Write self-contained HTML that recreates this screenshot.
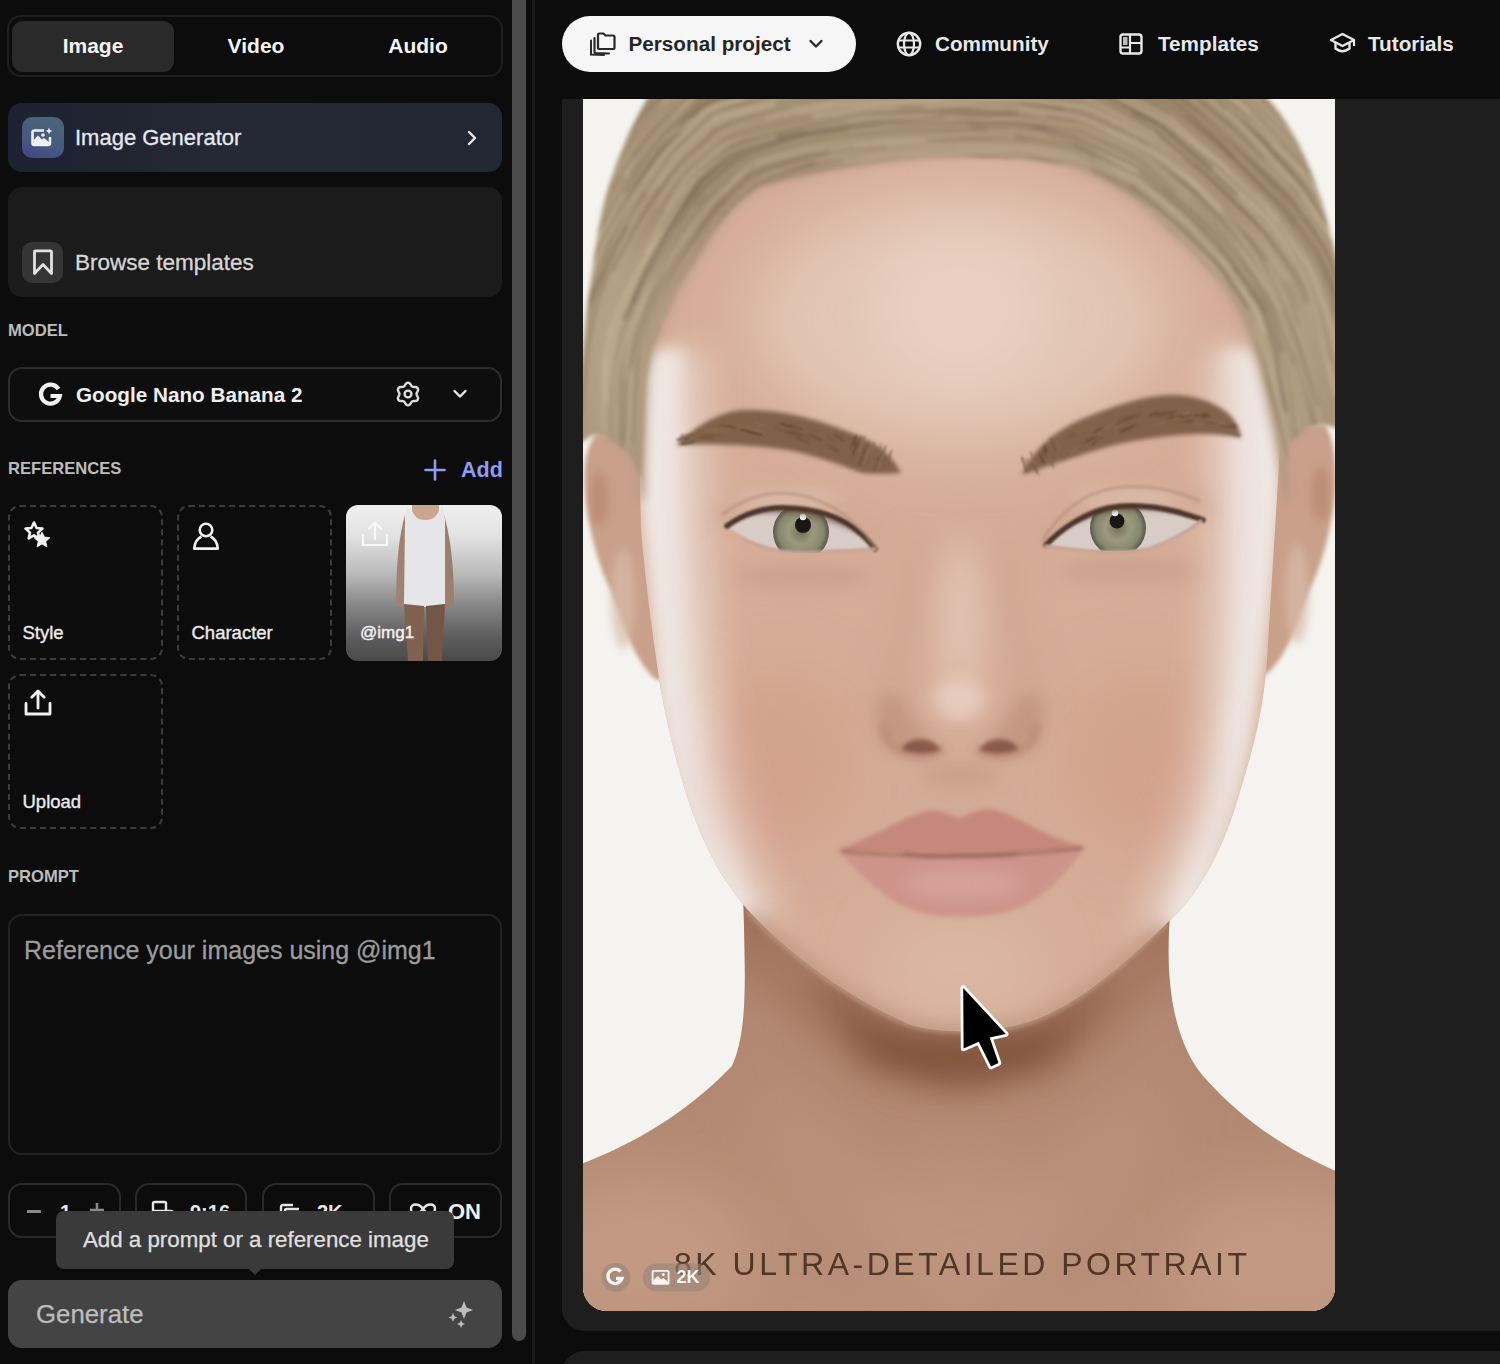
<!DOCTYPE html>
<html><head><meta charset="utf-8">
<style>
*{box-sizing:border-box;margin:0;padding:0}
html,body{width:1500px;height:1364px;overflow:hidden;background:#0c0c0c;font-family:"Liberation Sans",sans-serif;color:#fff}
.abs{position:absolute}
.t{position:absolute;line-height:0;white-space:nowrap}
.tabs{left:7px;top:15px;width:496px;height:62px;border:2px solid #1f1f1f;border-radius:14px}
.tab{position:absolute;top:4px;height:51px;font-size:21px;font-weight:bold;line-height:50px;text-align:center;color:#f4f4f4}
.tab.on{background:#2a2a2a;border-radius:11px}
.card{left:8px;width:494px;border-radius:14px}
.lbl{font-size:16.6px;font-weight:bold;color:#bcbcbc;left:8px}
.ref{width:155px;height:155px;border:2px dashed #3c3c3c;border-radius:12px}
.ref .t{left:12.5px;top:126px;font-size:18.5px;color:#ececec;-webkit-text-stroke:0.35px #ececec}
.btn{top:1183px;height:55px;border:2px solid #2a2a2a;border-radius:14px}
.nav{top:44px;font-size:20.7px;color:#e8e8e8;font-weight:bold}
svg.i{position:absolute;overflow:visible}
</style></head><body>
<!-- sidebar -->
<div class="abs tabs">
  <div class="tab on" style="left:3px;width:162px">Image</div>
  <div class="tab" style="left:165px;width:164px">Video</div>
  <div class="tab" style="left:327px;width:164px">Audio</div>
</div>
<div class="abs card" style="top:103px;height:69px;background:linear-gradient(90deg,#1e2130 0%,#242934 45%,#222832 100%)">
  <div class="abs" style="left:14px;top:14px;width:42px;height:41px;border-radius:10px;background:linear-gradient(200deg,#4d6778 0%,#46597e 60%,#3f4788 100%)"></div>
  <svg class="i" style="left:22px;top:24px" width="24" height="22" viewBox="0 0 24 22">
    <path d="M14,3.5 H4.5 Q2.5,3.5 2.5,5.5 V16 Q2.5,18 4.5,18 H18 Q20,18 20,16 V10" fill="none" stroke="#eef2f8" stroke-width="2.6"/>
    <path d="M3.5,17 L3.5,13 L8,8.5 L12,12.5 L14,11 L19,15 L19,17 Z" fill="#eef2f8"/>
    <circle cx="13" cy="8" r="1.8" fill="#eef2f8"/>
    <path d="M19,0.5 L20,3 L22.5,4 L20,5 L19,7.5 L18,5 L15.5,4 L18,3 Z" fill="#eef2f8"/>
  </svg>
  <div class="t" style="left:67px;top:35px;font-size:22px;color:#e6e9ef;-webkit-text-stroke:0.3px #e6e9ef">Image Generator</div>
  <svg class="i" style="left:457px;top:27px" width="14" height="16" viewBox="0 0 14 16"><path d="M4,2 L10,8 L4,14" fill="none" stroke="#e8e8e8" stroke-width="2.4" stroke-linecap="round" stroke-linejoin="round"/></svg>
</div>
<div class="abs card" style="top:187px;height:110px;background:#1b1b1b">
  <div class="abs" style="left:14px;top:55px;width:41px;height:41px;border-radius:10px;background:#353535"></div>
  <svg class="i" style="left:24px;top:62px" width="22" height="27" viewBox="0 0 22 27"><path d="M2.5,24.5 V3 Q2.5,1.8 3.7,1.8 H18.3 Q19.5,1.8 19.5,3 V24.5 L11,15.5 Z" fill="none" stroke="#e2e2e2" stroke-width="2.8" stroke-linejoin="round"/></svg>
  <div class="t" style="left:67px;top:76px;font-size:22.5px;color:#d6d6d6;-webkit-text-stroke:0.3px #d6d6d6">Browse templates</div>
</div>
<div class="t lbl" style="top:331px">MODEL</div>
<div class="abs card" style="top:367px;height:55px;border:2px solid #2c2c2c;background:#0e0e0e">
  <svg class="i" style="left:28px;top:14px" width="25" height="25" viewBox="0 0 25 25"><path d="M20.5,6 A9.5,9.5 0 1 0 21.8,13 H12.5" fill="none" stroke="#f2f2f2" stroke-width="4.2"/></svg>
  <div class="t" style="left:66px;top:26px;font-size:20.7px;font-weight:bold;color:#eeeeee">Google Nano Banana 2</div>
  <svg class="i" style="left:386px;top:12px" width="24" height="26" viewBox="0 0 24 26">
    <path d="M12.00,1.70 L12.97,1.93 L13.84,2.56 L14.56,3.44 L15.15,4.35 L15.67,5.13 L16.25,5.64 L16.98,5.88 L17.91,5.95 L19.00,6.00 L20.12,6.19 L21.10,6.63 L21.79,7.35 L22.07,8.30 L21.96,9.37 L21.56,10.44 L21.06,11.40 L20.65,12.24 L20.50,13.00 L20.65,13.76 L21.06,14.60 L21.56,15.56 L21.96,16.63 L22.07,17.70 L21.79,18.65 L21.10,19.37 L20.12,19.81 L19.00,20.00 L17.91,20.05 L16.98,20.12 L16.25,20.36 L15.67,20.87 L15.15,21.65 L14.56,22.56 L13.84,23.44 L12.97,24.07 L12.00,24.30 L11.03,24.07 L10.16,23.44 L9.44,22.56 L8.85,21.65 L8.33,20.87 L7.75,20.36 L7.02,20.12 L6.09,20.05 L5.00,20.00 L3.88,19.81 L2.90,19.37 L2.21,18.65 L1.93,17.70 L2.04,16.63 L2.44,15.56 L2.94,14.60 L3.35,13.76 L3.50,13.00 L3.35,12.24 L2.94,11.40 L2.44,10.44 L2.04,9.37 L1.93,8.30 L2.21,7.35 L2.90,6.63 L3.88,6.19 L5.00,6.00 L6.09,5.95 L7.02,5.88 L7.75,5.64 L8.33,5.13 L8.85,4.35 L9.44,3.44 L10.16,2.56 L11.03,1.93 Z" fill="none" stroke="#dcdcdc" stroke-width="2.4" stroke-linejoin="round"/>
    <circle cx="12" cy="13" r="3.4" fill="none" stroke="#dcdcdc" stroke-width="2.4"/>
  </svg>
  <svg class="i" style="left:442px;top:20px" width="16" height="10" viewBox="0 0 16 10"><path d="M2.5,2 L8,7.5 L13.5,2" fill="none" stroke="#e6e6e6" stroke-width="2.4" stroke-linecap="round" stroke-linejoin="round"/></svg>
</div>
<div class="t lbl" style="top:469px">REFERENCES</div>
<svg class="i" style="left:424px;top:459px" width="22" height="22" viewBox="0 0 22 22"><path d="M11,1.5 V20.5 M1.5,11 H20.5" stroke="#8e9df2" stroke-width="2.6" stroke-linecap="round"/></svg>
<div class="t" style="left:461px;top:470px;font-size:21.5px;font-weight:bold;color:#8e9df2">Add</div>
<div class="abs ref" style="left:8px;top:505px">
  <svg class="i" style="left:12px;top:13px" width="30" height="30" viewBox="0 0 30 30">
    <path d="M12,2.5 L14.6,8 L20.5,8.6 L16,12.6 L17.3,18.4 L12,15.4 L6.7,18.4 L8,12.6 L3.5,8.6 L9.4,8 Z" fill="none" stroke="#f0f0f0" stroke-width="2.6" stroke-linejoin="round"/>
    <path d="M20,12.5 L22.3,17.2 L27.5,17.8 L23.6,21.3 L24.7,26.5 L20,23.8 L15.3,26.5 L16.4,21.3 L12.5,17.8 L17.7,17.2 Z" fill="#f0f0f0" stroke="#f0f0f0" stroke-width="1.2" stroke-linejoin="round"/>
  </svg>
  <div class="t">Style</div>
</div>
<div class="abs ref" style="left:177px;top:505px">
  <svg class="i" style="left:13px;top:14px" width="30" height="30" viewBox="0 0 30 30">
    <circle cx="14" cy="9" r="6.3" fill="none" stroke="#f0f0f0" stroke-width="2.6"/>
    <path d="M9.5,15.5 Q3,18.5 2.2,27.6 H25.8 Q25,18.5 18.5,15.5" fill="none" stroke="#f0f0f0" stroke-width="2.6" stroke-linejoin="round"/>
  </svg>
  <div class="t">Character</div>
</div>
<div class="abs" style="left:346px;top:505px;width:156px;height:156px;border-radius:12px;background:linear-gradient(180deg,#efefef 0%,#e2e2e2 20%,#b8b8b8 45%,#8c8c8c 62%,#5c5c5c 85%,#4a4a4a 100%);overflow:hidden">
  <svg class="i" style="left:0;top:0" width="156" height="156" viewBox="0 0 156 156">
    <path d="M59,10 C53,30 50,60 50,100 L59,102 L62,60 Z" fill="#a08270"/>
    <path d="M98,10 C104,30 108,60 108,100 L99,102 L96,60 Z" fill="#9c7e6c"/>
    <path d="M66,0 L93,0 L93,6 C86,20 73,20 66,6 Z" fill="#c9a592"/>
    <path d="M62,0 C63,18 93,22 96,0 L99,14 L99,99 C88,103 70,103 58,99 L59,14 Z" fill="#e6e5e7"/>
    <path d="M58,99 L78,101 L77,156 L62,156 Z" fill="#80604f"/>
    <path d="M80,101 L99,99 L96,156 L82,156 Z" fill="#745646"/>
  </svg>
  <svg class="i" style="left:15px;top:15px" width="28" height="28" viewBox="0 0 28 28"><path d="M14,19 V3 M8,8.5 L14,2.5 L20,8.5 M2,15 V25 H26 V15" fill="none" stroke="#fafafa" stroke-width="2.2" stroke-linecap="round" stroke-linejoin="round" opacity="0.9"/></svg>
  <div class="t" style="left:14px;top:128px;font-size:17px;color:#f4f4f4;-webkit-text-stroke:0.4px #f4f4f4">@img1</div>
</div>
<div class="abs ref" style="left:8px;top:674px">
  <svg class="i" style="left:13px;top:12px" width="30" height="30" viewBox="0 0 30 30"><path d="M15,20 V3.5 M8.8,9.2 L15,3 L21.2,9.2 M3,15.5 V26 H27 V15.5" fill="none" stroke="#f2f2f2" stroke-width="2.8" stroke-linecap="round" stroke-linejoin="round"/></svg>
  <div class="t">Upload</div>
</div>
<div class="t lbl" style="top:877px">PROMPT</div>
<div class="abs card" style="top:914px;height:241px;border:2px solid #222">
  <div class="t" style="left:14px;top:34px;font-size:25px;color:#9c9c9c;-webkit-text-stroke:0.3px #9c9c9c">Reference your images using @img1</div>
</div>
<div class="abs btn" style="left:8px;width:113px">
  <div class="abs" style="left:17px;top:25px;width:14px;height:3px;background:#8a8a8a"></div>
  <div class="t" style="left:50px;top:27px;font-size:20px;font-weight:bold;color:#e6e6e6">1</div>
  <svg class="i" style="left:79px;top:17px" width="16" height="16" viewBox="0 0 16 16"><path d="M8,1 V15 M1,8 H15" stroke="#8a8a8a" stroke-width="2.6"/></svg>
</div>
<div class="abs btn" style="left:135px;width:112px">
  <svg class="i" style="left:14px;top:15px" width="26" height="22" viewBox="0 0 26 22"><path d="M2,20 V3.5 Q2,2 3.5,2 H13.5 Q15,2 15,3.5 V11 H2 M15,11 H20 Q22,11 22,13 V20" fill="none" stroke="#e6e6e6" stroke-width="2.4"/></svg>
  <div class="t" style="left:53px;top:27px;font-size:20px;font-weight:bold;color:#e6e6e6">9:16</div>
</div>
<div class="abs btn" style="left:262px;width:113px">
  <svg class="i" style="left:13px;top:15px" width="26" height="22" viewBox="0 0 26 22"><path d="M4,21 V7 Q4,5 6,5 H16 M8,21 V10.5 Q8,9 9.5,9 H22 M12,13.5 H24 M12,17.5 H24" fill="none" stroke="#e6e6e6" stroke-width="2.4"/></svg>
  <div class="t" style="left:53px;top:27px;font-size:20px;font-weight:bold;color:#e6e6e6">2K</div>
</div>
<div class="abs btn" style="left:389px;width:113px">
  <svg class="i" style="left:17px;top:16px" width="30" height="16" viewBox="0 0 30 16"><path d="M15,8 C11,2 3,2 3,8 C3,14 11,14 15,8 C19,2 27,2 27,8 C27,14 19,14 15,8 Z" fill="none" stroke="#e6e6e6" stroke-width="2.4"/></svg>
  <div class="t" style="left:57px;top:27px;font-size:22px;font-weight:bold;color:#f0f0f0">ON</div>
</div>
<div class="abs" style="left:56px;top:1211px;width:398px;height:58px;background:#3a3a3a;border-radius:8px">
  <div class="t" style="left:27px;top:29px;font-size:22.3px;color:#e0e0e0;-webkit-text-stroke:0.25px #e0e0e0">Add a prompt or a reference image</div>
  <div class="abs" style="left:191px;top:56px;width:0;height:0;border-left:8px solid transparent;border-right:8px solid transparent;border-top:8px solid #3a3a3a"></div>
</div>
<div class="abs" style="left:8px;top:1280px;width:494px;height:68px;border-radius:14px;background:#444">
  <div class="t" style="left:28px;top:34px;font-size:25.8px;color:#bdbdbd;-webkit-text-stroke:0.25px #bdbdbd">Generate</div>
  <svg class="i" style="left:438px;top:19px" width="30" height="30" viewBox="0 0 30 30">
    <path d="M18,2 L20.5,8.5 L27,11 L20.5,13.5 L18,20 L15.5,13.5 L9,11 L15.5,8.5 Z" fill="#bdbdbd"/>
    <path d="M7,14 L8.3,17.2 L11.5,18.5 L8.3,19.8 L7,23 L5.7,19.8 L2.5,18.5 L5.7,17.2 Z" fill="#bdbdbd"/>
    <path d="M15,21 L16.2,23.8 L19,25 L16.2,26.2 L15,29 L13.8,26.2 L11,25 L13.8,23.8 Z" fill="#bdbdbd"/>
  </svg>
</div>
<div class="abs" style="left:512px;top:0;width:14px;height:1341px;border-radius:0 0 7px 7px;background:#4b4b4b"></div>
<div class="abs" style="left:532px;top:0;width:3px;height:1364px;background:#191919"></div>
<!-- nav -->
<div class="abs" style="left:562px;top:16px;width:294px;height:56px;border-radius:28px;background:#f6f6f6"></div>
<svg class="i" style="left:589px;top:32px" width="27" height="24" viewBox="0 0 27 24">
  <path d="M9,4 V2.8 Q9,1.5 10.3,1.5 H14.5 L16.5,3.5 H24 Q25.5,3.5 25.5,5 V15.5 Q25.5,17 24,17 H10.5 Q9,17 9,15.5 Z" fill="none" stroke="#2a2a2a" stroke-width="2.2" stroke-linejoin="round"/>
  <path d="M5.5,6 V20 Q5.5,21 6.5,21.2 L20,21.5" fill="none" stroke="#2a2a2a" stroke-width="2.2" stroke-linecap="round"/>
  <path d="M2,8.5 V22.5 L15,23" fill="none" stroke="#2a2a2a" stroke-width="2" stroke-linecap="round"/>
</svg>
<div class="t nav" style="left:628.5px;color:#262626">Personal project</div>
<svg class="i" style="left:808px;top:38px" width="16" height="12" viewBox="0 0 16 12"><path d="M2.5,3 L8,8.5 L13.5,3" fill="none" stroke="#2a2a2a" stroke-width="2.4" stroke-linecap="round" stroke-linejoin="round"/></svg>
<svg class="i" style="left:896px;top:31px" width="26" height="26" viewBox="0 0 26 26"><circle cx="13" cy="13" r="11.2" fill="none" stroke="#e8e8e8" stroke-width="2.4"/><ellipse cx="13" cy="13" rx="5" ry="11.2" fill="none" stroke="#e8e8e8" stroke-width="2.2"/><path d="M2.5,9.5 H23.5 M2.5,16.5 H23.5" stroke="#e8e8e8" stroke-width="2.2"/></svg>
<div class="t nav" style="left:935px">Community</div>
<svg class="i" style="left:1119px;top:33px" width="24" height="22" viewBox="0 0 24 22"><rect x="1.5" y="1.5" width="21" height="19" rx="2.5" fill="none" stroke="#e8e8e8" stroke-width="2.4"/><path d="M11,1.5 V20.5 M11,10 H22.5 M1.5,14.5 H11" stroke="#e8e8e8" stroke-width="2.2"/><rect x="4" y="4" width="4.5" height="8" fill="#e8e8e8" opacity="0.8"/></svg>
<div class="t nav" style="left:1158px">Templates</div>
<svg class="i" style="left:1329px;top:32px" width="27" height="23" viewBox="0 0 27 23"><path d="M13.5,2 L25,8 L13.5,14 L2,8 Z" fill="none" stroke="#e8e8e8" stroke-width="2.4" stroke-linejoin="round"/><path d="M6.5,10.5 V16.5 Q13.5,22 20.5,16.5 V10.5" fill="none" stroke="#e8e8e8" stroke-width="2.4"/><path d="M25,8 V14" stroke="#e8e8e8" stroke-width="2.2"/></svg>
<div class="t nav" style="left:1368px">Tutorials</div>
<!-- main -->
<div class="abs" style="left:562px;top:99px;width:960px;height:1232px;background:#1e1e1e;border-radius:0 0 0 22px"></div>
<div class="abs" style="left:562px;top:1351px;width:960px;height:60px;background:#1e1e1e;border-radius:22px 0 0 0"></div>
<div class="abs" id="portrait" style="left:583px;top:99px;width:752px;height:1212px;background:#eeece8;border-radius:0 0 24px 24px;overflow:hidden">
<svg width="752" height="1212" viewBox="0 0 752 1212" style="position:absolute;left:0;top:0">
<defs>
<filter id="b1" x="-50%" y="-50%" width="200%" height="200%"><feGaussianBlur stdDeviation="1.2"/></filter>
<filter id="b2" x="-50%" y="-50%" width="200%" height="200%"><feGaussianBlur stdDeviation="2"/></filter>
<filter id="b4" x="-50%" y="-50%" width="200%" height="200%"><feGaussianBlur stdDeviation="4"/></filter>
<filter id="b8" x="-50%" y="-50%" width="200%" height="200%"><feGaussianBlur stdDeviation="8"/></filter>
<filter id="b16" x="-50%" y="-50%" width="200%" height="200%"><feGaussianBlur stdDeviation="16"/></filter>
<filter id="b30" x="-50%" y="-50%" width="200%" height="200%"><feGaussianBlur stdDeviation="30"/></filter>
<linearGradient id="gHair" x1="0" y1="0" x2="0" y2="1">
  <stop offset="0" stop-color="#a18a70"/>
  <stop offset="0.4" stop-color="#a99377"/>
  <stop offset="1" stop-color="#a48f73"/>
</linearGradient>
<linearGradient id="gNeck" x1="0" y1="0" x2="0" y2="1">
  <stop offset="0" stop-color="#9a6e57"/>
  <stop offset="0.3" stop-color="#b0866f"/>
  <stop offset="1" stop-color="#bb917a"/>
</linearGradient>
<radialGradient id="gIris" cx="0.5" cy="0.5" r="0.5">
  <stop offset="0" stop-color="#75705a"/>
  <stop offset="0.45" stop-color="#9b9a7e"/>
  <stop offset="0.8" stop-color="#86876e"/>
  <stop offset="1" stop-color="#56574a"/>
</radialGradient>
<clipPath id="cNeck"><path d="M-10,1068 C40,1050 98,1020 149,967 C166,930 162,870 160,790 L590,790 C580,860 585,935 620,977 C660,1022 705,1052 762,1076 L762,1220 L-10,1220 Z"/></clipPath>
<clipPath id="cFace"><path d="M55,300 C50,60 200,20 377,20 C560,20 712,60 700,300 L684,560 C680,620 667,660 651,712 C635,760 612,800 584,824 C545,862 492,910 442,924 C410,934 345,937 317,921 C270,900 210,860 164,810 C132,772 103,722 78,592 C70,540 62,480 58,430 Z"/></clipPath>
<clipPath id="cHair"><path d="M67,-5 L680,-5 C700,15 720,44 739,103 C745,125 750,145 755,165 L755,330 C740,322 718,326 704,350 L704,400 C700,370 693,340 689,323 C684,300 680,280 675,264 C670,245 666,232 660,220 C650,200 642,188 631,176 C618,160 603,145 587,132 C572,118 558,104 543,94 C525,82 505,72 484,65 C462,63 430,58 380,58 C340,58 290,62 235,73 C212,78 195,82 176,88 C160,98 150,108 138,123 C128,135 120,150 111,164 C102,178 95,190 88,205 C80,222 75,235 70,249 C67,260 66,270 64,279 C62,320 60,360 59,400 L58,380 C48,352 30,338 10,336 L-5,345 L-5,293 C2,230 8,170 18,117 C25,85 40,40 67,-5 Z"/></clipPath>
<clipPath id="cEyeL"><path d="M144,427 C165,412 185,408 205,409 C230,410 250,416 265,425 C278,433 286,442 292,450 C280,452 265,451 250,452 C230,455 210,455 190,450 C172,445 158,437 144,427 Z"/></clipPath>
<clipPath id="cEyeR"><path d="M463,446 C478,430 500,415 525,409 C550,404 575,408 595,413 C605,416 612,418 618,421 C605,432 590,442 565,450 C540,454 500,452 463,446 Z"/></clipPath>
<filter id="thin" x="-5%" y="-20%" width="110%" height="140%"><feMorphology operator="erode" radius="0.35"/><feGaussianBlur stdDeviation="0.5"/></filter>
</defs>
<rect width="752" height="1212" fill="#f4f3ef"/>
<!-- neck & shoulders -->
<path d="M-10,1068 C40,1050 98,1020 149,967 C166,930 162,870 160,790 L590,790 C580,860 585,935 620,977 C660,1022 705,1052 762,1076 L762,1220 L-10,1220 Z" fill="url(#gNeck)"/>
<g clip-path="url(#cNeck)">
 <g filter="url(#b16)">
  <path d="M150,800 C210,862 270,905 317,925 C350,940 410,935 442,926 C492,910 545,865 590,815 L600,860 C560,930 470,985 377,990 C290,985 200,930 150,860 Z" fill="#9a6c53" opacity="0.55"/>
  <path d="M230,870 C270,905 317,925 345,935 C370,940 400,938 442,926 C480,912 510,890 530,872 C510,930 450,985 377,990 C300,985 250,930 230,870 Z" fill="#7f5238" opacity="0.75"/>
  <ellipse cx="377" cy="955" rx="110" ry="32" fill="#7a4e36" opacity="0.45"/>
 </g>
 <path d="M164,812 C210,860 270,902 317,922 C345,936 410,935 442,925 C492,910 545,862 584,824" stroke="#d9b8a4" stroke-width="4" fill="none" opacity="0.5" filter="url(#b2)"/>
 <g filter="url(#b30)">
  <ellipse cx="60" cy="1150" rx="110" ry="70" fill="#c49c86" opacity="0.8"/>
  <ellipse cx="700" cy="1160" rx="110" ry="70" fill="#c49c86" opacity="0.8"/>
  <ellipse cx="377" cy="1140" rx="90" ry="80" fill="#c19882" opacity="0.6"/>
  <path d="M190,1000 C230,1060 280,1110 330,1160" stroke="#c29b85" stroke-width="40" fill="none" opacity="0.6"/>
  <path d="M565,1000 C525,1060 475,1110 425,1160" stroke="#c29b85" stroke-width="40" fill="none" opacity="0.6"/>
  <path d="M240,1150 C280,1180 320,1200 350,1212" stroke="#a87d66" stroke-width="30" fill="none" opacity="0.4"/>
  <path d="M515,1150 C475,1180 435,1200 405,1212" stroke="#a87d66" stroke-width="30" fill="none" opacity="0.4"/>
  <ellipse cx="175" cy="930" rx="30" ry="90" fill="#b88e77" opacity="0.5"/>
  <ellipse cx="580" cy="930" rx="30" ry="90" fill="#b88e77" opacity="0.5"/>
 </g>
</g>
<!-- ears -->
<path d="M12,336 C4,348 0,365 2,390 C4,420 12,460 28,492 C38,520 50,560 72,580 L84,582 L72,338 Z" fill="#c9a08a" filter="url(#b2)"/>
<path d="M742,326 C750,338 754,360 752,390 C750,420 742,460 726,492 C716,520 704,560 682,576 L670,578 L682,330 Z" fill="#c9a08a" filter="url(#b2)"/>
<g filter="url(#b4)" opacity="0.7">
  <ellipse cx="16" cy="400" rx="9" ry="28" fill="#b8866c"/><ellipse cx="40" cy="500" rx="12" ry="50" fill="#d8bca9"/>
  <ellipse cx="738" cy="395" rx="9" ry="28" fill="#b8866c"/><ellipse cx="714" cy="495" rx="12" ry="50" fill="#d8bca9"/>
</g>
<!-- face -->
<path d="M55,300 C50,60 200,20 377,20 C560,20 712,60 700,300 L684,560 C680,620 667,660 651,712 C635,760 612,800 584,824 C545,862 492,910 442,924 C410,934 345,937 317,921 C270,900 210,860 164,810 C132,772 103,722 78,592 C70,540 62,480 58,430 Z" fill="#d6ae98"/>
<g clip-path="url(#cFace)">
 <g filter="url(#b30)">
  <ellipse cx="377" cy="220" rx="210" ry="130" fill="#e2c5b3"/>
  <ellipse cx="377" cy="210" rx="90" ry="80" fill="#e8d0c1"/>
  <ellipse cx="195" cy="660" rx="85" ry="90" fill="#cf9c84" opacity="0.55"/>
  <ellipse cx="560" cy="660" rx="85" ry="90" fill="#cf9c84" opacity="0.55"/>
  <ellipse cx="377" cy="870" rx="80" ry="45" fill="#ddbca8" opacity="0.8"/>
  <ellipse cx="377" cy="700" rx="70" ry="30" fill="#cfa590" opacity="0.6"/>
 </g>
 <g filter="url(#b8)">
  <path d="M50,250 L103,250 C104,330 102,430 112,560 C120,640 140,720 182,822 L150,822 C110,760 85,690 75,600 C68,500 55,400 50,300 Z" fill="#efe8e4"/>
  <path d="M704,250 L640,250 C644,330 650,430 642,560 C636,640 615,720 572,832 L605,832 C640,760 665,690 675,600 C690,500 700,400 704,300 Z" fill="#efe8e4"/>
 </g>
 <g filter="url(#b16)" opacity="0.8">
  <path d="M95,250 L125,250 C126,330 124,430 134,560 C142,640 162,720 200,822 L175,822 C135,760 110,690 100,600 C92,500 90,400 95,300 Z" fill="#e8d6cc"/>
  <path d="M660,250 L620,250 C624,330 630,430 622,560 C616,640 595,720 552,832 L580,832 C615,760 640,690 650,600 C665,500 665,400 660,300 Z" fill="#e8d6cc"/>
 </g>
 <g filter="url(#b8)">
  <path d="M164,812 C210,860 270,902 317,922 C345,936 410,935 442,925 C492,910 545,862 584,824" stroke="#a77d66" stroke-width="10" fill="none" opacity="0.6"/>
 </g>
</g>
<!-- hair -->
<g filter="url(#b2)"><g clip-path="url(#cHair)">
 <rect x="-5" y="-5" width="770" height="430" fill="url(#gHair)"/>
 <g filter="url(#b30)">
  <ellipse cx="200" cy="110" rx="110" ry="50" fill="#857058" opacity="0.6"/>
  <ellipse cx="420" cy="10" rx="150" ry="40" fill="#927564" opacity="0.6"/>
  <ellipse cx="690" cy="250" rx="40" ry="120" fill="#bfad92" opacity="0.6"/>
  <ellipse cx="30" cy="250" rx="40" ry="120" fill="#c2b096" opacity="0.6"/>
 </g>
<g fill="none" stroke-linecap="round" stroke-linejoin="round" opacity="0.85">
<path d="M524.9,31.4 L539.3,38.1 L553.7,44.6 L567.9,51.4 L580.1,60.9 L592.3,70.5 L604.3,80.0 L616.2,89.5 L627.1,100.2 L637.8,111.0 L648.5,121.9 L659.1,133.0 L668.8,144.9 L677.1,158.1" stroke="#c4b295" stroke-width="4.4" opacity="0.55"/>
<path d="M50.1,359.9 L51.6,345.6 L53.1,331.0 L54.4,316.2 L55.5,301.3 L56.3,286.2 L57.1,271.1 L59.5,256.3 L61.7,241.7 L66.0,228.0 L70.4,214.6 L74.8,201.5 L79.9,189.1 L86.0,177.3 L92.3,165.7 L98.9,154.3 L106.6,143.5 L114.7,132.6 L122.9,121.7 L132.6,111.4 L143.8,102.3 L155.2,92.8 L166.6,83.1 L180.0,76.9 L194.3,72.5 L208.5,67.9 L222.3,63.3 L235.9,58.9" stroke="#b8a585" stroke-width="1.6" opacity="0.60"/>
<path d="M210.5,0.4 L225.6,-1.9 L240.8,-3.9 L256.2,-5.8 L271.8,-7.4 L287.8,-8.3 L304.1,-8.1 L320.7,-8.0 L337.6,-8.1 L354.7,-8.3 L371.9,-8.9 L389.1,-9.1" stroke="#8a765c" stroke-width="1.7" opacity="0.50"/>
<path d="M11.4,158.6 L19.0,143.1 L27.7,128.0 L36.3,112.9 L44.8,97.7 L54.3,83.1 L63.7,68.5 L73.0,53.9 L83.5,40.5 L95.9,28.8 L108.1,17.1 L120.4,5.5 L135.3,-1.4 L151.5,-5.7 L167.8,-9.9 L184.2,-14.1 L200.8,-17.9 L217.8,-20.2 L234.9,-22.6 L252.0,-25.0 L269.2,-27.4 L286.5,-29.3 L303.9,-30.2 L321.3,-31.2 L338.6,-32.3 L355.8,-33.4 L373.0,-34.6 L390.1,-35.1 L407.0,-35.1 L424.0,-35.0 L440.8,-34.8 L457.4,-32.4 L474.0,-29.5 L490.6,-26.6 L507.2,-23.6 L522.6,-16.6 L538.0,-9.0 L553.4,-1.3 L569.0,6.3 L584.4,14.3" stroke="#72604a" stroke-width="4.8" opacity="0.50"/>
<path d="M-20.9,344.6 L-19.0,327.3 L-17.3,309.6 L-15.8,291.7 L-14.5,273.5 L-13.5,255.2 L-12.5,237.0 L-9.6,219.1 L-6.9,201.3 L-1.6,184.7 L3.8,168.5 L9.2,152.6 L15.5,137.4 L22.9,123.1 L30.6,109.0 L38.7,95.1 L48.0,81.9 L57.8,68.6 L67.8,55.2 L79.4,42.8 L93.1,31.6 L106.9,20.2" stroke="#c4b295" stroke-width="3.4" opacity="0.55"/>
<path d="M48.2,269.4 L51.2,255.3 L54.1,241.1 L59.4,227.7 L64.9,214.3 L70.3,200.9 L76.5,187.8 L83.5,175.2 L90.5,162.5 L97.4,149.9 L105.3,137.9 L113.1,125.9 L120.9,113.9 L129.9,102.9 L140.4,93.2 L150.9,83.6 L161.5,73.9 L174.3,68.1 L188.2,64.5 L202.2,60.8 L216.2,57.0 L230.2,53.6 L244.5,51.4" stroke="#72604a" stroke-width="2.6" opacity="0.50"/>
<path d="M-29.7,150.3 L-22.4,133.0 L-14.3,116.1 L-5.0,99.6 L4.3,83.2 L13.5,66.7 L23.7,50.9 L33.9,35.1 L44.1,19.3 L55.7,4.9 L69.2,-7.9 L82.8,-20.5 L96.4,-33.1 L112.7,-40.6 L130.7,-45.4" stroke="#5e4d3a" stroke-width="2.2" opacity="0.40"/>
<path d="M50.2,342.9 L50.9,328.7 L51.6,314.5 L52.3,300.2 L53.0,285.9 L53.9,271.7 L56.7,257.6 L59.4,243.6 L64.5,230.3 L69.7,217.1 L74.9,203.9 L80.8,191.2 L87.6,178.9 L94.4,166.6 L101.3,154.4 L109.0,142.7 L116.8,131.0 L124.6,119.3 L133.6,108.6 L144.1,99.1 L154.7,89.5 L165.3,80.0 L178.0,74.2 L191.8,70.4 L205.5,66.6 L219.3,62.7 L233.1,59.2 L247.0,56.9 L261.0,54.6 L274.9,52.3 L288.8,50.1 L302.7,48.4" stroke="#72604a" stroke-width="2.2" opacity="0.50"/>
<path d="M529.6,-36.5 L545.3,-28.8 L561.0,-20.9 L576.8,-13.0 L592.5,-4.5 L606.2,7.2 L620.0,18.9 L634.0,30.6 L648.1,42.3 L661.1,55.1 L674.1,67.8 L687.2,80.4 L700.2,92.9 L712.1,106.2 L722.1,120.7 L732.1,135.2 L742.0,149.6 L749.4,165.2 L754.9,181.7 L760.4,198.3 L765.5,215.1 L769.1,232.4 L772.8,249.8" stroke="#72604a" stroke-width="4.7" opacity="0.50"/>
<path d="M116.8,61.3 L128.9,50.5 L140.9,39.6 L155.3,32.8 L170.8,28.3 L186.2,23.7 L201.4,19.1 L216.6,14.8 L231.9,12.0 L247.2,9.3 L262.4,6.8 L277.5,4.4 L292.8,2.7 L308.2,2.2 L323.7,1.8 L339.4,1.5 L355.2,1.1" stroke="#b8a585" stroke-width="1.8" opacity="0.60"/>
<path d="M102.1,92.9 L112.4,81.0 L124.2,70.3 L136.0,59.4 L147.6,48.5 L161.4,41.7 L176.3,37.1 L191.0,32.5 L205.5,28.1 L220.0,24.0 L234.8,21.5 L249.5,19.2 L264.2,17.0 L279.0,15.0 L294.0,13.7 L309.2,13.4 L324.6,13.2 L340.2,12.9 L355.9,12.6 L371.7,12.2 L387.7,12.3 L403.6,12.6 L419.6,12.9 L435.5,12.9 L451.2,14.8" stroke="#ad9a7b" stroke-width="3.6" opacity="0.60"/>
<path d="M180.0,74.8 L192.7,71.3 L205.5,68.0 L218.4,64.8 L231.6,62.2 L245.3,60.8 L259.2,59.5 L273.4,58.1 L287.7,56.6 L302.3,55.4 L317.0,55.0 L331.8,54.3 L346.6,53.3 L361.3,52.2 L375.7,50.8 L390.0,49.9 L404.1,49.4 L417.9,48.9 L431.5,48.5 L444.8,50.0 L457.9,52.0 L470.9,54.2 L483.9,56.6 L496.0,62.5 L508.1,69.1 L520.4,75.8" stroke="#ad9a7b" stroke-width="2.0" opacity="0.60"/>
<path d="M-3.4,246.2 L0.5,229.8 L4.3,213.2 L10.8,197.3 L17.4,181.3 L23.9,165.3 L30.9,149.7 L38.8,134.6 L46.6,119.6 L54.2,104.8 L62.7,90.7" stroke="#72604a" stroke-width="4.3" opacity="0.50"/>
<path d="M446.0,-78.2 L464.1,-75.4 L482.2,-72.2 L500.4,-68.9 L518.7,-65.5 L535.7,-57.7 L552.6,-49.3 L569.7,-41.0 L586.8,-32.7 L603.7,-24.1 L618.6,-12.1 L633.4,-0.3 L648.2,11.5 L663.0,23.1 L676.5,36.0 L689.8,48.9 L703.1,61.7 L716.2,74.6 L728.1,88.5 L738.1,103.9" stroke="#8a765c" stroke-width="3.5" opacity="0.50"/>
<path d="M-1.8,315.5 L-0.0,298.9 L1.6,282.1 L3.1,264.9 L4.7,247.6 L8.1,230.5 L11.2,213.3 L16.8,197.1 L22.4,181.0 L27.7,165.3 L33.7,150.1 L40.7,135.8 L47.7,121.8 L54.9,108.1 L63.3,95.2 L71.9,82.5 L80.9,69.8 L91.5,58.3 L104.1,48.1 L117.0,37.6 L130.0,27.0 L145.6,20.4 L162.5,15.9 L179.3,11.2 L195.9,6.1 L212.4,1.2 L228.8,-2.3 L244.9,-5.9 L260.8,-9.3 L276.3,-12.7 L291.7,-15.1 L307.1,-16.2 L322.4,-17.0 L337.8,-17.5 L353.4,-17.7 L369.1,-17.7" stroke="#8a765c" stroke-width="3.9" opacity="0.50"/>
<path d="M429.3,50.1 L442.6,52.2 L456.0,54.7 L469.4,57.3 L482.9,60.0 L495.6,65.9 L508.2,72.4 L521.0,78.8 L533.9,85.1 L546.7,91.7 L558.0,100.6 L569.2,109.5 L580.5,118.2 L591.6,126.8 L601.8,136.2 L611.9,145.7 L621.8,155.1 L631.5,164.5 L640.3,174.7 L647.6,186.1 L654.9,197.5 L662.1,209.1 L667.6,221.7 L671.7,235.1 L675.9,248.7 L680.0,262.4 L683.1,276.4 L686.4,290.4 L689.8,304.4 L693.3,318.4 L696.5,332.3 L699.6,346.1 L702.7,359.8" stroke="#72604a" stroke-width="5.0" opacity="0.50"/>
<path d="M464.6,-75.8 L482.8,-72.7 L501.0,-69.5 L519.3,-66.2 L536.3,-58.5 L553.1,-50.2 L570.1,-41.9 L587.1,-33.7 L603.9,-25.0 L618.6,-13.0 L633.4,-1.1 L648.1,10.8 L662.9,22.6 L676.4,35.6 L689.8,48.6 L703.2,61.6 L716.4,74.6 L728.4,88.5 L738.6,103.9" stroke="#5e4d3a" stroke-width="2.7" opacity="0.40"/>
<path d="M-65.2,194.0 L-61.1,174.9 L-53.8,156.7 L-46.2,138.5 L-38.7,120.2 L-30.3,102.4 L-20.8,85.1 L-11.4,67.9 L-2.0,50.7 L8.5,34.3 L19.0,18.0 L29.4,1.7 L41.4,-13.2 L55.5,-26.2 L69.7,-39.2 L83.9,-52.1 L101.1,-59.8 L120.0,-64.6 L138.9,-69.5 L157.9,-74.4 L177.0,-79.0" stroke="#8a765c" stroke-width="1.7" opacity="0.50"/>
<path d="M206.7,-55.1 L224.7,-57.8 L242.6,-60.5 L260.6,-63.1 L278.8,-65.0 L297.1,-65.7 L315.5,-66.4 L333.9,-67.1 L352.4,-67.8 L371.0,-68.6 L389.6,-68.7 L408.2,-68.4 L426.9,-68.1 L445.4,-67.8" stroke="#d2c3a6" stroke-width="3.2" opacity="0.50"/>
<path d="M300.2,35.5 L314.3,34.8 L328.4,34.3 L342.6,33.9 L356.9,33.7 L371.4,33.5 L386.0,33.8 L400.8,34.6 L415.7,35.3 L430.7,35.9 L445.7,38.2 L460.6,40.6 L475.5,42.8 L490.4,44.9 L504.0,50.3 L517.4,56.0 L530.6,61.8 L543.7,67.5 L556.4,73.6 L567.3,82.5 L578.1,91.5 L588.9,100.7" stroke="#b8a585" stroke-width="4.4" opacity="0.60"/>
<path d="M465.8,-82.7 L484.3,-79.5 L502.9,-76.3 L521.4,-73.1 L538.7,-65.4 L555.8,-57.0 L573.0,-48.7 L590.2,-40.3 L607.2,-31.6 L622.1,-19.5 L637.0,-7.4 L651.9,4.6 L666.8,16.6 L680.5,29.8 L694.0,43.1 L707.5,56.3 L720.9,69.6 L733.1,83.8" stroke="#ad9a7b" stroke-width="3.9" opacity="0.60"/>
<path d="M75.5,103.3 L83.3,90.1 L91.1,77.3 L100.4,65.7 L111.7,55.7 L123.2,45.9 L135.0,36.1 L149.5,30.5 L165.5,27.1 L181.7,23.5 L198.1,19.6 L214.5,15.8 L231.2,13.0 L247.8,10.1 L264.2,6.8 L280.3,3.5 L296.2,0.7" stroke="#b8a585" stroke-width="2.3" opacity="0.60"/>
<path d="M560.1,65.2 L571.9,74.7 L583.7,84.1 L595.5,93.5 L607.3,102.8 L618.0,113.2 L628.6,123.6 L639.1,134.0 L649.6,144.4 L659.1,155.7 L667.2,168.2 L675.2,180.8 L683.3,193.4 L689.5,207.0 L694.2,221.3 L698.9,235.8 L703.6,250.3 L707.1,265.1 L710.7,279.9 L714.3,294.6 L717.9,309.3 L721.2,324.1 L724.3,338.8 L727.3,353.4 L730.4,368.0" stroke="#ad9a7b" stroke-width="2.5" opacity="0.60"/>
<path d="M139.4,92.4 L150.3,82.6 L161.1,72.7 L174.1,66.6 L188.2,62.6 L202.3,58.5 L216.2,54.5 L230.1,50.7 L244.3,48.3 L258.4,46.0 L272.4,43.7 L286.4,41.5 L300.5,40.0 L314.8,39.4 L329.1,38.9 L343.4,38.4 L357.9,37.9 L372.4,37.5 L387.0,37.5 L401.6,38.0 L416.3,38.4 L431.1,38.7 L445.6,40.8 L460.1,43.0 L474.6,45.2 L489.0,47.4 L502.3,52.8" stroke="#ad9a7b" stroke-width="4.8" opacity="0.60"/>
<path d="M353.7,-53.9 L371.9,-54.8 L390.2,-55.2 L408.3,-55.1 L426.4,-55.1 L444.4,-55.1 L462.0,-52.8 L479.6,-50.2 L497.0,-47.6 L514.3,-44.8 L530.3,-37.9 L546.1,-30.2 L562.0,-22.4 L577.8,-14.5 L593.5,-6.2 L607.2,5.5 L621.1,17.2 L635.0,28.9 L649.1,40.6 L662.0,53.4 L675.0,66.2 L688.1,78.9 L701.1,91.5 L712.9,104.9 L723.1,119.6 L733.1,134.3" stroke="#5e4d3a" stroke-width="1.7" opacity="0.40"/>
<path d="M428.6,-88.9 L448.5,-88.6 L468.1,-86.1 L487.6,-83.4 L506.9,-80.9 L526.0,-78.4 L543.5,-71.5 L560.6,-63.9 L577.5,-56.2 L594.3,-48.4 L610.7,-39.9 L624.9,-27.8 L639.1,-15.4 L653.4,-2.8 L667.8,9.9 L681.2,24.1 L694.7,38.4 L708.5,52.7 L722.4,66.9 L735.3,81.9 L746.6,98.3 L757.8,114.4 L769.1,130.4 L777.9,147.3 L784.6,165.0 L791.1,182.5 L797.2,200.1 L801.6,218.1 L805.7,236.1 L809.7,254.3 L813.6,272.6 L816.8,291.2 L819.7,310.1 L822.7,329.2" stroke="#8a765c" stroke-width="2.9" opacity="0.50"/>
<path d="M372.5,-6.1 L388.2,-6.3 L404.1,-5.9 L419.9,-5.4 L435.8,-4.9 L451.6,-2.3 L467.4,0.6 L483.4,3.4 L499.3,6.3 L514.2,12.7 L528.9,19.7 L543.6,26.5 L558.3,33.4 L572.8,40.4 L585.3,50.4 L597.8,60.3 L610.2,70.2 L622.6,80.2 L633.9,91.2 L645.0,102.4 L656.1,113.7 L667.3,125.0 L677.3,137.2 L685.9,150.7 L694.6,164.2" stroke="#b8a585" stroke-width="1.7" opacity="0.60"/>
<path d="M59.8,192.0 L65.7,178.6 L72.7,165.9 L79.7,153.1 L86.8,140.5 L94.8,128.5 L103.1,116.4 L111.4,104.4 L121.0,93.3 L132.2,83.4 L143.5,73.4 L154.8,63.4 L168.3,57.2 L183.0,53.1 L197.6,48.9" stroke="#c4b295" stroke-width="1.9" opacity="0.55"/>
<path d="M-17.2,293.4 L-15.5,276.2 L-13.8,258.6 L-11.9,240.8 L-8.0,223.1 L-4.4,205.2 L1.7,188.3 L7.8,171.4 L13.6,154.7 L20.1,138.7 L27.4,123.5 L34.7,108.5 L42.1,93.9 L50.6,80.2 L59.4,66.8 L68.4,53.5 L79.1,41.4 L91.9,30.9 L105.1,20.2 L118.5,9.3 L134.6,2.8 L152.2,-1.6 L169.8,-6.2 L187.3,-11.2 L204.6,-16.1 L222.1,-19.6 L239.2,-23.3" stroke="#72604a" stroke-width="1.6" opacity="0.50"/>
<path d="M77.1,-31.5 L90.3,-44.3 L106.4,-51.7 L124.1,-56.1 L142.1,-60.4 L160.3,-64.5 L178.9,-68.3 L198.0,-70.4 L217.4,-72.7 L236.9,-75.1 L256.6,-77.7 L276.3,-79.9 L296.1,-81.1 L315.9,-82.6 L335.4,-84.2 L354.7,-85.9 L373.8,-87.7 L392.7,-88.8 L411.3,-89.1 L429.7,-89.3 L448.0,-89.3 L466.0,-86.6 L484.0,-83.3 L502.0,-79.8 L520.2,-76.1 L537.2,-67.8 L554.3,-58.8 L571.6,-49.8 L589.1,-40.8" stroke="#ad9a7b" stroke-width="4.8" opacity="0.60"/>
<path d="M-21.7,267.6 L-21.9,250.4 L-21.6,233.5 L-18.9,217.2 L-15.9,200.9 L-9.8,185.7 L-3.2,170.6 L3.7,155.4 L11.7,140.4 L21.0,125.8 L30.3,111.0 L39.8,95.8 L50.2,81.1 L60.5,66.1 L70.6,50.9 L81.8,36.7 L94.6,24.0 L107.2,11.4 L119.4,-1.2 L134.1,-8.9 L150.0,-13.8 L165.8,-18.4 L181.7,-22.8 L197.7,-26.6 L214.1,-28.6" stroke="#8a765c" stroke-width="5.0" opacity="0.50"/>
<path d="M65.2,92.4 L73.3,78.8 L81.5,65.5 L91.1,53.5 L102.7,43.2 L114.6,32.9 L126.8,22.8 L141.8,17.0 L158.3,13.4 L175.1,9.7 L191.9,5.6 L208.9,1.6 L226.1,-1.2 L243.2,-4.2 L260.1,-7.5 L276.8,-11.0 L293.2,-13.8 L309.4,-15.6 L325.4,-17.3 L341.1,-18.8 L356.7,-20.0 L372.2,-20.9 L387.7,-21.0 L403.3,-20.2 L419.1,-19.2" stroke="#c4b295" stroke-width="4.1" opacity="0.55"/>
<path d="M598.4,-11.7 L612.9,-0.2 L627.4,11.1 L641.9,22.4 L656.2,33.5 L669.2,45.9 L682.1,58.3 L694.8,70.7 L707.4,83.3 L718.7,96.8 L728.3,111.9 L737.8,127.1 L747.4,142.5 L754.8,159.1 L760.4,176.7 L766.1,194.3 L771.7,212.1 L776.0,230.3 L780.4,248.4 L785.0,266.4 L789.6,284.3 L793.7,302.2 L797.7,320.0 L801.5,337.7 L805.4,355.3" stroke="#72604a" stroke-width="1.6" opacity="0.50"/>
<path d="M55.0,-29.9 L68.6,-43.0 L82.2,-55.9 L98.9,-63.3 L117.3,-67.7 L136.0,-71.9 L154.9,-76.2 L174.1,-80.1 L194.0,-82.5 L214.0,-85.0 L234.1,-87.7 L254.3,-90.7 L274.5,-93.1 L294.7,-94.6 L314.7,-96.2 L334.5,-98.0 L354.1,-99.8 L373.4,-101.6 L392.5,-102.6 L411.4,-102.8 L430.2,-102.7 L448.9,-102.5 L467.4,-99.5 L485.9,-95.9 L504.5,-92.1 L523.4,-88.1" stroke="#72604a" stroke-width="4.7" opacity="0.50"/>
<path d="M389.7,-64.9 L408.9,-64.7 L428.0,-64.7 L446.9,-64.9 L465.5,-63.0 L483.7,-60.8 L501.7,-58.7 L519.5,-56.5 L535.7,-49.9 L551.5,-42.5 L567.3,-34.9 L582.9,-27.0 L598.4,-18.5 L611.9,-6.4 L625.5,5.9 L639.4,18.3 L653.5,30.8 L666.8,44.5 L680.2,58.2" stroke="#5e4d3a" stroke-width="4.5" opacity="0.40"/>
<path d="M-4.4,224.3 L-1.4,207.9 L4.4,192.4 L10.5,177.1 L16.7,161.8 L23.8,147.0 L32.1,132.7 L40.4,118.3 L48.9,103.9 L58.4,90.1 L68.0,76.1 L77.6,62.1 L88.5,49.1 L101.1,37.5 L113.7,25.8 L126.2,14.1 L141.1,6.9 L157.2,2.2 L173.3,-2.5 L189.3,-7.2 L205.3,-11.4 L221.5,-14.0 L237.8,-16.5 L254.1,-18.9 L270.5,-21.2 L287.0,-22.8 L303.8,-23.3 L320.6,-23.8 L337.5,-24.3 L354.5,-24.9 L371.6,-25.5 L388.7,-25.7 L405.9,-25.3 L423.0,-25.1 L440.1,-25.0 L457.0,-22.8 L473.7,-20.4 L490.3,-17.9 L506.8,-15.5" stroke="#b8a585" stroke-width="3.4" opacity="0.60"/>
<path d="M371.3,-73.4 L389.1,-73.5 L407.0,-72.9 L424.9,-72.0 L443.1,-71.1 L461.1,-67.7 L479.4,-64.0 L497.9,-60.4 L516.5,-56.9 L533.9,-49.2 L551.2,-41.1 L568.5,-33.2 L585.8,-25.4 L602.8,-17.5 L617.5,-6.4 L632.0,4.7 L646.3,15.7 L660.5,26.8 L673.2,39.2 L685.8,51.8" stroke="#d2c3a6" stroke-width="4.3" opacity="0.50"/>
<path d="M189.2,-47.3 L208.1,-50.2 L226.9,-53.3 L245.6,-56.6 L264.0,-60.0 L282.4,-62.9 L300.6,-64.5 L318.7,-66.2 L336.5,-67.7 L354.2,-69.0 L371.7,-70.1 L389.3,-70.4 L406.9,-69.8 L424.6,-69.0 L442.4,-68.0 L460.3,-64.6" stroke="#5e4d3a" stroke-width="4.3" opacity="0.40"/>
<path d="M122.8,95.4 L134.2,85.3 L145.6,75.0 L156.9,64.6 L170.3,58.1 L184.7,53.7 L199.0,49.3 L213.1,44.9 L227.1,40.9 L241.2,38.3 L255.4,35.9 L269.4,33.7 L283.6,31.6 L297.8,30.2 L312.3,29.9 L326.8,29.7 L341.6,29.5 L356.5,29.3 L371.6,29.0 L386.8,29.2 L402.1,29.7 L417.5,30.1 L432.8,30.3 L448.0,32.2 L463.0,34.3" stroke="#c4b295" stroke-width="4.3" opacity="0.55"/>
<path d="M438.3,-18.3 L454.5,-15.9 L470.7,-13.1 L486.9,-10.3 L503.1,-7.5 L518.2,-0.8 L533.1,6.4 L548.1,13.6 L563.1,20.8 L577.9,28.3 L590.9,38.8 L603.8,49.2 L616.7,59.7 L629.6,70.1 L641.4,81.6 L653.1,93.1" stroke="#5e4d3a" stroke-width="5.0" opacity="0.40"/>
<path d="M-74.8,287.1 L-74.6,267.7 L-74.4,248.4 L-74.1,229.3 L-73.2,210.4 L-69.5,191.9 L-65.6,173.4 L-58.2,155.8 L-50.4,138.2 L-42.4,120.5 L-33.4,103.0 L-23.2,86.0 L-13.0,68.7 L-2.8,51.3 L8.3,34.4 L19.3,17.4 L30.1,0.4 L42.3,-15.3 L56.3,-29.1 L70.2,-42.8 L84.0,-56.3" stroke="#b8a585" stroke-width="3.1" opacity="0.60"/>
<path d="M357.0,9.0 L373.8,8.0 L390.5,7.3 L407.0,6.8 L423.3,6.1 L439.2,5.3 L454.6,6.4 L469.6,7.9 L484.4,9.6 L498.9,11.6 L512.1,17.4 L525.1,24.2 L538.1,31.2 L551.3,38.6 L564.6,46.6 L576.3,57.6 L588.4,68.7 L600.8,79.7 L613.5,90.7 L625.5,102.5 L637.6,114.1 L649.9,125.3 L662.1,136.2 L673.2,147.6 L682.7,159.9" stroke="#72604a" stroke-width="4.4" opacity="0.50"/>
<path d="M92.2,56.0 L105.1,44.7 L118.0,33.1 L130.7,21.4 L145.7,14.0 L161.8,9.0 L177.8,3.9 L193.5,-1.1 L209.1,-5.6 L224.9,-8.5 L240.6,-11.3 L256.2,-13.8 L271.9,-16.1 L287.8,-17.5 L303.9,-17.8 L320.2,-18.0 L336.7,-18.1 L353.4,-18.2 L370.3,-18.4 L387.4,-18.2 L404.7,-17.5 L421.9,-17.1 L439.2,-16.9 L456.2,-14.8 L473.1,-12.5 L489.8,-10.5 L506.3,-8.4 L521.3,-2.6 L536.0,3.9 L550.5,10.4" stroke="#c4b295" stroke-width="4.4" opacity="0.55"/>
<path d="M512.9,64.9 L526.4,70.9 L539.8,76.8 L552.9,82.9 L564.2,91.5 L575.4,100.1 L586.4,108.7 L597.3,117.3 L607.1,126.9 L616.8,136.8 L626.5,146.7 L636.1,156.9 L644.8,167.9 L652.2,180.1 L659.8,192.4 L667.5,204.9 L673.5,218.2 L678.3,232.2 L683.1,246.2 L687.9,260.2 L691.7,274.3 L695.5,288.3" stroke="#b8a585" stroke-width="3.2" opacity="0.60"/>
<path d="M373.1,30.2 L387.4,30.0 L401.7,30.5 L416.1,31.1 L430.5,31.7 L444.9,34.3 L459.4,37.1 L474.1,39.9 L488.8,42.6 L502.5,48.6 L516.2,55.0 L529.8,61.3 L543.5,67.5 L556.9,73.9 L568.5,82.8 L580.0,91.8 L591.4,100.7 L602.6,109.6 L612.8,119.5 L622.9,129.6 L632.9,139.9 L642.9,150.2 L652.0,161.4 L659.7,173.8 L667.5,186.4 L675.4,199.0 L681.5,212.5 L686.3,226.8 L691.2,241.1 L695.9,255.3 L699.7,269.8 L703.4,284.2 L707.2,298.5 L711.0,312.6 L714.3,326.8" stroke="#d2c3a6" stroke-width="4.8" opacity="0.50"/>
<path d="M105.7,-15.9 L122.2,-23.4 L140.2,-28.3 L158.1,-33.5 L175.9,-38.7 L193.5,-43.7 L211.4,-47.0 L229.1,-50.3 L246.6,-53.5 L264.0,-56.6 L281.4,-58.8 L298.9,-59.7 L316.4,-60.4 L334.0,-61.0 L351.7,-61.4 L369.6,-61.8 L387.6,-61.4 L405.9,-60.5 L424.2,-59.6 L442.8,-58.9 L461.2,-56.0 L479.6,-53.0 L498.0,-50.1 L516.4,-47.4" stroke="#c4b295" stroke-width="4.0" opacity="0.55"/>
<path d="M38.9,351.3 L38.7,336.8 L38.6,322.6 L38.5,308.6 L38.7,294.7 L39.2,280.9 L40.2,267.1 L43.3,253.6 L46.7,239.9 L52.7,226.8 L59.1,213.5 L65.5,199.9 L72.5,186.5 L80.3,173.3" stroke="#8a765c" stroke-width="4.3" opacity="0.50"/>
<path d="M344.3,42.3 L359.9,41.4 L375.4,40.2 L390.7,39.2 L405.7,38.5 L420.4,37.7 L434.8,36.9 L448.7,37.9 L462.2,39.4 L475.6,41.1 L488.7,43.2 L500.8,48.9 L512.8,55.5 L524.9,62.3 L537.3,69.4 L549.8,77.0 L560.9,87.3 L572.4,97.6 L584.1,107.8 L596.2,117.7 L607.5,128.4 L618.9,138.8 L630.3,148.8 L641.5,158.5 L651.7,168.7 L660.2,179.8 L668.4,190.7 L676.2,201.7 L681.9,213.6 L685.8,226.4 L689.5,239.5 L692.9,252.9 L695.1,267.1 L697.3,281.5 L699.8,296.3 L702.4,311.3" stroke="#5e4d3a" stroke-width="4.8" opacity="0.40"/>
<path d="M44.0,278.2 L43.8,263.8 L45.6,250.1 L47.6,236.6 L52.4,224.1 L57.6,211.8 L63.2,199.4 L69.8,187.4 L77.7,175.6 L85.7,163.6 L93.9,151.2 L103.1,139.1 L112.2,126.6 L121.1,113.8 L130.9,101.7 L142.0,90.8 L152.8,79.8 L163.2,68.9 L175.5,62.0 L188.7,57.4 L201.7,53.1 L214.5,49.2 L227.5,45.9 L240.9,44.2 L254.4,42.7 L268.2,41.5 L282.3,40.5" stroke="#d2c3a6" stroke-width="4.9" opacity="0.50"/>
<path d="M494.5,-36.4 L512.9,-33.6 L530.0,-27.1 L546.7,-20.2 L563.1,-13.6 L579.3,-7.0 L594.9,-0.1 L608.2,10.1 L621.2,20.5 L634.0,31.1 L646.6,42.0 L658.1,54.4 L669.6,67.2 L681.2,80.2 L693.1,93.5 L704.1,107.9 L713.7,123.7 L723.7,139.4 L733.9,155.0 L742.1,171.5 L748.8,188.7 L755.5,205.5 L761.9,222.1 L766.9,238.8 L771.8,255.3 L776.3,271.5" stroke="#8a765c" stroke-width="5.0" opacity="0.50"/>
<path d="M56.1,204.6 L60.5,191.1 L65.8,178.2 L72.2,166.1 L78.9,154.2 L85.9,142.4 L94.1,131.2 L102.7,119.9 L111.5,108.4 L121.7,97.7 L133.7,88.0 L145.7,78.0 L157.6,67.7 L171.6,61.0 L186.6,56.2 L201.3,51.3 L215.6,46.3 L229.6,41.7 L243.7,38.4 L257.4,35.4 L271.0,32.7 L284.5,30.3 L298.1,28.8 L311.8,28.6 L325.8,28.6 L340.0,28.9 L354.5,29.3 L369.4,29.7 L384.6,30.5 L400.1,31.7 L415.8,32.6 L431.7,33.2 L447.4,35.3 L463.0,37.4 L478.5,39.1 L493.8,40.7 L507.7,45.5" stroke="#b8a585" stroke-width="2.5" opacity="0.60"/>
<path d="M100.6,110.0 L108.3,97.5 L117.3,86.2 L127.9,76.4 L138.7,66.7 L149.7,57.0 L163.1,51.5 L177.8,48.0 L192.7,44.5 L207.7,40.9 L222.9,37.5 L238.4,35.2 L253.8,32.7 L269.2,30.1 L284.4,27.3 L299.6,25.1 L314.6,23.8 L329.5,22.4 L344.3,21.2 L358.9,20.1 L373.4,19.1 L387.9,18.8 L402.4,19.2 L417.0,19.8 L431.6,20.5 L446.2,23.2 L461.0,26.2 L475.9,29.3" stroke="#8a765c" stroke-width="4.4" opacity="0.50"/>
<path d="M138.0,116.6 L149.2,107.1 L160.3,97.2 L171.2,87.1 L184.0,80.6 L197.7,76.0 L211.1,71.4 L224.2,66.9 L237.1,62.8 L250.1,60.2 L262.9,57.8 L275.7,55.7 L288.6,53.8 L301.7,52.8 L315.0,52.8 L328.6,53.0 L342.4,53.3 L356.6,53.5 L371.0,53.6 L385.6,54.1 L400.4,54.8 L415.3,55.2 L430.2,55.3 L444.8,56.9 L459.2,58.5 L473.4,60.0 L487.3,61.4 L500.0,65.9 L512.2,71.0 L524.2,76.3 L536.0,81.7 L547.5,87.8 L557.3,96.6" stroke="#5e4d3a" stroke-width="3.5" opacity="0.40"/>
<path d="M593.6,-43.6 L611.7,-35.1 L627.5,-23.4 L643.2,-11.9 L658.5,-0.5 L673.7,10.7 L687.2,23.2 L700.5,35.9 L713.5,48.7 L726.2,61.8 L737.7,76.1 L747.3,92.2 L756.9,108.6 L766.7,125.2 L774.2,143.2 L780.1,162.4 L786.2,181.6 L792.4,200.9 L797.3,220.5 L802.5,239.9 L807.9,259.0 L813.3,277.9 L818.2,296.5" stroke="#72604a" stroke-width="2.0" opacity="0.50"/>
<path d="M40.4,386.7 L41.9,372.1 L43.3,357.2 L44.5,342.1 L45.6,326.8 L46.4,311.4 L46.9,296.1 L47.2,280.7 L47.5,265.6 L49.6,250.9 L51.6,236.4 L56.0,222.9 L60.7,209.7 L65.4,196.8 L71.1,184.4 L77.9,172.6 L84.9,160.9 L92.2,149.1 L100.7,137.7 L109.3,126.2 L118.1,114.5 L128.1,103.4 L139.6,93.5 L151.1,83.2 L162.4,72.8 L175.7,66.1" stroke="#d2c3a6" stroke-width="2.1" opacity="0.50"/>
<path d="M67.0,275.6 L68.9,262.4 L70.8,249.4 L75.2,237.3 L80.0,225.4 L84.9,213.6 L90.8,202.2 L97.7,191.1 L104.9,179.8 L112.2,168.4 L120.4,157.3 L128.6,146.0 L136.8,134.4 L146.0,123.5 L156.5,113.7 L166.8,103.8 L176.8,93.8 L188.6,87.5 L201.3,83.3 L213.8,79.2 L226.2,75.3 L238.6,71.9 L251.3,70.0 L264.0,68.3 L276.8,66.8 L289.9,65.4 L303.2,64.6 L316.8,64.7 L330.7,64.8 L344.8,64.7 L359.0,64.4 L373.3,64.0 L387.6,63.8 L402.0,63.8 L416.2,63.6" stroke="#8a765c" stroke-width="3.7" opacity="0.50"/>
<path d="M387.6,42.7 L402.3,43.0 L417.0,43.1 L431.6,43.0 L446.0,44.8 L460.2,46.7 L474.3,48.6 L488.2,50.6 L501.0,55.9 L513.6,61.8 L526.1,67.8" stroke="#72604a" stroke-width="3.4" opacity="0.50"/>
<path d="M-48.3,258.1 L-48.1,239.8 L-47.4,221.6 L-44.2,203.9 L-40.9,186.3 L-34.3,169.7 L-27.3,153.1 L-20.0,136.6 L-11.8,120.4 L-2.2,104.6 L7.4,88.6 L17.1,72.5 L27.8,56.9" stroke="#ad9a7b" stroke-width="1.6" opacity="0.60"/>
<path d="M302.6,45.1 L315.6,44.5 L328.8,44.3 L342.1,44.4 L355.7,44.7 L369.6,45.1 L383.8,46.0 L398.4,47.3 L413.3,48.5 L428.4,49.4 L443.4,51.8 L458.6,54.1 L473.6,56.1 L488.5,57.8 L502.1,62.5 L515.3,67.5 L528.2,72.5 L540.7,77.5 L552.8,82.9 L562.9,91.1 L572.8,99.6 L582.7,108.4 L592.5,117.6 L601.6,128.0" stroke="#c4b295" stroke-width="3.1" opacity="0.55"/>
<path d="M337.0,-40.9 L354.4,-41.7 L371.9,-42.6 L389.3,-42.9 L406.7,-42.5 L424.1,-42.2 L441.5,-41.9 L458.7,-39.4 L475.9,-36.5 L493.0,-33.7 L510.1,-30.8 L526.0,-23.9 L541.7,-16.5 L557.4,-9.0 L573.1,-1.5 L588.6,6.4 L602.1,17.4 L615.6,28.5 L629.1,39.5 L642.6,50.6 L654.9,62.8 L667.3,75.1 L679.6,87.4 L692.0,99.7 L703.2,112.9 L712.8,127.4" stroke="#5e4d3a" stroke-width="2.5" opacity="0.40"/>
<path d="M205.6,-8.5 L222.2,-11.1 L238.8,-13.6 L255.3,-16.2 L271.9,-18.7 L288.5,-20.7 L305.3,-21.5 L322.0,-22.4 L338.7,-23.2 L355.4,-24.1 L372.1,-24.9 L388.8,-25.1 L405.6,-24.8 L422.3,-24.4 L439.0,-24.1 L455.6,-21.6 L472.1,-18.8 L488.6,-16.1 L505.2,-13.3 L520.5,-6.7 L535.6,0.5 L550.8,7.7 L565.9,14.9 L580.9,22.4 L593.8,33.0 L606.8,43.6 L619.8,54.2 L632.8,64.8 L644.6,76.6 L656.5,88.4 L668.3,100.2 L680.1,112.1 L690.9,124.8 L700.1,138.8 L709.3,152.8" stroke="#b8a585" stroke-width="3.9" opacity="0.60"/>
<path d="M-13.3,95.9 L-3.0,79.1 L7.3,62.0 L18.5,45.4 L29.5,28.6 L40.2,11.7 L52.1,-4.0 L65.7,-17.8 L79.1,-31.5 L92.3,-45.0 L108.2,-53.1 L125.6,-58.1 L143.1,-62.7 L160.7,-67.2 L178.5,-71.0 L197.0,-72.9 L215.8,-74.8 L234.9,-76.7 L254.2,-78.8 L273.9,-80.2 L293.9,-80.8 L313.9,-81.6 L334.0,-82.7 L353.9,-84.1 L373.7,-85.8 L393.3,-86.9 L412.5,-87.5 L431.5,-88.1 L450.2,-88.7 L468.4,-86.7 L486.3,-84.1 L504.2,-81.2 L522.0,-78.1 L538.4,-70.2 L554.9,-61.4 L571.5,-52.4 L588.4,-43.3 L605.3,-33.7 L620.3,-20.7 L635.6,-7.7" stroke="#b8a585" stroke-width="4.4" opacity="0.60"/>
<path d="M514.0,59.9 L526.8,66.1 L539.7,72.4 L552.5,78.9 L563.6,88.2 L574.7,97.5 L585.8,106.7 L597.1,116.0 L607.4,126.2 L617.7,136.5 L628.0,146.7 L638.3,156.9 L647.8,167.8" stroke="#c4b295" stroke-width="3.8" opacity="0.55"/>
<path d="M339.9,-7.3 L356.8,-8.2 L373.6,-9.3 L390.4,-10.0 L407.0,-10.3 L423.3,-10.6 L439.5,-10.9 L455.3,-9.2 L470.9,-7.1 L486.4,-4.8 L501.8,-2.3 L516.0,4.2 L530.0,11.3 L544.1,18.7 L558.4,26.2 L572.6,34.1" stroke="#d2c3a6" stroke-width="2.0" opacity="0.50"/>
<path d="M79.6,4.7 L92.1,-7.5 L104.6,-19.3 L119.9,-26.1 L136.9,-30.1 L154.2,-34.0 L171.7,-37.8 L189.5,-41.4 L207.9,-43.5 L226.5,-45.8 L245.1,-48.3 L263.8,-51.0 L282.6,-53.3 L301.3,-54.7 L319.9,-56.3 L338.2,-58.0 L356.3,-59.7 L374.1,-61.5 L391.8,-62.4 L409.2,-62.7 L426.5,-62.7 L443.7,-62.4 L460.7,-59.6 L477.7,-56.3 L494.9,-52.7 L512.3,-49.0 L528.7,-41.0 L545.1,-32.4 L561.7,-23.9 L578.6,-15.5 L595.4,-6.9" stroke="#b8a585" stroke-width="4.9" opacity="0.60"/>
<path d="M33.5,306.9 L33.9,292.0 L34.3,277.2 L35.1,262.5 L37.9,248.1 L40.7,233.7 L46.2,220.0 L51.9,206.4 L57.7,192.8 L64.3,179.5 L71.9,166.5 L79.4,153.5 L87.0,140.4 L95.4,127.8 L103.7,115.1 L112.0,102.4 L121.4,90.7 L132.4,80.3 L143.2,70.0 L154.0,59.7 L167.0,53.6 L181.2,49.6 L195.4,45.7 L209.6,41.9 L223.9,38.5 L238.5,36.4 L253.2,34.4 L268.0,32.4 L282.9,30.3 L297.9,28.8 L313.0,28.2 L328.1,27.5 L343.3,26.8 L358.4,26.0 L373.5,25.1 L388.6,24.7 L403.6,24.8 L418.6,24.8 L433.4,24.9 L448.1,26.9" stroke="#8a765c" stroke-width="2.1" opacity="0.50"/>
<path d="M50.7,56.8 L60.9,41.9 L72.6,28.0 L86.0,15.6 L99.3,3.2 L112.5,-9.3 L128.1,-17.0 L145.1,-22.1 L161.9,-27.2 L178.6,-32.1 L195.4,-36.5 L212.4,-39.2 L229.5,-41.8 L246.7,-44.2 L263.9,-46.5 L281.4,-48.1 L299.1,-48.5" stroke="#72604a" stroke-width="2.9" opacity="0.50"/>
<path d="M79.5,84.6 L87.4,71.2 L96.7,59.2 L107.9,48.9 L119.4,38.8 L131.1,28.8 L145.5,23.1 L161.5,19.8 L177.8,16.3 L194.2,12.6 L210.8,9.0 L227.8,6.5 L244.8,3.7 L261.6,0.7 L278.2,-2.5 L294.6,-5.3 L310.9,-7.0 L326.8,-8.8 L342.5,-10.4 L358.0,-11.9 L373.3,-13.1" stroke="#ad9a7b" stroke-width="1.6" opacity="0.60"/>
<path d="M457.0,-33.2 L472.6,-30.3 L488.4,-27.0 L504.4,-23.4 L519.4,-15.6 L534.5,-7.2 L550.0,1.2 L565.8,9.6 L581.7,18.2 L595.8,29.6 L610.1,40.7 L624.5,51.5 L638.8,62.0 L651.8,73.3 L664.6,84.4 L677.0,95.4 L689.1,106.3 L699.8,118.1 L708.6,131.4 L717.1,144.8 L725.5,158.6 L731.6,173.7 L735.9,190.0 L740.4,206.7" stroke="#ad9a7b" stroke-width="3.3" opacity="0.60"/>
<path d="M21.1,331.5 L20.8,316.3 L20.7,301.3 L20.6,286.5 L20.8,271.9 L21.6,257.5 L24.7,243.3 L28.0,229.0 L34.2,215.4 L40.8,201.7 L47.6,187.7 L55.1,173.7 L63.5,160.0 L71.8,146.1 L79.9,131.9 L88.7,118.1 L97.3,104.4 L105.5,90.6 L114.7,77.9 L125.4,66.9 L135.9,56.1 L146.3,45.5 L159.0,39.4 L173.1,35.8 L187.3,32.4 L201.7,29.1 L216.5,26.3 L231.8,24.9 L247.4,23.4 L263.2,21.8 L279.2,19.9 L295.4,18.4 L311.7,17.7 L328.0,16.6 L344.1,15.3 L360.1,13.8 L375.8,12.1 L391.2,11.0 L406.4,10.4 L421.3,9.9" stroke="#d2c3a6" stroke-width="2.3" opacity="0.50"/>
<path d="M238.0,-79.8 L256.3,-82.6 L274.8,-84.5 L293.4,-85.1 L312.2,-85.6 L331.1,-86.0 L350.2,-86.4 L369.4,-86.9 L388.8,-86.7 L408.4,-86.0 L428.0,-85.5 L447.6,-85.1" stroke="#d2c3a6" stroke-width="2.1" opacity="0.50"/>
<path d="M136.3,-32.6 L154.8,-37.5 L173.2,-42.7 L191.6,-47.7 L210.1,-51.2 L228.4,-54.8 L246.4,-58.4 L264.2,-61.9 L281.8,-64.7 L299.4,-66.0 L316.9,-67.2 L334.4,-68.1 L351.9,-68.8 L369.5,-69.2 L387.2,-68.8 L405.3,-67.6 L423.5,-66.4 L442.0,-65.3 L460.5,-61.9 L479.2,-58.3 L498.0,-54.9 L516.9,-51.8 L534.5,-44.7 L551.8,-37.2 L568.9,-30.0 L585.9,-22.8 L602.3,-15.4 L616.4,-4.6 L630.3,6.2 L643.9,17.1 L657.4,28.3 L669.6,40.9 L681.7,53.9 L693.8,67.1 L706.1,80.6 L717.4,95.1" stroke="#5e4d3a" stroke-width="4.4" opacity="0.40"/>
<path d="M686.8,192.1 L693.4,205.7 L698.5,220.0 L703.5,234.2 L708.2,248.5 L711.8,263.1 L715.3,277.7 L718.7,292.3 L722.1,306.9 L725.0,321.7 L727.8,336.6 L730.5,351.5 L733.2,366.4 L736.0,381.4" stroke="#5e4d3a" stroke-width="2.6" opacity="0.40"/>
<path d="M434.0,12.5 L448.4,14.9 L462.8,17.7 L477.4,20.7 L492.1,23.9 L505.9,30.7 L519.8,38.0 L533.9,45.3 L548.2,52.5 L562.5,59.8 L575.0,69.7 L587.6,79.4 L600.2,88.8 L612.7,98.1 L624.0,108.3 L635.1,118.4 L646.0,128.5 L656.6,138.6 L666.1,149.5 L674.0,161.8 L681.7,174.3 L689.4,186.9 L695.1,200.8 L699.4,215.6 L703.8,230.6 L708.1,245.9 L711.5,261.5 L715.1,277.2 L718.9,292.7 L722.9,308.2 L726.7,323.6 L730.3,338.9 L734.0,353.9 L737.7,368.6 L741.2,383.2" stroke="#c4b295" stroke-width="2.4" opacity="0.55"/>
<path d="M278.3,62.9 L290.8,60.9 L303.5,59.8 L316.4,59.8 L329.5,60.0 L343.0,60.3 L356.7,60.6 L370.7,60.8 L385.0,61.4 L399.5,62.3 L414.1,62.8 L428.7,63.1" stroke="#d2c3a6" stroke-width="2.3" opacity="0.50"/>
<path d="M620.4,105.1 L630.0,116.0 L639.7,127.3 L649.6,138.8 L658.8,151.4 L666.9,165.2 L675.4,179.1 L684.2,192.9 L691.4,207.5 L697.2,222.5 L703.3,237.2 L709.1,251.7 L713.7,266.2" stroke="#72604a" stroke-width="3.0" opacity="0.50"/>
<path d="M-66.6,229.6 L-66.4,210.5 L-63.6,192.1 L-60.6,173.9 L-54.1,156.9 L-47.1,140.0 L-39.7,123.3 L-31.0,106.8 L-20.9,90.9 L-10.5,74.6 L0.0,58.1 L11.7,41.9 L23.4,25.5 L34.9,8.7 L47.7,-7.0 L62.3,-21.1 L76.6,-35.3 L90.6,-49.4 L107.1,-58.2 L124.9,-64.0 L142.6,-69.5 L160.1,-74.7 L177.8,-79.2 L195.9,-81.6 L214.2,-83.8 L232.8,-85.8 L251.6,-87.7 L270.9,-88.8 L290.6,-88.7" stroke="#5e4d3a" stroke-width="2.3" opacity="0.40"/>
<path d="M274.0,47.1 L287.0,45.1 L300.2,43.9 L313.6,43.9 L327.3,44.2 L341.3,44.5 L355.6,44.9 L370.2,45.1 L385.1,45.8 L400.2,46.7 L415.5,47.3 L430.8,47.5 L445.9,49.3 L460.8,51.0 L475.5,52.5" stroke="#b8a585" stroke-width="4.8" opacity="0.60"/>
<path d="M510.9,-35.8 L526.2,-28.7 L541.4,-20.9 L556.7,-12.9 L572.2,-4.8 L587.6,3.8 L601.2,15.5 L615.0,27.3 L629.0,38.9 L643.1,50.4 L656.2,62.9 L669.3,75.3 L682.4,87.5 L695.3,99.4 L707.0,112.2 L716.9,126.1 L726.6,140.1 L736.1,154.0 L743.1,169.1 L748.3,185.2 L753.3,201.5 L758.0,218.0 L761.3,235.2 L764.7,252.5 L768.3,270.1 L772.0,287.7" stroke="#8a765c" stroke-width="3.3" opacity="0.50"/>
<path d="M529.6,56.2 L541.7,62.7 L553.7,69.8 L564.2,79.9 L575.0,90.2 L586.1,100.6 L597.6,111.0 L608.4,122.4 L619.5,133.7 L630.8,144.7 L642.3,155.4 L652.9,166.5 L662.1,178.4 L671.1,190.0 L679.9,201.4 L686.5,213.5 L691.3,226.2 L695.8,239.0 L699.7,251.9 L702.2,265.4 L704.6,279.2" stroke="#ad9a7b" stroke-width="1.6" opacity="0.60"/>
<path d="M305.3,66.1 L320.1,65.3 L334.8,64.1 L349.3,62.6 L363.5,61.0 L377.4,59.2 L391.0,57.8 L404.2,57.1 L417.1,56.4 L429.9,56.1 L442.3,57.7 L454.6,60.0 L467.0,62.6 L479.5,65.5 L491.3,71.8 L503.3,78.7 L515.5,85.7 L528.2,92.7 L540.9,99.8 L552.3,109.3 L564.0,118.4 L575.7,127.2 L587.4,135.7 L598.1,144.8 L608.6,153.6 L618.8,162.3" stroke="#72604a" stroke-width="3.2" opacity="0.50"/>
<path d="M643.1,-17.1 L658.5,-4.8 L673.9,7.3 L688.0,20.7 L701.9,34.1 L715.7,47.5 L729.5,60.9 L741.8,75.3 L752.3,91.2 L762.7,107.3 L773.0,123.4 L780.9,140.8 L786.8,159.3" stroke="#72604a" stroke-width="4.4" opacity="0.50"/>
<path d="M74.0,106.5 L83.2,93.1 L92.4,79.5 L102.8,66.9 L114.9,55.6 L126.7,44.3 L138.5,33.0 L152.5,26.1 L167.7,21.5 L182.8,17.1 L197.8,12.8 L212.9,8.9 L228.3,6.6 L243.8,4.4 L259.4,2.3 L275.1,0.3 L290.9,-1.0 L307.0,-1.4 L323.3,-1.8 L339.6,-2.3 L356.0,-2.9 L372.5,-3.7 L388.9,-3.9 L405.4,-3.8 L421.7,-3.8 L438.0,-3.9" stroke="#b8a585" stroke-width="2.7" opacity="0.60"/>
<path d="M483.4,-72.4 L502.3,-69.4 L521.1,-66.5 L538.5,-59.2 L555.6,-51.5 L572.7,-43.7 L589.6,-36.0 L606.2,-27.8 L620.6,-16.2 L634.9,-4.5 L649.1,7.3 L663.3,19.2 L676.4,32.6 L689.4,46.0 L702.5,59.6 L715.6,73.2 L727.7,87.8 L738.1,103.8 L748.6,119.7 L759.2,135.7 L767.5,152.6 L773.9,170.5 L780.2,188.2 L786.3,205.9 L790.9,224.0 L795.4,242.0 L799.8,260.0 L804.1,277.9 L807.8,296.0 L811.2,314.2 L814.5,332.5 L817.8,350.8" stroke="#8a765c" stroke-width="5.0" opacity="0.50"/>
<path d="M-76.3,225.1 L-76.1,205.6 L-73.3,186.8 L-70.3,168.2 L-63.7,150.9 L-56.5,133.8 L-48.9,116.6 L-40.0,99.9 L-29.6,83.6 L-19.0,67.1 L-8.2,50.2 L3.8,33.7 L15.7,16.9 L27.5,-0.3 L40.7,-16.4 L55.6,-30.8 L70.2,-45.3 L84.4,-59.8 L101.3,-68.9 L119.5,-74.8 L137.5,-80.5 L155.4,-85.8 L173.3,-90.4 L191.8,-92.8 L210.5,-95.0 L229.4,-97.0 L248.7,-98.9 L268.4,-100.0 L288.6,-99.9 L309.0,-100.0 L329.7,-100.3 L350.5,-101.0 L371.4,-102.0 L392.2,-102.6 L412.9,-102.9 L433.3,-103.5" stroke="#5e4d3a" stroke-width="4.1" opacity="0.40"/>
<path d="M28.9,287.4 L28.5,272.4 L28.6,257.7 L30.8,243.5 L33.3,229.5 L38.6,216.4 L44.4,203.4 L50.5,190.3 L57.6,177.4 L65.9,164.7 L74.3,151.8 L82.7,138.5 L92.0,125.6 L101.1,112.3 L110.1,98.9" stroke="#d2c3a6" stroke-width="2.8" opacity="0.50"/>
<path d="M338.7,-24.9 L354.8,-25.6 L371.0,-26.2 L387.2,-26.0 L403.7,-25.1 L420.3,-24.2 L437.0,-23.2 L453.8,-20.2 L470.7,-17.0 L487.7,-13.9 L504.8,-10.9 L520.7,-4.3 L536.4,2.7 L552.1,9.5 L567.6,16.2 L582.7,23.2 L595.7,33.1 L608.5,43.1 L621.1,53.2" stroke="#ad9a7b" stroke-width="1.7" opacity="0.60"/>
<path d="M198.3,48.1 L211.3,44.4 L224.5,41.4 L238.2,39.9 L252.2,38.7 L266.5,37.6 L281.1,36.6 L296.1,36.0 L311.6,36.2 L327.3,36.1 L343.1,35.8 L359.0,35.0 L374.8,33.9 L390.5,33.0 L406.0,32.4 L421.1,31.6 L435.9,30.7 L450.1,31.7" stroke="#ad9a7b" stroke-width="4.9" opacity="0.60"/>
<path d="M15.1,12.6 L25.3,-3.8 L37.1,-18.6 L51.2,-31.5 L65.3,-44.3 L79.7,-57.1 L97.1,-64.5 L116.3,-69.1 L135.7,-73.7 L155.2,-78.5 L174.9,-83.1 L194.9,-86.1 L215.0,-89.3 L234.9,-92.6 L254.7,-96.1 L274.5,-98.9 L294.2,-100.5 L313.7,-102.1 L333.0,-103.6 L352.2,-105.0 L371.3,-106.2 L390.4,-106.6 L409.4,-106.1 L428.6,-105.4 L447.8,-104.6 L466.9,-101.2 L486.2,-97.3" stroke="#ad9a7b" stroke-width="2.3" opacity="0.60"/>
<path d="M146.3,72.8 L156.1,62.9 L168.2,57.4 L181.7,54.2 L195.4,51.2 L209.4,48.4 L223.7,45.8 L238.6,44.5 L253.7,43.0 L269.1,41.3 L284.6,39.4 L300.2,37.7 L315.8,36.7 L331.3,35.4 L346.6,33.9 L361.6,32.2 L376.4,30.5 L390.9,29.3 L405.0,28.7 L419.0,28.4" stroke="#ad9a7b" stroke-width="3.3" opacity="0.60"/>
<path d="M504.3,39.8 L516.5,46.3 L528.8,53.2 L541.4,60.3 L554.0,68.0 L565.2,78.6 L576.7,89.1 L588.6,99.6 L600.8,109.9 L612.4,121.0 L624.0,131.8 L635.6,142.3 L647.2,152.4 L657.7,163.0 L666.6,174.4 L675.2,185.7 L683.4,196.9 L689.4,209.0 L693.6,222.0 L697.5,235.2 L701.0,248.8 L703.2,263.1 L705.5,277.7 L707.8,292.6 L710.4,307.9 L712.8,323.4" stroke="#ad9a7b" stroke-width="4.4" opacity="0.60"/>
<path d="M42.2,368.6 L42.5,354.2 L42.9,339.8 L43.3,325.6 L43.8,311.3 L44.3,297.1 L44.9,282.9 L45.9,268.8 L48.9,254.8 L52.0,240.8 L57.5,227.4 L63.2,214.0 L68.9,200.5 L75.3,187.4 L82.6,174.6 L89.7,161.7 L96.8,148.9 L104.7,136.5 L112.5,124.2 L120.3,112.0 L129.2,100.8 L139.5,91.0 L149.9,81.2 L160.3,71.5 L172.9,65.8 L186.8,62.2 L200.7,58.7 L214.7,55.2" stroke="#ad9a7b" stroke-width="2.6" opacity="0.60"/>
<path d="M268.2,32.8 L283.9,30.4 L299.5,28.3 L315.1,27.0 L330.6,25.5 L345.8,23.9 L360.7,22.3 L375.4,20.8 L389.8,20.0 L404.2,19.8 L418.4,19.8 L432.5,20.2 L446.6,22.6 L460.7,25.6 L475.0,28.7 L489.5,32.0 L503.2,38.7 L516.9,46.0 L530.9,53.2 L545.1,60.2 L559.3,67.3 L571.7,76.9 L584.2,86.3 L596.6,95.4 L608.8,104.3 L619.9,114.2 L630.6,123.9 L641.2,133.7" stroke="#b8a585" stroke-width="3.8" opacity="0.60"/>
<path d="M335.4,-59.5 L353.2,-60.3 L371.0,-61.1 L388.9,-61.2 L406.8,-60.6 L424.8,-60.0 L442.9,-59.3 L460.8,-56.4 L478.8,-53.3 L496.8,-50.1 L514.9,-47.1 L531.6,-40.0 L548.2,-32.3 L564.7,-24.7 L581.2,-17.2 L597.4,-9.3 L611.4,1.9 L625.3,13.1 L639.1,24.3 L652.9,35.5 L665.5,48.1 L678.0,60.9 L690.5,73.7 L703.1,86.6 L714.5,100.5 L724.3,115.8 L734.2,131.1 L744.2,146.5 L751.9,162.9 L757.9,180.2 L764.0,197.4 L769.8,214.7 L774.2,232.3 L778.6,249.7 L783.0,267.2 L787.3,284.5 L791.1,302.0 L794.5,319.4" stroke="#ad9a7b" stroke-width="4.0" opacity="0.60"/>
<path d="M471.7,-15.5 L488.4,-12.8 L505.1,-10.2 L520.5,-3.8 L535.7,3.1 L550.8,9.9 L565.9,16.8 L580.6,24.0 L593.3,34.4 L606.0,44.8 L618.6,55.2 L631.2,65.8 L642.8,77.6 L654.3,89.5 L665.9,101.6 L677.6,113.6 L688.3,126.5 L697.6,140.7 L706.9,154.9" stroke="#b8a585" stroke-width="1.7" opacity="0.60"/>
<path d="M221.4,-67.2 L240.2,-70.1 L259.1,-73.1 L278.0,-75.4 L296.9,-76.6 L315.8,-77.9 L334.6,-79.1 L353.2,-80.3 L371.8,-81.5 L390.4,-81.9 L408.9,-81.6 L427.4,-81.3 L445.9,-80.8 L464.3,-77.9 L482.6,-74.5 L501.1,-71.2 L519.6,-67.8 L536.9,-60.0 L554.0,-51.7 L571.2,-43.4 L588.5,-35.2 L605.5,-26.7 L620.4,-14.9 L635.2,-3.1 L650.0,8.6 L664.7,20.3 L678.1,33.2 L691.4,46.2 L704.6,59.2 L717.7,72.3 L729.6,86.4 L739.6,102.0 L749.7,117.7 L759.7,133.5 L767.5,150.6 L773.3,168.6 L779.3,186.7 L785.1,204.9" stroke="#5e4d3a" stroke-width="4.0" opacity="0.40"/>
<path d="M255.4,-13.8 L272.5,-16.4 L289.7,-18.5 L306.9,-19.8 L323.9,-21.2 L340.7,-22.6 L357.4,-24.0 L373.9,-25.4 L390.2,-26.1 L406.4,-26.1 L422.6,-25.9 L438.7,-25.6 L454.7,-23.0 L470.7,-19.9 L486.8,-16.6 L503.1,-13.3 L518.4,-6.1 L533.6,1.7 L549.1,9.4 L564.6,16.9 L580.1,24.7 L593.6,35.4 L607.2,45.9 L620.7,56.2 L634.1,66.4 L646.2,77.6 L658.2,88.9 L670.0,100.1 L681.6,111.4 L691.9,123.6 L700.6,137.3 L709.3,151.1 L717.9,165.1 L724.4,180.3 L729.3,196.5 L734.3,212.8 L739.3,229.3 L743.1,246.2 L747.1,263.0" stroke="#72604a" stroke-width="4.4" opacity="0.50"/>
<path d="M427.1,-74.4 L445.9,-74.0 L464.5,-71.4 L483.0,-68.5 L501.4,-65.6 L519.9,-62.7 L536.8,-55.5 L553.6,-47.7 L570.3,-39.9 L586.9,-32.0 L603.3,-23.7 L617.5,-11.9 L631.7,-0.1 L646.0,11.8 L660.3,23.8 L673.4,37.1 L686.6,50.4 L699.8,63.8 L713.1,77.1 L725.2,91.4 L735.6,107.0 L746.1,122.6 L756.5,138.1 L764.6,154.7 L770.7,172.2 L776.8,189.7 L782.6,207.2 L786.9,225.1 L791.1,243.0 L795.3,261.0 L799.4,279.0 L803.0,297.2 L806.3,315.4 L809.7,333.8 L813.1,352.2 L816.5,370.6" stroke="#5e4d3a" stroke-width="3.9" opacity="0.40"/>
<path d="M-29.6,208.3 L-27.2,190.9 L-21.7,174.8 L-15.7,158.9 L-9.5,143.3 L-2.0,128.3 L6.8,113.8 L16.0,99.2 L25.5,84.4 L36.3,70.1 L47.2,55.4 L58.2,40.5 L70.5,26.4 L84.6,13.6 L98.5,0.6 L112.0,-12.6 L128.0,-21.0" stroke="#b8a585" stroke-width="3.7" opacity="0.60"/>
<path d="M614.9,-47.2 L630.0,-34.7 L645.0,-22.3 L660.1,-9.8 L675.2,2.7 L689.1,16.6 L703.0,30.6 L716.9,44.5 L730.8,58.5 L743.5,73.4 L754.4,89.8 L765.3,106.2 L776.2,122.5 L784.6,140.0 L791.0,158.5 L797.3,176.9 L803.4,195.4 L807.9,214.4 L812.3,233.3 L816.8,252.3 L821.2,271.3 L825.0,290.5" stroke="#c4b295" stroke-width="3.7" opacity="0.55"/>
<path d="M10.6,135.6 L19.1,120.3 L27.7,105.1 L36.2,89.8 L45.8,75.2 L55.5,60.6 L65.1,46.1 L76.1,32.6 L89.0,20.8 L101.9,9.0 L114.8,-2.9 L130.3,-10.0 L147.2,-14.6 L164.1,-19.2 L181.0,-23.8 L198.0,-28.0 L215.3,-30.7 L232.5,-33.4 L249.8,-36.1 L267.1,-38.8 L284.4,-40.7 L301.9,-41.6 L319.3,-42.5 L336.8,-43.4 L354.2,-44.2 L371.7,-45.1 L389.2,-45.3 L406.7,-44.9 L424.2,-44.5 L441.7,-44.1 L459.0,-41.6" stroke="#c4b295" stroke-width="3.1" opacity="0.55"/>
<path d="M262.0,62.6 L276.8,60.3 L291.4,57.8 L306.0,55.5 L320.5,54.0 L334.7,52.4 L348.6,50.7 L362.2,49.1 L375.6,47.7 L388.8,47.0 L401.8,47.0 L414.9,47.3 L428.0,47.9 L441.0,50.4 L454.2,53.5 L467.7,56.7 L481.4,59.9 L494.4,66.4 L507.6,73.2 L520.9,79.9 L534.4,86.3 L547.8,92.7 L559.6,101.4 L571.3,109.8 L582.8,118.0 L594.1,126.0 L604.2,135.0 L614.0,143.9 L623.5,152.9 L632.8,162.1 L641.0,172.2 L647.8,183.6 L654.6,195.3 L661.4,207.3 L666.5,220.4 L670.5,234.4 L674.7,248.6 L678.9,262.8 L682.4,277.4" stroke="#c4b295" stroke-width="3.8" opacity="0.55"/>
<path d="M234.6,62.3 L247.8,60.3 L261.1,58.4 L274.5,56.7 L288.0,55.1 L301.7,54.1 L315.7,54.0 L329.9,53.8 L344.2,53.6 L358.6,53.2 L373.1,52.7 L387.7,52.5 L402.2,52.6 L416.7,52.6 L431.0,52.4 L445.0,53.9 L458.8,55.6 L472.5,57.3 L485.9,59.1 L498.3,64.2 L510.3,70.0 L522.4,75.9 L534.4,81.9 L546.3,88.5 L556.7,97.8 L567.2,107.1 L577.9,116.6 L588.8,126.0 L598.9,136.4 L609.2,146.7 L619.6,156.9 L630.0,166.9 L639.6,177.5" stroke="#c4b295" stroke-width="4.5" opacity="0.55"/>
<path d="M50.5,202.4 L55.6,188.6 L61.4,175.3 L68.3,162.7 L75.4,150.1 L82.6,137.6 L90.9,125.7 L99.4,113.8 L108.1,101.7 L118.1,90.5 L129.7,80.5 L141.4,70.4 L153.1,60.0 L166.9,53.5 L181.8,49.0 L196.6,44.5 L211.1,39.9 L225.5,35.7 L240.1,32.8 L254.4,30.1 L268.7,27.6 L282.9,25.2 L297.2,23.6 L311.6,23.1 L326.2,22.8 L340.9,22.7 L355.8,22.5 L370.8,22.4 L386.1,22.8 L401.5,23.6 L417.1,24.3 L432.8,24.7 L448.3,26.9 L463.7,29.2" stroke="#5e4d3a" stroke-width="4.9" opacity="0.40"/>
<path d="M-8.0,326.7 L-7.3,310.1 L-6.7,293.5 L-6.0,276.8 L-5.4,260.2 L-4.3,243.7 L-1.0,227.4 L2.3,211.1 L8.3,195.7 L14.7,180.3 L21.0,164.8 L28.2,149.8 L36.4,135.3 L44.6,120.7 L52.8,106.2 L62.0,92.2 L71.2,78.2 L80.3,64.3 L90.8,51.4 L103.0,40.1 L115.2,28.8 L127.4,17.5" stroke="#5e4d3a" stroke-width="2.5" opacity="0.40"/>
<path d="M387.3,51.5 L400.4,51.8 L413.6,52.4 L427.0,53.2 L440.3,55.9 L453.8,58.8 L467.5,61.8 L481.4,64.8 L494.5,70.8 L507.6,77.2 L520.8,83.3 L534.1,89.2 L547.1,95.2 L558.4,103.6 L569.5,111.8 L580.5,119.9 L591.3,127.9 L600.9,137.0 L610.4,146.2 L619.6,155.5 L628.7,164.9 L636.9,175.4 L643.9,187.0 L650.8,198.9 L657.9,211.0 L663.4,224.0 L667.8,237.9 L672.3,251.7 L676.8,265.5 L680.5,279.5" stroke="#72604a" stroke-width="2.0" opacity="0.50"/>
<path d="M433.5,17.8 L448.0,20.1 L462.5,22.8 L477.1,25.6 L491.8,28.5 L505.5,34.9 L519.3,41.9 L533.1,48.8 L547.1,55.7 L561.0,62.7 L573.1,72.5 L585.3,82.1 L597.5,91.5 L609.6,100.8 L620.7,111.1 L631.6,121.4 L642.3,131.7 L652.9,141.9 L662.4,153.0 L670.4,165.4 L678.3,177.8 L686.2,190.4 L692.1,204.1 L696.6,218.6 L701.2,233.3 L705.6,248.1 L709.0,263.3 L712.6,278.5 L716.2,293.7 L720.0,308.8 L723.5,323.9 L726.8,338.9 L730.2,353.7" stroke="#72604a" stroke-width="2.0" opacity="0.50"/>
<path d="M46.0,125.7 L55.2,111.1 L65.4,96.7 L75.3,82.1 L85.0,67.3 L95.7,53.4 L107.8,41.1 L119.6,28.8 L131.1,16.7 L144.8,9.3 L159.7,4.6 L174.6,0.3 L189.5,-3.7 L204.7,-7.1 L220.4,-8.7 L236.4,-10.2 L252.7,-11.6 L269.4,-13.0 L286.4,-13.9 L303.8,-14.0 L321.4,-14.3 L339.1,-15.0 L356.8,-16.0 L374.4,-17.4 L391.8,-18.4" stroke="#c4b295" stroke-width="3.9" opacity="0.55"/>
<path d="M460.4,-49.9 L478.0,-47.0 L495.6,-44.1 L513.2,-41.2 L529.5,-34.2 L545.6,-26.6 L561.7,-19.0 L577.8,-11.4 L593.6,-3.4 L607.3,7.9 L621.1,19.1 L634.8,30.4 L648.6,41.7 L661.2,54.2 L673.7,66.9 L686.3,79.5 L698.9,92.1 L710.4,105.7 L720.2,120.6" stroke="#8a765c" stroke-width="3.1" opacity="0.50"/>
<path d="M279.6,-66.9 L297.2,-67.8 L314.9,-68.4 L332.7,-68.8 L350.7,-69.1 L368.9,-69.3 L387.4,-68.8 L406.0,-67.8 L424.9,-66.9 L443.8,-66.1 L462.7,-63.2 L481.5,-60.2 L500.3,-57.4 L519.1,-54.8 L536.3,-48.0 L553.2,-40.8 L569.8,-33.7 L586.3,-26.5 L602.2,-18.8 L615.9,-7.7 L629.5,3.7 L643.0,15.2 L656.5,27.0 L669.0,40.2 L681.4,53.7 L694.1,67.4 L706.9,81.1 L718.8,95.7 L729.2,111.7 L739.8,127.6 L750.5,143.4 L759.0,160.1 L765.7,177.4 L772.3,194.6 L778.5,211.7 L783.2,229.0 L787.7,246.2 L792.0,263.4" stroke="#c4b295" stroke-width="4.8" opacity="0.55"/>
<path d="M61.9,348.0 L63.2,334.3 L64.5,320.3 L65.6,306.1 L66.5,291.8 L67.6,277.4 L70.2,263.3 L72.6,249.2 L77.1,235.9 L81.6,222.8 L86.1,209.9 L91.1,197.6 L97.1,185.9 L103.2,174.4 L109.4,163.1 L116.6,152.4 L124.1,141.8 L131.8,131.1 L140.8,121.3 L151.4,112.5 L162.1,103.6 L172.9,94.5 L185.8,88.8 L199.6,84.9" stroke="#8a765c" stroke-width="5.0" opacity="0.50"/>
<path d="M29.5,186.8 L34.6,172.2 L40.5,158.2 L47.6,144.9 L54.9,131.9 L62.5,118.9 L71.4,106.6 L80.6,94.2 L90.0,81.6 L100.9,69.9 L113.6,59.4 L126.4,48.5 L139.1,37.4 L154.1,30.3 L170.2,25.3 L186.0,20.2 L201.5,15.0 L216.7,10.1 L232.0,6.8 L247.0,3.7 L261.9,0.9 L276.7,-1.7 L291.6,-3.3 L306.6,-3.7 L321.9,-3.8 L337.3,-3.7 L353.1,-3.5 L369.2,-3.3 L385.5,-2.5 L402.2,-1.4 L419.0,-0.6 L436.0,0.0 L452.8,2.3 L469.5,4.6 L486.1,6.7 L502.5,8.5 L517.5,13.9 L531.9,19.7 L546.1,25.6" stroke="#c4b295" stroke-width="2.0" opacity="0.55"/>
<path d="M99.7,32.9 L111.3,21.6 L122.9,10.5 L137.1,4.3 L153.0,0.6 L169.0,-2.9 L185.4,-6.5 L202.0,-9.7 L219.2,-11.6 L236.6,-13.7 L254.1,-16.0 L271.7,-18.5 L289.2,-20.7 L306.8,-22.1 L324.1,-23.6 L341.3,-25.3 L358.2,-27.0 L374.8,-28.7 L391.2,-29.6 L407.4,-29.9 L423.4,-29.9 L439.4,-29.7 L455.2,-27.1 L471.0,-23.9 L487.0,-20.5 L503.2,-17.0 L518.4,-9.5 L533.7,-1.4 L549.3,6.7 L565.1,14.6 L580.8,22.6 L594.7,33.5 L608.6,44.2 L622.5,54.6 L636.3,64.7 L648.8,75.9 L661.0,87.0 L672.9,98.0 L684.6,109.1 L695.0,121.1" stroke="#d2c3a6" stroke-width="3.7" opacity="0.50"/>
<path d="M464.3,17.6 L478.7,20.2 L493.2,23.0 L506.8,29.5 L520.3,36.6 L534.0,43.8 L547.9,51.0 L561.7,58.5 L574.0,68.7 L586.4,78.7 L598.8,88.6 L611.3,98.3 L622.8,108.9" stroke="#8a765c" stroke-width="2.9" opacity="0.50"/>
<path d="M242.9,48.2 L257.7,45.9 L272.5,43.5 L287.2,41.0 L301.8,39.0 L316.5,37.9 L331.0,36.7 L345.3,35.6 L359.6,34.5 L373.8,33.5 L387.9,33.2 L402.0,33.5 L416.2,33.9 L430.3,34.5 L444.5,36.9 L458.7,39.7 L473.0,42.6 L487.4,45.4 L501.0,51.5 L514.4,58.1 L528.0,64.5 L541.6,70.8 L554.9,77.3 L566.6,86.3 L578.2,95.2 L589.6,104.0 L601.0,112.8 L611.3,122.6 L621.4,132.5 L631.4,142.5 L641.3,152.5 L650.3,163.5 L657.9,175.6 L665.5,187.9 L673.1,200.3 L679.0,213.7 L683.6,227.9 L688.2,242.1 L692.8,256.4 L696.4,270.9" stroke="#8a765c" stroke-width="2.6" opacity="0.50"/>
<path d="M150.5,81.0 L160.7,71.3 L173.1,65.6 L186.7,62.1 L200.4,58.7 L214.2,55.4 L228.3,52.3 L242.7,50.6 L257.2,48.7 L271.9,46.7 L286.6,44.7 L301.3,43.0 L316.2,42.2 L331.0,41.2 L345.6,40.1 L360.2,39.0 L374.7,37.9 L389.0,37.2 L403.2,37.1 L417.3,37.1 L431.3,37.2" stroke="#d2c3a6" stroke-width="2.7" opacity="0.50"/>
<path d="M567.0,49.7 L578.8,59.6 L590.7,69.6 L602.5,79.6 L614.5,89.7 L625.5,100.9 L636.6,112.2 L647.7,123.5 L658.9,134.7 L669.1,146.6 L677.9,159.7 L686.7,172.8 L695.6,185.7 L702.4,199.6 L707.5,214.1 L712.7,228.7 L717.5,243.2 L721.0,258.2 L724.5,273.1 L727.9,288.2" stroke="#b8a585" stroke-width="4.0" opacity="0.60"/>
<path d="M-16.6,88.7 L-7.5,72.0 L1.7,55.3 L12.0,39.5 L22.4,23.7 L33.0,7.9 L45.1,-6.5 L59.3,-19.3 L73.7,-32.1 L88.1,-44.9 L105.4,-52.7 L124.2,-57.7 L143.1,-62.8 L161.9,-68.0 L180.7,-72.9 L199.8,-76.1 L218.9,-79.4 L237.8,-82.6 L256.6,-85.8" stroke="#8a765c" stroke-width="2.9" opacity="0.50"/>
<path d="M484.7,-76.5 L504.5,-73.5 L524.2,-70.8 L542.3,-64.0 L560.0,-56.7 L577.4,-49.5 L594.5,-42.4 L611.1,-34.8 L625.2,-23.5 L639.1,-12.0 L652.8,-0.3 L666.5,11.8" stroke="#d2c3a6" stroke-width="2.5" opacity="0.50"/>
<path d="M58.5,319.2 L59.9,305.3 L61.2,291.1 L62.7,276.7 L65.8,262.5 L68.7,248.1 L73.6,234.4 L78.6,220.8 L83.3,207.4 L88.6,194.5 L94.6,182.1 L100.6,170.1 L106.6,158.2" stroke="#ad9a7b" stroke-width="3.7" opacity="0.60"/>
<path d="M187.1,61.8 L201.2,58.0 L215.2,54.2 L229.2,50.7 L243.6,48.5 L257.9,46.2 L272.2,44.0 L286.5,41.8 L300.9,40.1 L315.3,39.4 L329.8,38.7 L344.2,37.9 L358.7,37.2 L373.1,36.5 L387.6,36.3 L402.1,36.7 L416.5,37.0 L431.0,37.3" stroke="#b8a585" stroke-width="4.2" opacity="0.60"/>
<path d="M644.7,11.3 L657.9,23.2 L670.0,36.7 L682.3,50.5 L694.8,64.6 L707.6,78.8 L719.6,93.9 L730.2,110.4 L741.1,126.7 L752.2,142.8 L761.1,159.7 L768.2,177.2 L775.3,194.4 L781.9,211.3 L786.8,228.4 L791.5,245.4 L795.8,262.3 L799.8,279.2 L803.0,296.3 L805.7,313.7 L808.2,331.4 L810.6,349.4 L813.1,367.7" stroke="#d2c3a6" stroke-width="3.7" opacity="0.50"/>
<path d="M274.5,-88.9 L293.9,-89.9 L313.3,-90.9 L332.7,-92.0 L352.0,-93.0 L371.3,-94.1 L390.6,-94.5 L409.8,-94.2 L429.1,-93.9 L448.3,-93.6 L467.2,-90.8 L486.2,-87.6 L505.1,-84.4 L524.0,-81.2 L541.6,-73.4 L559.0,-65.0 L576.4,-56.6 L593.9,-48.3 L611.1,-39.5 L626.2,-27.2 L641.2,-14.9 L656.3,-2.6 L671.3,9.6 L685.1,23.1 L698.9,36.7 L712.6,50.2 L726.2,63.7 L738.7,78.3 L749.2,94.3 L759.8,110.3 L770.3,126.4 L778.4,143.6 L784.5,161.9 L790.6,180.2 L796.4,198.6 L800.8,217.5 L805.2,236.4 L809.7,255.3 L814.2,274.2 L818.1,293.2" stroke="#5e4d3a" stroke-width="1.8" opacity="0.40"/>
<path d="M140.1,-68.0 L159.2,-73.1 L178.3,-77.9 L197.7,-81.1 L217.0,-84.3 L236.3,-87.5 L255.4,-90.7 L274.6,-93.2 L293.9,-94.4 L313.0,-95.5 L332.2,-96.5 L351.3,-97.5 L370.4,-98.4 L389.6,-98.5 L408.9,-97.9 L428.2,-97.2 L447.6,-96.6 L466.9,-93.5 L486.2,-90.0 L505.6,-86.6 L525.0,-83.3 L543.0,-75.6 L560.8,-67.3" stroke="#b8a585" stroke-width="3.8" opacity="0.60"/>
<path d="M63.3,155.6 L70.1,142.4 L76.9,129.3 L84.7,117.0 L92.8,104.9 L101.1,92.8 L110.8,81.8 L122.4,72.2 L134.2,62.4 L146.1,52.4 L160.4,46.4" stroke="#8a765c" stroke-width="2.7" opacity="0.50"/>
<path d="M480.1,23.0 L496.4,25.4 L511.6,31.0 L526.3,36.8 L540.8,42.4 L555.0,47.9 L568.7,53.8 L580.2,62.5 L591.4,71.3 L602.4,80.5 L613.2,89.9 L623.1,100.8 L632.9,112.0 L642.9,123.6 L653.1,135.4 L662.6,148.2 L671.0,162.2 L679.8,176.2 L688.8,190.0 L696.2,204.6 L702.2,219.7 L708.3,234.5 L714.2,249.0 L718.8,263.5 L723.2,277.7 L727.3,291.7 L731.1,305.6 L734.1,319.6 L736.6,333.6 L738.8,347.9 L740.8,362.4 L742.7,377.3 L744.5,392.4" stroke="#ad9a7b" stroke-width="2.9" opacity="0.60"/>
<path d="M297.7,26.3 L313.2,25.5 L328.6,24.6 L343.9,23.6 L359.1,22.5 L374.3,21.3 L389.3,20.7 L404.2,20.7 L419.0,20.6 L433.7,20.7 L448.2,22.8 L462.6,25.3 L477.1,27.9 L491.6,30.6 L505.1,36.9 L518.6,43.7 L532.1,50.6 L545.8,57.4 L559.4,64.5 L571.4,74.3 L583.4,84.0 L595.5,93.6 L607.5,103.1 L618.6,113.5 L629.5,123.9" stroke="#c4b295" stroke-width="2.1" opacity="0.55"/>
<path d="M666.4,192.2 L675.4,204.2 L682.5,216.8 L687.9,230.0 L693.1,242.9 L697.8,255.8 L701.1,269.0 L704.1,282.3 L706.8,295.7 L709.4,309.4 L711.4,323.3 L713.2,337.7 L715.1,352.3 L717.0,367.1 L719.2,382.2 L721.7,397.4" stroke="#8a765c" stroke-width="3.4" opacity="0.50"/>
<path d="M502.6,-4.5 L517.5,2.0 L532.2,9.1 L546.9,16.2 L561.7,23.3 L576.3,30.8 L589.0,41.3 L601.7,51.8 L614.5,62.3 L627.3,72.7 L639.1,84.3 L650.8,95.9 L662.5,107.5 L674.2,119.0 L684.8,131.4 L693.9,145.0 L702.9,158.5 L711.9,172.1 L718.8,186.7 L724.0,202.2" stroke="#b8a585" stroke-width="3.4" opacity="0.60"/>
<path d="M418.1,21.2 L433.4,21.4 L448.4,23.6 L463.4,26.0 L478.3,28.3 L493.2,30.7 L507.0,36.5 L520.6,42.9 L534.1,49.3 L547.7,55.6 L561.0,62.4 L572.5,72.0 L584.1,81.6 L595.6,91.2 L607.2,100.8" stroke="#ad9a7b" stroke-width="2.3" opacity="0.60"/>
<path d="M41.5,219.5 L48.2,205.3 L54.8,190.9 L61.9,176.5 L69.8,162.5 L77.5,148.4 L84.8,134.2 L92.8,120.7 L100.6,107.3 L108.2,94.1 L116.8,82.2 L127.1,71.9 L137.4,61.9 L147.8,52.1 L160.6,46.7 L174.9,43.6 L189.5,40.5 L204.4,37.4 L219.6,34.6 L235.3,32.9 L251.1,31.0 L267.0,28.8 L283.0,26.3 L298.8,24.2 L314.7,22.8 L330.3,21.2 L345.6,19.6 L360.7,17.9" stroke="#5e4d3a" stroke-width="4.5" opacity="0.40"/>
<path d="M261.2,2.5 L276.2,0.2 L291.5,-1.3 L306.9,-1.7 L322.5,-1.9 L338.3,-2.0 L354.3,-2.1 L370.5,-2.2 L386.9,-1.9 L403.4,-1.2 L420.0,-0.7 L436.7,-0.4 L453.1,1.8 L469.4,4.0 L485.6,6.1 L501.6,8.0 L516.2,13.7 L530.5,19.8 L544.5,26.1 L558.4,32.5 L572.0,39.4 L583.7,49.4 L595.4,59.6 L607.1,70.0 L619.0,80.6 L630.0,92.4 L641.1,104.4 L652.5,116.4 L664.0,128.3 L674.7,141.0 L684.1,154.7 L693.5,168.2 L703.0,181.5" stroke="#ad9a7b" stroke-width="2.7" opacity="0.60"/>
<path d="M317.7,58.0 L332.8,57.1 L347.7,55.9 L362.4,54.5 L376.9,52.8 L391.1,51.5 L405.0,50.7 L418.5,49.9 L431.7,49.3 L444.6,50.7 L457.2,52.7 L469.9,55.0 L482.6,57.6 L494.4,63.8 L506.3,70.7 L518.5,77.7 L531.0,84.8 L543.7,92.1" stroke="#b8a585" stroke-width="3.9" opacity="0.60"/>
<path d="M9.9,173.5 L15.3,158.0 L21.7,143.2 L29.2,129.2 L37.0,115.3 L45.1,101.5 L54.4,88.4 L64.1,75.2 L74.0,61.9 L85.4,49.4 L98.7,38.3 L112.1,26.8 L125.5,15.1 L141.2,7.7 L158.1,2.5 L174.8,-2.9 L191.1,-8.3 L207.2,-13.3 L223.4,-16.7 L239.4,-19.9 L255.2,-22.9 L270.9,-25.6 L286.7,-27.3 L302.7,-27.7 L318.9,-27.9 L335.3,-27.9 L351.9,-27.8 L368.9,-27.7 L386.1,-27.0 L403.6,-25.9 L421.3,-25.0 L439.2,-24.4 L456.8,-22.0 L474.4,-19.5 L491.8,-17.3" stroke="#b8a585" stroke-width="2.8" opacity="0.60"/>
<path d="M43.6,75.6 L54.1,60.7 L64.5,45.6 L76.2,31.5 L89.6,18.9 L102.7,6.1 L115.6,-6.6 L130.9,-14.6 L147.4,-19.8 L163.7,-24.9 L179.9,-29.8 L196.2,-34.0 L212.8,-36.4 L229.5,-38.6 L246.4,-40.7 L263.5,-42.6 L280.9,-43.7 L298.7,-43.8 L316.8,-44.0 L335.0,-44.3 L353.3,-44.8 L371.8,-45.6 L390.2,-46.0" stroke="#d2c3a6" stroke-width="4.9" opacity="0.50"/>
<path d="M444.8,45.2 L459.6,47.4 L474.3,49.5 L488.9,51.4 L502.4,56.6 L515.5,62.1 L528.4,67.7 L541.1,73.2 L553.5,79.2 L564.1,87.9 L574.6,96.8 L585.1,105.9 L595.6,115.2 L605.3,125.7 L615.0,136.3 L624.9,147.1 L635.1,157.8 L644.4,169.3 L652.7,181.9 L661.0,194.3 L669.5,206.5 L676.2,219.5 L681.5,233.0" stroke="#d2c3a6" stroke-width="3.2" opacity="0.50"/>
<path d="M-17.7,236.3 L-14.5,219.4 L-11.4,202.6 L-5.3,186.7 L1.1,171.0 L7.6,155.3 L15.0,140.0 L23.5,125.2 L32.1,110.3 L40.8,95.4" stroke="#d2c3a6" stroke-width="3.3" opacity="0.50"/>
<path d="M31.6,154.7 L40.4,140.2 L49.1,125.5 L57.6,110.6 L67.0,96.3 L76.3,81.8 L85.3,67.4 L95.4,54.1 L107.1,42.4 L118.7,30.8 L130.2,19.4 L144.1,12.7 L159.4,8.6 L174.8,4.7 L190.3,0.9 L206.0,-2.5 L222.3,-4.3 L238.8,-6.1 L255.4,-8.1 L272.2,-10.1 L289.2,-11.7 L306.4,-12.4 L323.5,-13.4 L340.6,-14.5" stroke="#b8a585" stroke-width="2.0" opacity="0.60"/>
<path d="M-10.8,295.7 L-9.0,278.7 L-7.4,261.4 L-5.5,243.9 L-1.7,226.5 L1.9,208.9 L7.9,192.2 L13.9,175.6 L19.6,159.2 L25.9,143.5 L33.2,128.5 L40.3,113.8 L47.6,99.4 L56.0,86.0 L64.6,72.7 L73.5,59.7 L84.0,47.8 L96.6,37.4 L109.6,26.9 L122.7,16.2 L138.6,9.8 L155.9,5.5 L173.2,0.9 L190.4,-4.0 L207.5,-8.8 L224.6,-12.3 L241.5,-15.8 L258.0,-19.5 L274.3,-23.0 L290.3,-25.7 L306.2,-27.1" stroke="#5e4d3a" stroke-width="4.0" opacity="0.40"/>
<path d="M165.1,-63.1 L182.5,-67.5 L200.2,-70.0 L218.2,-72.2 L236.3,-74.2 L254.8,-76.1 L273.6,-77.2 L292.8,-77.2 L312.3,-77.4 L332.0,-77.8 L351.8,-78.5 L371.6,-79.4 L391.5,-80.0 L411.1,-80.1 L430.6,-80.6 L449.9,-81.1 L468.6,-79.3 L487.0,-77.2 L505.1,-74.9 L523.0,-72.5 L539.3,-65.4 L555.4,-57.5 L571.5,-49.2 L587.7,-40.7 L603.7,-31.5 L617.9,-18.7 L632.3,-5.7 L647.0,7.2 L662.0,20.1 L676.0,34.1 L690.2,48.0 L704.5,61.7 L718.9,75.0 L732.0,89.0 L743.2,104.2 L754.2,119.2 L764.9,134.0 L772.9,149.9" stroke="#d2c3a6" stroke-width="1.6" opacity="0.50"/>
<path d="M-50.3,316.8 L-49.1,298.3 L-48.1,279.7 L-47.1,261.0 L-46.1,242.2 L-44.8,223.5 L-41.2,205.0 L-37.7,186.6 L-31.2,169.1 L-24.5,151.8 L-17.9,134.6 L-10.3,118.0 L-1.6,101.9 L7.1,86.0 L16.0,70.2 L26.0,55.1 L36.2,40.0" stroke="#ad9a7b" stroke-width="4.9" opacity="0.60"/>
<path d="M371.8,-45.6 L389.1,-45.8 L406.5,-45.4 L423.8,-44.9 L441.3,-44.4 L458.5,-41.7 L475.8,-38.7 L493.1,-35.7 L510.5,-32.7 L526.6,-25.7 L542.5,-18.1 L558.5,-10.6 L574.4,-3.2 L590.1,4.6 L603.7,15.6 L617.3,26.5 L630.9,37.4 L644.4,48.4 L656.7,60.6 L669.0,72.8 L681.2,85.1 L693.5,97.5 L704.6,110.8 L714.1,125.5 L723.6,140.2 L733.2,154.9" stroke="#d2c3a6" stroke-width="1.9" opacity="0.50"/>
<path d="M331.5,49.6 L344.7,49.1 L358.0,48.7 L371.5,48.5 L385.1,48.9 L398.9,49.9 L413.0,50.9 L427.2,51.9 L441.5,54.5 L456.0,57.2 L470.5,59.8 L485.0,62.1 L498.5,67.4 L511.7,73.0 L524.8,78.4 L537.7,83.7 L550.2,89.2 L560.9,97.4 L571.4,105.6 L581.6,114.0 L591.8,122.5 L601.0,132.3 L610.2,142.3 L619.4,152.5 L628.8,162.9 L637.4,174.2" stroke="#ad9a7b" stroke-width="2.3" opacity="0.60"/>
<path d="M748.9,204.4 L753.8,221.0 L757.4,238.0 L761.0,255.2 L764.8,272.5 L768.7,289.8 L772.2,307.3 L775.7,324.7 L779.3,342.1 L783.0,359.4" stroke="#8a765c" stroke-width="2.5" opacity="0.50"/>
<path d="M51.8,168.3 L59.4,154.7 L66.9,141.2 L74.5,127.7 L83.0,114.8 L91.5,101.8 L100.1,88.9 L109.9,77.0 L121.4,66.5 L132.8,56.0 L144.3,45.5 L158.1,39.2 L173.2,35.1 L188.3,31.0 L203.3,26.9 L218.4,23.1 L233.7,20.7 L249.1,18.2 L264.4,15.8 L279.7,13.4 L295.1,11.6 L310.6,10.9 L326.0,10.1 L341.5,9.3 L357.0,8.6 L372.5,7.9 L388.0,7.7 L403.6,8.1 L419.1,8.5 L434.7,8.8 L450.1,11.1 L465.5,13.7 L480.9,16.3 L496.3,18.8 L510.5,24.9 L524.6,31.5" stroke="#b8a585" stroke-width="3.4" opacity="0.60"/>
<path d="M442.0,60.9 L455.9,63.1 L469.8,65.2 L483.6,67.2 L496.3,72.3 L508.8,77.9 L521.2,83.4 L533.5,89.0 L545.5,94.9 L555.8,103.4 L566.1,112.0 L576.4,120.7 L586.7,129.5 L596.1,139.3 L605.6,149.3 L615.2,159.4 L624.9,169.5 L633.8,180.2 L641.6,192.0 L649.4,203.7 L657.3,215.3 L663.5,227.7 L668.2,240.6" stroke="#c4b295" stroke-width="1.6" opacity="0.55"/>
<path d="M388.8,-24.0 L405.3,-23.7 L421.8,-23.2 L438.4,-22.8 L454.8,-20.2 L471.2,-17.2 L487.7,-14.3 L504.2,-11.4 L519.6,-4.6 L534.8,2.6 L550.1,9.9 L565.3,17.0 L580.4,24.5 L593.4,34.9 L606.5,45.3 L619.5,55.7 L632.4,66.1 L644.2,77.7 L655.9,89.3 L667.6,101.0 L679.2,112.7 L689.7,125.3 L698.7,139.3 L707.8,153.3 L716.8,167.4 L723.8,182.5 L729.1,198.5 L734.5,214.5 L739.7,230.5 L743.7,246.9 L747.7,263.3" stroke="#ad9a7b" stroke-width="2.3" opacity="0.60"/>
<path d="M30.5,171.6 L37.4,157.0 L45.4,142.8 L53.3,128.7 L61.2,114.6 L70.1,101.0 L79.1,87.5 L88.0,74.0 L98.2,61.5 L110.2,50.5 L122.1,39.6 L134.1,28.6 L148.4,22.0 L164.1,17.7 L179.8,13.4 L195.4,9.2 L211.2,5.2 L227.2,2.8 L243.2,0.3 L259.2,-2.2 L275.3,-4.7" stroke="#5e4d3a" stroke-width="2.7" opacity="0.40"/>
<path d="M134.4,26.7 L148.0,20.2 L163.0,16.3 L178.1,12.5 L193.4,8.9 L208.9,5.7 L225.0,4.0 L241.3,2.2 L257.8,0.3 L274.4,-1.8 L291.1,-3.4 L308.0,-4.2 L324.9,-5.3 L341.7,-6.5 L358.3,-7.9 L374.7,-9.4 L391.0,-10.3 L407.0,-10.7 L422.8,-11.0 L438.5,-11.1 L453.8,-9.1 L469.1,-6.5 L484.4,-3.7 L499.7,-0.7 L514.0,6.2 L528.3,13.8 L542.8,21.4 L557.5,29.1 L572.2,37.1 L585.2,47.9 L598.3,58.5" stroke="#d2c3a6" stroke-width="2.5" opacity="0.50"/>
<path d="M110.6,-44.8 L128.8,-49.7 L147.0,-54.7 L165.2,-59.6 L183.5,-64.1 L202.1,-67.0 L220.8,-69.9 L239.5,-72.7 L258.1,-75.6 L276.9,-77.7 L295.7,-78.7 L314.6,-79.6" stroke="#b8a585" stroke-width="2.6" opacity="0.60"/>
<path d="M688.8,46.2 L701.4,59.5 L714.1,73.0 L725.6,87.7 L735.6,103.9 L745.7,120.2 L756.1,136.5 L764.3,153.9 L770.7,172.1 L777.3,190.2 L783.7,208.2 L788.7,226.4 L793.6,244.4 L798.5,262.2 L803.2,279.9 L807.3,297.6 L810.9,315.3" stroke="#d2c3a6" stroke-width="4.6" opacity="0.50"/>
<path d="M245.9,55.9 L260.2,53.7 L274.5,51.5 L288.8,49.1 L303.0,47.3 L317.3,46.3 L331.5,45.3 L345.6,44.4 L359.7,43.5 L373.7,42.6 L387.7,42.3 L401.6,42.6 L415.6,43.0 L429.6,43.4 L443.5,45.7 L457.5,48.3 L471.5,50.9 L485.6,53.5 L498.8,59.4 L511.8,65.7 L524.9,71.9 L538.0,78.0 L551.0,84.4 L562.2,93.3 L573.4,102.1 L584.6,110.9 L595.7,119.7 L605.7,129.4 L615.7,139.2" stroke="#b8a585" stroke-width="3.2" opacity="0.60"/>
<path d="M1.2,58.5 L12.8,42.2 L24.3,25.7 L35.6,8.9 L48.2,-6.8 L62.6,-20.9 L76.8,-34.9 L90.6,-48.9 L107.0,-57.6 L124.8,-63.2 L142.4,-68.5" stroke="#c4b295" stroke-width="2.2" opacity="0.55"/>
<path d="M616.0,-52.6 L630.2,-40.0 L644.5,-27.0 L658.9,-13.8 L673.6,-0.4 L687.4,14.4 L701.4,29.4 L715.7,44.4 L730.3,59.1 L743.8,74.6 L755.7,91.4 L767.6,107.8 L779.5,123.9 L788.7,141.0" stroke="#c4b295" stroke-width="2.1" opacity="0.55"/>
<path d="M76.2,86.0 L85.7,72.2 L96.5,59.4 L109.0,47.9 L121.3,36.3 L133.5,24.7 L147.9,17.5 L163.5,12.7 L179.0,7.9 L194.4,3.3 L209.7,-0.8 L225.3,-3.3 L241.0,-5.6 L256.7,-7.8 L272.6,-9.8 L288.7,-11.1 L305.0,-11.4 L321.5,-11.7 L338.1,-12.0 L354.9,-12.5 L371.8,-13.0 L388.7,-13.2 L405.6,-13.0 L422.5,-12.9 L439.3,-12.9 L455.7,-11.0 L472.0,-8.9 L488.1,-6.7 L504.1,-4.6 L518.7,1.5 L533.0,8.2 L547.3,15.1" stroke="#c4b295" stroke-width="4.8" opacity="0.55"/>
<path d="M637.8,107.7 L647.8,118.9 L657.8,130.4 L667.1,143.0 L675.1,157.1 L683.5,171.2 L692.1,185.4 L699.2,200.4 L704.9,216.1 L710.9,231.5 L716.8,246.7 L721.5,261.9 L726.2,276.7 L730.7,291.3 L735.0,305.6" stroke="#5e4d3a" stroke-width="4.0" opacity="0.40"/>
<path d="M147.5,-56.3 L164.9,-61.1 L182.4,-65.3 L200.5,-67.6 L218.7,-69.8 L237.1,-71.9 L255.8,-74.0 L274.8,-75.4 L294.1,-75.7 L313.6,-76.2 L333.1,-76.9 L352.7,-77.9 L372.3,-79.1 L391.8,-79.8 L411.1,-80.0 L430.2,-80.4 L449.1,-80.8 L467.5,-78.8 L485.7,-76.4 L503.7,-73.8" stroke="#c4b295" stroke-width="1.8" opacity="0.55"/>
<path d="M581.2,111.6 L591.2,120.6 L600.4,130.9 L609.7,141.4 L619.2,152.2 L628.9,163.0 L638.0,174.6 L646.1,187.1 L654.4,199.6 L662.9,211.8 L669.7,224.7 L675.1,238.0 L680.5,251.0 L685.6,263.9 L689.4,276.8 L693.0,289.7 L696.3,302.5 L699.3,315.3 L701.7,328.3 L703.7,341.5 L705.6,354.9 L707.4,368.6 L709.2,382.5" stroke="#d2c3a6" stroke-width="2.2" opacity="0.50"/>
<path d="M78.3,112.3 L87.8,99.0 L97.2,85.4 L107.7,72.8 L119.7,61.4 L131.5,49.9 L143.0,38.5 L156.7,31.3 L171.5,26.6 L186.1,22.0 L200.6,17.7 L215.1,13.9 L230.0,11.7 L245.0,9.7 L260.1,7.9 L275.5,6.3 L291.1,5.2 L307.1,5.2 L323.2,5.1 L339.6,4.8 L356.1,4.3 L372.6,3.6 L389.2,3.3 L405.6,3.3 L422.0,3.1 L438.2,2.7 L453.9,4.3 L469.4,6.1 L484.7,8.0 L499.8,10.0 L513.6,15.8 L527.1,22.4 L540.6,29.2 L554.2,36.2 L567.6,43.8 L579.4,54.4" stroke="#8a765c" stroke-width="1.8" opacity="0.50"/>
<path d="M496.8,-48.8 L514.6,-45.9 L531.1,-38.8 L547.5,-31.1 L563.8,-23.5 L580.0,-15.9 L596.0,-7.9 L609.9,3.4 L623.8,14.7 L637.6,26.1 L651.5,37.4 L664.1,50.1 L676.8,62.8 L689.4,75.6 L702.1,88.4 L713.6,102.2" stroke="#8a765c" stroke-width="2.2" opacity="0.50"/>
<path d="M215.0,11.4 L229.6,9.2 L244.2,7.2 L259.1,5.6 L274.2,4.2 L289.7,3.5 L305.6,3.8 L321.8,4.0 L338.4,4.1 L355.1,4.0 L372.0,3.5 L389.0,3.3 L405.9,3.2 L422.6,2.9 L439.2,2.4 L455.2,3.6 L470.9,5.1 L486.3,6.6 L501.4,8.3 L515.0,13.8 L528.3,20.1 L541.5,26.7 L554.7,33.7 L567.8,41.4 L579.3,52.2 L591.0,63.2 L603.0,74.3 L615.4,85.5 L627.1,97.7 L639.0,109.7 L651.1,121.5 L663.4,133.1 L674.7,145.1 L684.5,157.9 L694.2,170.5 L703.6,182.8 L710.6,196.0 L715.8,209.9" stroke="#8a765c" stroke-width="2.4" opacity="0.50"/>
<path d="M-28.7,355.7 L-28.3,338.3 L-27.8,320.9 L-27.3,303.7 L-26.7,286.5 L-26.1,269.3 L-25.3,252.1 L-24.1,234.9 L-20.5,218.0 L-16.8,201.0 L-10.1,184.9 L-3.2,168.7 L3.7,152.4 L11.4,136.5 L20.1,121.0 L28.8,105.4 L37.4,89.9 L46.9,75.0 L56.4,60.1 L65.8,45.3 L76.5,31.8 L89.1,19.9" stroke="#8a765c" stroke-width="1.7" opacity="0.50"/>
<path d="M-51.4,159.7 L-43.5,141.8 L-35.6,123.6 L-26.9,105.7 L-17.1,88.4 L-7.5,70.9 L1.9,53.5 L12.3,36.7 L22.6,20.1 L32.7,3.6 L44.3,-11.4 L58.0,-24.5 L71.6,-37.4 L85.4,-50.2 L102.1,-57.6 L120.6,-62.1 L139.2,-66.6 L158.0,-71.1" stroke="#72604a" stroke-width="2.7" opacity="0.50"/>
<path d="M357.6,12.6 L371.7,12.0 L386.0,12.3 L400.5,13.3 L415.2,14.6 L430.2,15.9 L445.4,19.3 L460.9,22.8 L476.6,26.1 L492.6,29.3 L507.6,35.6 L522.4,42.2 L537.3,48.4 L552.0,54.3 L566.2,60.3 L578.4,69.0 L590.3,77.5 L601.9,86.1 L613.1,94.9 L623.1,104.9 L633.0,115.2 L642.7,125.9 L652.4,136.8 L661.2,148.9 L668.8,162.4 L676.7,176.1 L684.9,189.9 L691.5,204.7 L696.8,220.2 L702.4,235.5 L708.1,250.6 L712.6,265.7 L717.3,280.6 L721.8,295.1 L726.2,309.3 L730.0,323.4 L733.3,337.3 L736.2,351.2 L738.9,365.1 L741.2,379.2" stroke="#5e4d3a" stroke-width="4.0" opacity="0.40"/>
<path d="M83.2,110.8 L90.5,98.0 L98.0,85.6 L106.9,74.4 L117.8,64.9 L129.0,55.6 L140.5,46.2 L154.7,41.0 L170.4,37.8 L186.4,34.4 L202.5,30.7 L218.8,26.9 L235.3,24.2 L251.6,21.2 L267.7,17.9 L283.5,14.4 L299.0,11.5 L314.3,9.5" stroke="#d2c3a6" stroke-width="3.6" opacity="0.50"/>
<path d="M-53.7,310.9 L-54.0,292.5 L-54.3,274.4 L-54.4,256.6 L-54.1,238.9 L-53.2,221.5 L-49.4,204.4 L-45.4,187.1 L-37.9,170.7 L-29.9,154.1 L-21.7,137.2 L-12.6,120.4 L-2.4,103.8 L7.6,86.9 L17.4,69.8 L28.1,53.2 L38.4,36.5 L48.4,19.8 L59.5,4.5 L72.3,-8.9 L85.0,-22.0 L97.6,-34.7 L112.9,-42.1 L129.9,-46.5 L147.1,-50.6 L164.5,-54.4 L182.3,-57.8 L200.8,-59.5 L219.7,-61.3 L238.8,-63.3 L258.2,-65.5 L277.8,-67.3 L297.5,-68.2 L317.2,-69.5 L336.7,-71.1 L356.0,-73.0 L375.0,-75.0 L393.6,-76.3 L412.0,-77.1 L430.0,-77.7" stroke="#b8a585" stroke-width="1.9" opacity="0.60"/>
<path d="M531.5,-41.7 L547.5,-33.9 L563.6,-26.0 L579.7,-18.1 L595.6,-9.7 L609.6,2.0 L623.6,13.7 L637.6,25.4 L651.8,37.0 L664.8,49.9 L677.9,62.7 L690.9,75.5 L703.9,88.2 L715.8,101.7 L725.9,116.6 L735.9,131.4 L745.9,146.2 L753.4,162.1 L759.1,179.0 L764.8,195.9 L770.1,213.0 L774.0,230.5 L777.9,248.1 L781.8,265.8" stroke="#ad9a7b" stroke-width="4.7" opacity="0.60"/>
<path d="M737.0,102.7 L746.6,118.5 L756.2,134.4 L763.5,151.7 L769.2,170.0 L775.0,188.4 L780.8,206.9 L785.4,225.8 L790.2,244.6 L795.2,263.2 L800.2,281.6 L804.7,299.9 L809.0,318.0 L813.2,335.9" stroke="#d2c3a6" stroke-width="4.8" opacity="0.50"/>
<path d="M23.5,258.0 L26.8,242.8 L30.1,227.5 L35.9,213.0 L41.9,198.4 L47.8,183.9 L54.4,169.7 L61.9,155.9 L69.3,142.3 L76.6,128.6 L84.9,115.6 L93.1,102.7 L101.4,89.9 L110.9,78.2 L122.1,67.9 L133.4,57.7 L144.7,47.4 L158.5,41.4 L173.5,37.6 L188.7,33.7 L203.8,29.8 L219.1,26.1 L234.6,23.7 L250.1,21.2 L265.6,18.7 L281.0,16.1 L296.4,14.1 L311.8,13.1 L327.1,12.1 L342.4,11.1 L357.6,10.2 L372.8,9.3" stroke="#ad9a7b" stroke-width="4.5" opacity="0.60"/>
<path d="M339.4,-18.5 L354.8,-19.1 L370.4,-19.5 L386.1,-19.0 L402.0,-17.8 L418.2,-16.5 L434.8,-15.2 L451.4,-11.9 L468.3,-8.4 L485.3,-5.1 L502.5,-2.1 L518.6,4.4 L534.4,11.1 L550.1,17.6 L565.6,23.9 L580.6,30.4 L593.3,39.8 L605.8,49.2 L618.1,58.8 L630.1,68.5 L640.8,79.7 L651.5,91.2 L662.1,103.0 L672.8,115.0 L682.7,128.2 L691.3,142.9 L700.1,157.6 L709.3,172.3 L716.6,188.0 L722.6,204.4 L728.7,220.5 L734.8,236.4 L739.6,252.4 L744.3,268.1 L748.9,283.5" stroke="#b8a585" stroke-width="2.9" opacity="0.60"/>
<path d="M41.0,341.1 L42.0,326.5 L42.9,311.8 L43.7,297.0 L44.5,282.2 L45.5,267.3 L48.4,252.7 L51.1,238.1 L56.2,224.2 L61.4,210.6 L66.5,197.0 L72.4,183.9 L79.2,171.3 L86.0,158.8 L92.9,146.4 L100.8,134.5 L108.8,122.7 L116.9,110.9 L126.2,100.1 L137.2,90.4 L148.2,80.7 L159.3,70.9 L172.5,64.9" stroke="#8a765c" stroke-width="3.4" opacity="0.50"/>
<path d="M603.3,76.8 L614.4,86.8 L624.7,98.2 L635.0,109.9 L645.6,121.8 L656.4,133.7 L666.5,146.5 L675.5,160.4 L684.6,174.2 L694.0,187.7 L701.5,202.0 L707.5,216.7 L713.4,231.2 L719.0,245.5 L723.2,260.0 L727.1,274.3 L730.8,288.5 L734.2,302.8 L736.8,317.2 L739.1,331.9 L741.2,346.8 L743.3,362.0 L745.3,377.5" stroke="#c4b295" stroke-width="2.4" opacity="0.55"/>
<path d="M548.8,87.3 L559.7,96.3 L570.6,105.2 L581.5,114.1 L592.4,123.0 L602.4,132.9 L612.4,142.9 L622.3,152.9 L632.3,162.8 L641.3,173.5 L649.1,185.3 L656.8,197.0 L664.6,208.8" stroke="#5e4d3a" stroke-width="4.9" opacity="0.40"/>
<path d="M555.5,73.4 L566.8,82.7 L578.0,92.0 L589.3,101.3 L600.6,110.7 L611.0,121.1 L621.3,131.5 L631.7,142.0 L642.1,152.4 L651.6,163.6 L659.8,175.8 L667.9,188.0 L676.1,200.2 L682.4,213.3" stroke="#5e4d3a" stroke-width="2.3" opacity="0.40"/>
<path d="M405.9,-27.8 L423.4,-27.6 L440.9,-27.5 L458.1,-25.5 L475.2,-23.2 L492.0,-21.0 L508.7,-18.9 L523.9,-12.7 L538.8,-6.0 L553.6,1.0 L568.3,8.0 L582.8,15.7 L595.3,26.6 L607.9,37.7 L620.7,48.9 L633.6,60.2 L645.6,72.7 L657.7,85.3 L670.0,97.8 L682.4,110.2 L693.9,123.4 L703.8,137.6 L713.8,151.6 L723.6,165.5 L731.3,180.3 L737.0,195.8 L742.6,211.2 L747.8,226.7 L751.4,242.6 L755.0,258.6 L758.4,274.7 L761.7,291.1 L764.5,307.7 L767.1,324.5" stroke="#d2c3a6" stroke-width="4.4" opacity="0.50"/>
<path d="M69.9,143.0 L77.1,129.6 L85.3,116.9 L93.6,104.2 L101.9,91.6 L111.5,80.1 L122.9,69.9 L134.3,59.8 L145.8,49.6 L159.7,43.5 L174.9,39.6 L190.0,35.5 L205.2,31.4 L220.4,27.5 L235.8,24.9 L251.1,22.3 L266.3,19.7 L281.5,17.0 L296.6,15.0 L311.8,14.0 L326.9,13.1 L342.0,12.3 L357.1,11.6 L372.2,11.0 L387.3,11.0 L402.6,11.6 L417.9,12.2 L433.4,12.8" stroke="#5e4d3a" stroke-width="2.4" opacity="0.40"/>
<path d="M226.2,-1.8 L241.8,-4.2 L257.3,-6.4 L273.0,-8.5 L288.9,-9.8 L305.0,-10.0 L321.4,-10.2 L337.9,-10.4 L354.6,-10.7 L371.4,-11.2 L388.3,-11.2 L405.3,-10.9 L422.2,-10.7 L439.0,-10.8 L455.5,-8.9" stroke="#ad9a7b" stroke-width="4.6" opacity="0.60"/>
<path d="M-20.3,322.8 L-19.9,305.6 L-19.4,288.6 L-18.9,271.6 L-18.3,254.6 L-17.2,237.7 L-13.8,221.1 L-10.4,204.5 L-3.9,188.7 L2.8,172.9 L9.5,157.1 L17.1,141.5 L25.8,126.5 L34.4,111.3 L43.0,96.2 L52.5,81.6 L62.0,67.0 L71.4,52.4 L82.1,38.9 L94.5,27.1" stroke="#b8a585" stroke-width="3.3" opacity="0.60"/>
<path d="M31.8,308.4 L32.7,293.3 L33.7,278.2 L34.9,262.9 L38.1,247.9 L41.1,232.8 L46.5,218.5 L52.1,204.3 L57.5,190.1 L63.6,176.4 L70.6,163.2 L77.6,150.1 L84.6,137.1 L92.6,124.8 L100.6,112.5 L108.7,100.3 L118.1,89.2 L129.3,79.4 L140.5,69.5 L151.8,59.6 L165.4,53.6 L180.3,49.8 L195.1,45.8 L209.9,41.7 L224.7,37.8 L239.7,35.2 L254.6,32.6 L269.4,29.9 L284.1,27.3 L298.8,25.3 L313.5,24.4 L328.1,23.5 L342.7,22.8 L357.4,22.1 L372.1,21.6" stroke="#c4b295" stroke-width="1.9" opacity="0.55"/>
<path d="M23.7,169.3 L31.6,154.3 L40.4,139.5 L49.1,124.5 L57.6,109.4 L66.9,94.8 L75.9,80.2 L84.7,65.6 L94.6,52.3 L106.1,40.6 L117.5,29.2 L128.8,18.0 L142.7,11.5 L158.0,7.6 L173.4,3.9 L189.1,0.4 L205.1,-2.8 L221.6,-4.6 L238.4,-6.4 L255.3,-8.3 L272.4,-10.5 L289.7,-12.3 L307.0,-13.2 L324.2,-14.4 L341.3,-15.8 L358.2,-17.4 L374.9,-19.0 L391.4,-20.0 L407.6,-20.4 L423.6,-20.7 L439.5,-20.8 L455.0,-18.6 L470.5,-15.9 L486.1,-12.9 L501.7,-9.7 L516.4,-2.5" stroke="#ad9a7b" stroke-width="1.6" opacity="0.60"/>
<path d="M22.7,301.4 L22.6,286.2 L22.5,271.1 L23.0,256.3 L25.6,241.8 L28.5,227.4 L34.2,213.8 L40.3,200.3 L46.6,186.6 L53.8,173.1 L62.0,159.9 L70.3,146.5 L78.5,132.8" stroke="#d2c3a6" stroke-width="3.5" opacity="0.50"/>
<path d="M216.3,-81.1 L236.4,-84.2 L256.3,-87.5 L276.2,-90.3 L296.1,-92.1 L315.6,-93.9 L334.9,-95.7 L354.0,-97.5 L372.8,-99.2 L391.5,-99.9 L410.1,-99.8 L428.6,-99.4 L447.2,-98.7 L465.6,-95.4 L484.2,-91.5 L503.1,-87.5 L522.2,-83.4 L540.1,-74.9 L558.1,-65.8 L576.3,-56.9 L594.6,-48.2" stroke="#8a765c" stroke-width="3.6" opacity="0.50"/>
<path d="M-52.2,386.5 L-52.4,368.2 L-52.5,350.2 L-52.4,332.4 L-52.1,314.8 L-51.6,297.3 L-50.7,279.8 L-49.6,262.3 L-48.3,244.6 L-46.3,226.8 L-41.8,209.0 L-37.2,190.9 L-29.6,173.5 L-21.9,155.9 L-14.3,138.0 L-6.1,120.5 L3.0,103.5 L11.8,86.5 L20.3,69.7 L29.8,53.6 L39.1,37.8 L48.3,22.3 L58.9,8.3 L71.6,-3.7 L84.5,-15.6 L97.6,-27.2 L113.7,-33.8 L131.6,-37.7 L149.8,-41.7 L168.2,-45.8 L186.8,-49.7" stroke="#72604a" stroke-width="4.0" opacity="0.50"/>
<path d="M482.2,9.2 L497.4,11.8 L511.4,18.2 L525.4,25.3 L539.4,32.4 L553.6,39.5 L567.6,47.0 L580.0,57.3 L592.4,67.6 L604.9,77.7 L617.5,87.8" stroke="#c4b295" stroke-width="2.2" opacity="0.55"/>
<path d="M463.4,25.1 L478.7,27.5 L494.0,29.9 L508.1,35.6 L522.0,41.8 L535.7,47.9 L549.4,54.1 L562.8,60.6 L574.3,69.9 L585.7,79.3 L597.1,88.8 L608.4,98.4 L618.9,109.2 L629.3,120.1 L639.8,131.1 L650.4,142.1 L660.1,154.0 L668.5,167.0 L677.1,180.0 L685.7,192.9 L692.4,206.6 L697.7,221.0 L702.9,235.3 L707.9,249.6 L711.7,264.0 L715.3,278.5 L718.9,292.9 L722.4,307.3 L725.3,321.8" stroke="#b8a585" stroke-width="4.4" opacity="0.60"/>
<path d="M427.3,-78.5 L445.7,-78.1 L463.9,-75.2 L482.1,-71.9 L500.4,-68.6 L518.8,-65.2 L535.9,-57.5 L553.0,-49.2 L570.0,-40.9 L587.2,-32.7 L604.1,-24.2 L618.9,-12.4 L633.7,-0.6 L648.4,11.1 L663.1,22.7 L676.5,35.5 L689.7,48.5 L702.9,61.4 L716.0,74.4 L727.8,88.4 L737.8,103.9 L747.8,119.4 L757.8,135.1" stroke="#72604a" stroke-width="2.6" opacity="0.50"/>
<path d="M240.2,39.8 L255.0,37.5 L269.8,35.2 L284.5,32.9 L299.3,31.1 L314.1,30.3 L329.0,29.4 L343.7,28.5 L358.5,27.7 L373.2,26.9 L387.9,26.7 L402.6,27.0 L417.3,27.3 L432.1,27.7 L446.7,29.9 L461.2,32.5 L475.9,35.0 L490.5,37.6 L504.1,43.6 L517.6,50.0 L531.1,56.4 L544.6,62.8 L557.9,69.4 L569.5,78.8 L581.1,88.1 L592.6,97.4 L604.1,106.7 L614.7,117.0 L625.1,127.4 L635.5,137.8 L645.9,148.2 L655.3,159.4 L663.4,171.8 L671.4,184.2 L679.5,196.7" stroke="#c4b295" stroke-width="2.9" opacity="0.55"/>
<path d="M278.6,-72.2 L296.3,-73.0 L314.1,-73.5 L332.0,-73.9 L350.1,-74.1 L368.5,-74.2 L387.1,-73.6 L406.0,-72.5 L425.1,-71.5 L444.3,-70.7 L463.4,-67.7 L482.6,-64.7 L501.7,-61.9 L520.7,-59.3 L538.1,-52.6 L555.2,-45.4 L572.0,-38.3 L588.6,-31.1 L604.7,-23.5 L618.4,-12.2 L632.1,-0.8 L645.6,10.8 L659.2,22.7 L671.6,36.1 L684.1,49.8 L696.9,63.7 L709.8,77.6 L721.8,92.5 L732.4,108.8 L743.1,124.9 L754.0,140.9" stroke="#72604a" stroke-width="1.8" opacity="0.50"/>
<path d="M86.4,158.5 L93.3,145.8 L101.1,133.7 L109.0,121.7 L116.9,109.7 L126.0,98.7 L136.8,89.0 L147.6,79.4 L158.4,69.7 L171.5,63.8 L185.8,60.1 L200.1,56.3 L214.4,52.4 L228.7,48.7 L243.2,46.4 L257.7,43.9 L272.2,41.5 L286.5,39.1 L300.9,37.2 L315.3,36.4 L329.6,35.5 L344.0,34.8 L358.3,34.1 L372.7,33.5 L387.1,33.4 L401.6,33.9 L416.1,34.4 L430.7,34.9 L445.2,37.2 L459.8,39.8 L474.3,42.3 L488.9,44.8" stroke="#ad9a7b" stroke-width="3.8" opacity="0.60"/>
<path d="M356.2,-6.6 L373.0,-7.5 L389.7,-8.0 L406.3,-8.1 L422.7,-8.3 L439.1,-8.5 L455.0,-6.7 L470.7,-4.6 L486.3,-2.4 L501.8,-0.1 L516.0,6.2" stroke="#ad9a7b" stroke-width="2.9" opacity="0.60"/>
<path d="M152.7,111.5 L163.1,102.2 L173.5,92.7 L185.8,86.9 L199.2,83.1 L212.4,79.2 L225.6,75.2 L238.7,71.6 L252.0,69.3 L265.2,67.0 L278.4,64.8 L291.6,62.7 L304.8,61.3 L318.2,60.8 L331.6,60.4 L345.1,60.0 L358.8,59.7 L372.5,59.4 L386.3,59.5 L400.3,60.0 L414.2,60.4 L428.2,60.7 L442.1,62.7 L455.9,64.8 L469.6,66.8 L483.2,68.7 L495.8,73.8 L508.1,79.3 L520.3,84.8 L532.5,90.4 L544.3,96.4 L554.6,105.0 L564.8,113.6 L575.1,122.4" stroke="#8a765c" stroke-width="4.0" opacity="0.50"/>
<path d="M580.8,91.0 L593.2,100.3 L605.6,109.3 L616.8,119.0 L627.8,128.7 L638.5,138.3 L648.9,147.8 L658.1,158.2 L665.7,169.8 L673.0,181.6" stroke="#8a765c" stroke-width="1.9" opacity="0.50"/>
<path d="M145.1,99.3 L155.4,89.8 L165.7,80.3 L178.2,74.6 L191.8,71.0 L205.4,67.4 L219.0,63.8 L232.7,60.4 L246.7,58.4 L260.8,56.3 L274.8,54.1 L288.9,52.0 L303.0,50.4 L317.2,49.6 L331.3,48.8 L345.5,48.0 L359.6,47.2 L373.6,46.4 L387.7,46.2 L401.8,46.4 L415.8,46.6 L429.8,46.9 L443.7,49.0 L457.5,51.4 L471.4,53.8 L485.3,56.2 L498.2,61.8 L510.9,68.0" stroke="#b8a585" stroke-width="2.0" opacity="0.60"/>
<path d="M509.0,70.9 L520.5,77.0 L532.2,83.4 L543.8,90.3 L554.1,99.9 L564.6,109.7 L575.4,119.4 L586.5,129.1 L597.0,139.7 L607.6,150.0 L618.4,160.1 L629.2,169.9 L639.0,180.2 L647.5,191.2" stroke="#72604a" stroke-width="4.7" opacity="0.50"/>
<path d="M22.6,75.1 L32.2,59.9 L41.9,44.9 L51.6,29.9 L62.9,16.3 L76.2,4.3 L89.6,-7.7 L103.1,-19.6 L119.5,-26.8 L137.3,-31.3 L155.2,-36.0 L173.1,-40.7 L191.1,-45.3 L209.4,-48.2 L227.6,-51.3" stroke="#b8a585" stroke-width="3.3" opacity="0.60"/>
<path d="M542.6,-75.3 L560.1,-67.0 L577.5,-58.7 L595.0,-50.3 L612.3,-41.6 L627.3,-29.3 L642.3,-17.0 L657.3,-4.7 L672.3,7.6 L686.1,21.2 L699.8,34.9 L713.5,48.6 L727.2,62.3" stroke="#d2c3a6" stroke-width="4.3" opacity="0.50"/>
<path d="M-50.5,243.1 L-48.5,224.4 L-44.1,205.8 L-39.8,187.0 L-32.7,169.0 L-25.4,150.9 L-18.5,132.9 L-10.8,115.4 L-2.2,98.5 L6.3,81.8 L14.6,65.4 L24.0,49.8 L33.5,34.5 L43.1,19.4 L54.3,5.8 L67.7,-6.1 L81.4,-17.9 L95.2,-29.7 L112.1,-36.6" stroke="#c4b295" stroke-width="4.9" opacity="0.55"/>
<path d="M519.2,-5.8 L533.2,1.4 L547.3,9.0 L561.6,16.8 L575.8,25.1 L588.5,36.6 L601.4,48.0 L614.6,59.5 L628.0,70.7 L640.7,83.0 L653.3,95.0" stroke="#5e4d3a" stroke-width="3.7" opacity="0.40"/>
<path d="M148.6,-50.3 L167.0,-55.3 L185.4,-59.9 L204.2,-63.0 L222.8,-66.1 L241.4,-69.2 L259.9,-72.4 L278.4,-74.7 L297.0,-75.9 L315.4,-77.0 L333.9,-78.0 L352.3,-79.0 L370.7,-79.8 L389.2,-79.9 L407.8,-79.3" stroke="#72604a" stroke-width="4.5" opacity="0.50"/>
<path d="M130.1,-50.8 L147.2,-55.6 L164.3,-60.0 L181.7,-63.8 L199.7,-65.7 L218.0,-67.5 L236.7,-69.2 L255.6,-71.1 L274.9,-72.3 L294.6,-72.7 L314.4,-73.3 L334.2,-74.2 L354.0,-75.5 L373.7,-77.1 L393.1,-78.2" stroke="#72604a" stroke-width="2.0" opacity="0.50"/>
<path d="M231.0,17.3 L247.7,14.8 L264.4,11.9 L280.8,8.7 L297.1,5.9 L313.1,4.0 L328.8,2.1 L344.2,0.3 L359.3,-1.4 L374.2,-2.8 L388.9,-3.3 L403.6,-3.0 L418.3,-2.3 L433.2,-1.4" stroke="#d2c3a6" stroke-width="4.6" opacity="0.50"/>
<path d="M545.6,96.0 L556.9,104.7 L568.1,113.1 L579.3,121.5 L590.3,129.7 L600.2,138.8 L609.9,147.9 L619.5,157.1 L628.8,166.4 L637.2,176.6 L644.2,187.9 L651.2,199.5 L658.2,211.2 L663.6,223.9 L667.6,237.5 L671.9,251.1 L676.1,264.9 L679.4,278.9 L682.9,292.9 L686.6,306.7 L690.3,320.4 L693.7,334.0 L697.0,347.5 L700.2,360.7 L703.2,373.9 L706.2,386.9 L708.9,399.8" stroke="#c4b295" stroke-width="3.8" opacity="0.55"/>
<path d="M341.5,7.8 L357.0,7.0 L372.5,6.3 L388.0,6.2 L403.5,6.6 L419.1,7.0 L434.7,7.4 L450.1,9.8 L465.6,12.5 L481.0,15.1 L496.5,17.7 L510.9,23.8 L525.1,30.5 L539.2,37.1 L553.4,43.7 L567.3,50.6 L579.4,60.4 L591.4,70.2 L603.4,80.0 L615.4,89.8 L626.4,100.7 L637.3,111.7" stroke="#d2c3a6" stroke-width="3.7" opacity="0.50"/>
<path d="M84.4,116.8 L93.1,103.8 L101.8,90.8 L111.7,78.8 L123.2,68.1 L134.6,57.4 L146.0,46.8 L159.6,40.3 L174.4,36.1 L189.2,31.9 L203.9,27.8 L218.7,24.1 L233.9,21.8 L249.0,19.5 L264.2,17.3 L279.4,15.2 L294.8,13.6 L310.3,13.0 L325.8,12.4 L341.4,11.8 L357.1,11.1 L372.7,10.3 L388.4,10.1" stroke="#8a765c" stroke-width="2.9" opacity="0.50"/>
<path d="M184.1,20.0 L198.7,16.0 L213.4,12.5 L228.5,10.6 L243.8,8.9 L259.3,7.2 L275.1,5.6 L291.1,4.5 L307.4,4.3 L323.9,3.9 L340.5,3.3 L357.1,2.5 L373.7,1.5 L390.2,0.9 L406.5,0.6 L422.6,0.2 L438.5,-0.3 L454.0,1.3 L469.3,3.3 L484.4,5.4 L499.3,7.6 L513.1,13.8 L526.6,20.8 L540.3,27.9 L554.1,35.2 L567.8,43.1" stroke="#c4b295" stroke-width="3.7" opacity="0.55"/>
<path d="M630.9,69.5 L643.4,81.1 L655.7,92.6 L667.9,103.9 L680.0,115.1 L690.8,127.1 L699.9,140.4 L708.9,153.7 L717.6,167.1 L724.1,181.7 L728.9,197.2 L733.6,213.0 L738.2,229.0 L741.5,245.5 L744.9,262.2 L748.6,279.0 L752.4,295.8" stroke="#d2c3a6" stroke-width="4.4" opacity="0.50"/>
<path d="M184.1,-63.5 L202.5,-66.3 L220.8,-69.1 L239.3,-71.8 L257.7,-74.4 L276.4,-76.3 L295.2,-77.0 L314.1,-77.8 L333.0,-78.5 L352.0,-79.3 L371.0,-80.2 L390.1,-80.4 L409.1,-80.1 L428.1,-79.9 L447.1,-79.7 L465.8,-77.2 L484.3,-74.3 L502.9,-71.5 L521.3,-68.6 L538.3,-61.3 L555.1,-53.3 L571.9,-45.3 L588.6,-37.2 L605.2,-28.6 L619.6,-16.5 L634.0,-4.4 L648.5,7.8 L663.1,19.9 L676.6,33.4 L690.0,46.9 L703.5,60.3 L717.1,73.7 L729.4,88.0 L740.0,103.6 L750.6,119.2" stroke="#c4b295" stroke-width="1.9" opacity="0.55"/>
<path d="M612.7,65.2 L625.3,75.5 L636.9,86.9 L648.4,98.4 L659.9,109.9 L671.4,121.4 L681.9,133.7 L690.8,147.3 L699.8,160.9 L708.7,174.5 L715.6,189.0 L720.8,204.4" stroke="#5e4d3a" stroke-width="1.6" opacity="0.40"/>
<path d="M371.7,-44.6 L389.9,-44.9 L408.1,-44.8 L426.1,-44.9 L444.0,-45.1 L461.5,-43.2 L478.8,-41.0 L495.9,-38.7 L512.8,-36.4 L528.3,-29.8 L543.5,-22.4 L558.7,-14.9" stroke="#72604a" stroke-width="1.8" opacity="0.50"/>
<path d="M89.3,-9.0 L103.1,-21.4 L119.6,-29.0 L137.6,-34.0 L155.4,-39.1 L173.1,-44.3 L190.8,-49.1 L208.8,-52.2 L226.6,-55.2 L244.4,-58.2 L262.1,-61.1 L279.9,-63.2 L297.8,-64.0 L315.8,-64.7 L333.8,-65.3 L351.9,-65.9 L370.2,-66.4 L388.5,-66.3 L407.0,-65.6 L425.6,-65.0 L444.2,-64.5 L462.6,-61.8 L481.0,-58.8 L499.4,-56.0 L517.7,-53.2 L534.6,-46.3 L551.2,-38.8 L567.6,-31.4 L584.0,-23.9 L600.1,-15.9 L613.9,-4.5 L627.7,7.0 L641.5,18.5 L655.3,30.2 L668.0,43.3 L680.7,56.5 L693.5,69.8 L706.4,83.1" stroke="#d2c3a6" stroke-width="2.0" opacity="0.50"/>
<path d="M484.3,-76.2 L503.4,-73.1 L522.5,-70.2 L540.2,-63.0 L557.5,-55.3 L574.7,-47.6 L591.8,-40.0 L608.5,-31.9 L622.9,-20.2 L637.2,-8.5 L651.4,3.4 L665.6,15.4 L678.6,28.9 L691.6,42.5 L704.8,56.3 L718.0,70.1 L730.1,85.0 L740.7,101.2 L751.3,117.4 L762.1,133.6 L770.6,150.8 L777.1,168.8 L783.7,186.6 L789.9,204.4 L794.7,222.5 L799.3,240.6 L803.7,258.6 L808.1,276.5 L811.7,294.7" stroke="#c4b295" stroke-width="2.2" opacity="0.55"/>
<path d="M-7.7,50.0 L4.3,33.4 L16.1,16.4 L27.8,-0.8 L40.7,-16.9 L55.5,-31.4 L69.9,-45.8 L84.0,-60.2 L100.8,-69.1 L118.9,-74.9 L136.9,-80.3 L154.9,-85.5 L173.0,-89.9 L191.6,-92.3 L210.4,-94.4 L229.5,-96.4 L248.9,-98.3 L268.8,-99.5 L289.1,-99.5 L309.6,-99.8 L330.3,-100.3 L351.1,-101.2 L371.9,-102.3 L392.5,-103.1 L413.1,-103.4" stroke="#d2c3a6" stroke-width="2.1" opacity="0.50"/>
<path d="M-18.9,131.7 L-12.0,115.1 L-3.8,99.4 L4.5,84.0 L13.0,68.8 L23.0,54.3 L33.2,39.9 L43.8,25.4 L56.1,12.0 L70.6,0.0 L85.2,-12.2 L99.8,-24.8 L117.2,-32.6 L135.9,-38.1 L154.5,-43.7 L172.7,-49.6 L190.7,-55.1 L208.8,-58.9 L226.5,-62.6 L244.1,-66.1 L261.4,-69.4 L278.8,-71.6 L296.2,-72.4 L313.8,-72.8 L331.5,-73.0 L349.5,-73.0 L367.8,-72.9 L386.4,-72.1 L405.3,-70.8 L424.5,-69.6 L443.9,-68.7 L463.2,-65.7 L482.5,-62.7 L501.7,-60.0 L520.8,-57.6 L538.4,-51.1 L555.5,-44.1 L572.2,-37.2 L588.7,-30.3" stroke="#ad9a7b" stroke-width="3.6" opacity="0.60"/>
<path d="M608.4,100.9 L619.4,111.5 L630.4,122.1 L641.3,132.6 L652.1,143.0 L661.9,154.3 L670.2,166.6 L678.4,179.0 L686.6,191.5 L692.8,204.9 L697.4,219.1 L702.0,233.5 L706.4,248.0 L709.7,262.8 L713.0,277.8 L716.4,292.8 L719.9,307.8 L723.0,322.9 L726.1,338.0 L729.2,353.0" stroke="#d2c3a6" stroke-width="3.1" opacity="0.50"/>
<path d="M222.3,31.0 L236.5,28.8 L250.9,26.8 L265.4,24.9 L280.0,23.2 L294.9,22.2 L310.1,22.1 L325.5,22.0 L341.0,21.8 L356.7,21.5 L372.5,20.9 L388.4,20.7 L404.2,20.8 L419.9,20.7 L435.5,20.4 L450.7,22.0 L465.7,23.8 L480.5,25.6 L495.1,27.5 L508.4,33.0 L521.5,39.2 L534.5,45.6 L547.5,52.3 L560.3,59.4 L571.5,69.5 L582.9,79.7 L594.5,90.0 L606.3,100.2 L617.3,111.6 L628.5,122.8 L639.8,133.9 L651.2,144.8 L661.6,156.3 L670.6,168.7 L679.5,181.0 L688.3,193.0 L694.9,206.0 L699.9,219.6 L704.6,233.3 L708.9,247.1" stroke="#ad9a7b" stroke-width="3.7" opacity="0.60"/>
<path d="M28.4,364.5 L28.3,349.6 L28.3,334.9 L28.4,320.4 L28.6,305.9 L29.1,291.6 L29.8,277.3 L31.0,263.0 L34.4,248.8 L38.0,234.4 L44.1,220.6 L50.6,206.7 L56.9,192.6 L64.0,178.6 L71.8,164.9 L79.4,151.1 L86.8,137.3 L94.9,124.0 L102.8,110.8 L110.6,97.8 L119.4,85.9" stroke="#8a765c" stroke-width="2.1" opacity="0.50"/>
<path d="M19.3,22.6 L31.0,6.2 L44.0,-9.2 L59.0,-23.0 L73.8,-37.0 L88.3,-51.1 L105.5,-59.9 L123.9,-65.9 L142.1,-71.7 L160.0,-77.3 L178.0,-82.3 L196.3,-85.3 L214.6,-87.9 L233.0,-90.3 L251.7,-92.6 L270.6,-93.9 L290.0,-93.9 L309.6,-94.0 L329.6,-94.1 L349.7,-94.4 L370.0,-95.0 L390.3,-95.1 L410.7,-94.9 L431.0,-95.0 L451.1,-95.2 L470.8,-93.2 L490.2,-90.9 L509.3,-88.7 L528.1,-86.3 L545.2,-79.4 L562.0,-71.5" stroke="#b8a585" stroke-width="4.3" opacity="0.60"/>
<path d="M266.7,21.1 L280.7,18.9 L294.8,17.7 L309.2,17.6 L323.9,17.8 L338.8,18.1 L354.1,18.4 L369.7,18.7 L385.6,19.3 L401.7,20.2 L418.0,20.8 L434.3,21.1 L450.3,23.0 L466.2,24.9 L481.9,26.6 L497.3,28.1 L511.2,33.0 L524.7,38.5 L537.9,44.1 L550.9,49.9 L563.4,56.3 L574.1,65.8 L584.9,75.6 L595.7,85.7 L606.7,96.1 L617.0,107.7 L627.5,119.6 L638.4,131.4 L649.5,143.1 L660.0,155.5 L669.3,168.8 L678.7,181.8 L688.2,194.5 L695.6,207.8" stroke="#d2c3a6" stroke-width="2.8" opacity="0.50"/>
<path d="M238.2,-76.8 L257.2,-79.7 L276.3,-81.9 L295.4,-83.0 L314.6,-84.1 L333.6,-85.3 L352.6,-86.4 L371.6,-87.5 L390.5,-87.9 L409.4,-87.7 L428.3,-87.3 L447.1,-86.9 L465.7,-84.1 L484.4,-80.9 L503.0,-77.6 L521.8,-74.3 L539.2,-66.5 L556.4,-58.2 L573.7,-49.8 L591.1,-41.6 L608.2,-32.9 L623.1,-20.8 L638.1,-8.8 L653.0,3.2 L667.9,15.1 L681.5,28.4 L695.0,41.6" stroke="#c4b295" stroke-width="2.4" opacity="0.55"/>
<path d="M123.4,13.1 L139.0,6.1 L155.8,1.4 L172.6,-3.4 L189.2,-8.3 L205.7,-13.0 L222.4,-16.1 L238.9,-19.2 L255.3,-22.2 L271.5,-25.1 L287.8,-27.2 L304.1,-28.0 L320.5,-28.7 L336.9,-29.2 L353.5,-29.6 L370.2,-30.0 L387.1,-29.6 L404.1,-28.7 L421.3,-27.9 L438.7,-27.2 L455.9,-24.4 L473.2,-21.6 L490.4,-18.9 L507.6,-16.4 L523.5,-10.1 L539.1,-3.3 L554.5,3.4 L569.7,10.1 L584.5,17.2 L597.3,27.5 L609.9,37.9 L622.4,48.4 L635.0,59.2 L646.5,71.2 L658.0,83.5 L669.6,96.0 L681.4,108.5" stroke="#ad9a7b" stroke-width="2.4" opacity="0.60"/>
<path d="M-76.2,207.6 L-72.7,188.3 L-69.1,169.0 L-62.1,150.8 L-54.8,132.8 L-47.4,114.8 L-38.9,97.3 L-29.1,80.4 L-19.2,63.4 L-9.2,46.3 L2.0,29.9 L13.2,13.3 L24.4,-3.3 L37.1,-18.7 L51.9,-32.4 L66.5,-46.1 L81.1,-59.8 L98.5,-68.2 L117.5,-73.7 L136.3,-79.1 L155.1,-84.4 L174.0,-89.2 L193.2,-92.2 L212.5,-95.0 L231.8,-97.8 L251.2,-100.5 L270.7,-102.4 L290.5,-103.1" stroke="#d2c3a6" stroke-width="1.8" opacity="0.50"/>
<path d="M477.3,34.2 L493.2,36.5 L507.9,42.0 L522.3,47.7 L536.4,53.1 L550.1,58.5 L563.4,64.2 L574.6,72.6 L585.5,81.3 L596.2,90.2 L606.8,99.4 L616.4,109.9 L625.9,120.9 L635.6,132.1 L645.6,143.6 L654.8,156.0 L663.0,169.6 L671.5,183.2 L680.3,196.6 L687.5,210.8 L693.3,225.5 L699.3,239.8 L705.0,253.9 L709.4,268.0 L713.7,281.9 L717.7,295.5 L721.3,309.0 L724.3,322.6 L726.7,336.3" stroke="#ad9a7b" stroke-width="4.4" opacity="0.60"/>
<path d="M327.5,24.4 L343.6,23.5 L359.7,22.3 L375.6,20.8 L391.2,19.7 L406.6,19.0 L421.6,18.3 L436.4,17.7 L450.7,19.1 L464.8,21.0 L478.8,23.2 L492.7,25.7 L505.6,32.0 L518.4,39.1 L531.5,46.4 L544.8,53.8 L558.2,61.7 L570.2,72.3 L582.4,82.7 L594.9,93.0 L607.6,103.0 L619.3,113.8 L631.1,124.4 L642.7,134.6 L654.1,144.6 L664.4,155.2 L672.9,166.9 L681.2,178.5 L689.1,190.2 L694.9,203.0" stroke="#ad9a7b" stroke-width="4.1" opacity="0.60"/>
<path d="M31.4,58.2 L40.9,43.0 L50.5,28.0 L61.6,14.3 L74.8,2.3 L88.1,-9.5 L101.6,-21.4 L117.9,-28.4 L135.9,-32.8 L153.9,-37.3 L172.0,-41.9 L190.2,-46.3 L208.7,-49.2 L227.2,-52.3 L245.5,-55.5 L263.8,-58.7 L281.9,-61.3" stroke="#5e4d3a" stroke-width="3.0" opacity="0.40"/>
<path d="M-11.4,340.0 L-11.6,323.3 L-11.7,307.0 L-11.6,290.8 L-11.4,274.8 L-10.9,258.9 L-9.7,243.1 L-6.1,227.4 L-2.3,211.6 L4.6,196.5 L11.8,181.3 L19.0,165.7 L27.0,150.3 L35.9,135.2 L44.7,119.8 L53.2,104.4 L62.5,89.5 L71.5,74.6 L80.3,59.9 L90.2,46.4 L101.8,34.6 L113.2,23.2 L124.7,11.9 L138.8,5.5 L154.3,1.7 L170.1,-1.9 L186.1,-5.4 L202.5,-8.6 L219.4,-10.3 L236.5,-12.2 L253.9,-14.3 L271.3,-16.6 L288.8,-18.5 L306.4,-19.6 L323.9,-21.0 L341.2,-22.5 L358.2,-24.2 L375.0,-25.9" stroke="#b8a585" stroke-width="3.6" opacity="0.60"/>
<path d="M55.5,400.2 L56.2,386.4 L56.9,372.5 L57.6,358.5 L58.3,344.6 L58.9,330.6 L59.4,316.6 L59.9,302.6 L60.4,288.7 L61.2,274.8 L63.7,261.2" stroke="#ad9a7b" stroke-width="1.9" opacity="0.60"/>
<path d="M555.4,39.1 L569.6,46.2 L582.0,56.1 L594.4,65.9 L606.7,75.8 L619.0,85.6 L630.2,96.5 L641.3,107.5 L652.4,118.5 L663.4,129.6 L673.4,141.5 L681.8,154.7 L690.4,168.0 L698.9,181.3 L705.5,195.6 L710.5,210.7 L715.6,225.9" stroke="#72604a" stroke-width="2.0" opacity="0.50"/>
<path d="M214.9,12.1 L229.8,9.8 L244.7,7.7 L259.8,5.9 L275.1,4.2 L290.6,3.2 L306.5,3.2 L322.7,3.2 L339.0,3.0 L355.5,2.7 L372.2,2.1 L388.8,1.9 L405.4,2.0 L422.0,1.8 L438.3,1.5 L454.3,3.1 L470.0,4.9 L485.4,6.7 L500.7,8.6 L514.5,14.3 L528.1,20.8 L541.6,27.5 L555.2,34.4 L568.5,41.9 L580.2,52.5 L592.1,63.3 L604.2,74.1 L616.6,85.0 L628.1,96.9 L639.9,108.7 L651.8,120.4 L663.8,131.8 L674.8,143.8 L684.3,156.8 L693.7,169.6 L702.9,182.1" stroke="#c4b295" stroke-width="4.8" opacity="0.55"/>
<path d="M607.6,97.9 L617.3,108.7 L627.1,119.7 L637.1,131.1 L647.3,142.6 L656.8,155.0 L665.1,168.5 L673.8,182.0 L682.7,195.4 L689.9,209.4 L695.7,224.0 L701.5,238.3 L707.1,252.3 L711.4,266.4" stroke="#5e4d3a" stroke-width="2.0" opacity="0.40"/>
<path d="M111.0,-6.6 L127.5,-13.9 L145.3,-18.9 L162.9,-24.0 L180.4,-29.3 L197.8,-34.3 L215.3,-37.8 L232.5,-41.2 L249.6,-44.4 L266.5,-47.6 L283.4,-49.8 L300.4,-50.7 L317.4,-51.3 L334.5,-51.8 L351.8,-52.1 L369.2,-52.3 L386.9,-51.7 L404.8,-50.7" stroke="#c4b295" stroke-width="1.7" opacity="0.55"/>
<path d="M54.9,5.5 L68.9,-7.2 L82.9,-20.0 L96.8,-32.8 L113.5,-40.6 L131.6,-45.8 L149.6,-50.9 L167.6,-56.0 L185.6,-60.7 L203.9,-63.7 L222.2,-66.6 L240.5,-69.4 L258.8,-72.2 L277.2,-74.2 L295.7,-74.9 L314.4,-75.7 L333.0,-76.4 L351.8,-77.1 L370.6,-77.8 L389.5,-77.9 L408.4,-77.4 L427.3,-77.0 L446.3,-76.7 L465.0,-74.1 L483.6,-71.1 L502.2,-68.3 L520.7,-65.4 L537.8,-58.2 L554.6,-50.4 L571.4,-42.6 L588.1,-34.7 L604.5,-26.3 L618.8,-14.4 L633.1,-2.5 L647.4,9.5 L661.7,21.5 L675.0,34.9 L688.2,48.4" stroke="#72604a" stroke-width="3.1" opacity="0.50"/>
<path d="M196.7,-84.3 L215.4,-87.1 L234.0,-89.8 L252.8,-92.4 L271.8,-94.1 L291.1,-94.4 L310.6,-94.8 L330.3,-95.2 L350.1,-95.7 L370.0,-96.4 L390.0,-96.4 L410.1,-96.1 L430.1,-95.9 L450.0,-95.8 L469.6,-93.4 L489.0,-90.8 L508.2,-88.2 L527.3,-85.6 L544.7,-78.4 L561.9,-70.5 L578.9,-62.4 L595.9,-54.1 L612.6,-45.3 L627.1,-32.7 L641.7,-19.9 L656.5,-7.1 L671.4,5.8 L685.3,20.1 L699.3,34.4 L713.4,48.6 L727.7,62.7 L740.8,77.6 L752.1,93.9" stroke="#c4b295" stroke-width="1.7" opacity="0.55"/>
<path d="M-3.0,205.8 L2.6,190.2 L8.4,174.8 L14.3,159.6 L21.2,144.9 L29.4,130.8 L37.7,116.7 L46.2,102.5 L55.9,88.9 L65.7,75.1 L75.6,61.2 L86.9,48.2 L99.9,36.6 L112.8,24.8 L125.6,12.8 L140.8,5.4 L157.2,0.3 L173.3,-4.7 L189.3,-9.7 L205.2,-14.2 L221.4,-17.0 L237.5,-19.7" stroke="#c4b295" stroke-width="4.7" opacity="0.55"/>
<path d="M302.3,48.9 L316.9,48.1 L331.4,47.3 L345.9,46.3 L360.3,45.3 L374.6,44.2 L388.7,43.6 L402.8,43.6 L416.8,43.6 L430.7,43.6 L444.4,45.6 L458.0,47.9 L471.7,50.4 L485.4,52.9 L498.1,58.9 L510.8,65.3 L523.7,71.8 L536.6,78.2 L549.4,85.0 L560.7,94.2 L572.0,103.4 L583.4,112.4 L594.8,121.4 L605.2,131.2 L615.5,141.0 L625.8,150.7 L635.9,160.4 L645.0,170.8 L652.7,182.3" stroke="#b8a585" stroke-width="2.0" opacity="0.60"/>
<path d="M387.8,27.8 L402.7,28.1 L417.5,28.4 L432.3,28.7 L446.9,30.8 L461.5,33.2 L476.1,35.6 L490.7,38.1 L504.3,43.9 L517.6,50.3 L531.0,56.6 L544.4,63.0 L557.5,69.6 L569.0,79.0 L580.4,88.4 L591.9,97.8 L603.3,107.2 L613.8,117.6 L624.3,128.1 L634.8,138.6 L645.3,149.1 L654.8,160.3 L663.0,172.7 L671.2,185.0 L679.3,197.4 L685.6,210.6 L690.4,224.6 L695.2,238.6 L699.7,252.7" stroke="#5e4d3a" stroke-width="3.0" opacity="0.40"/>
<path d="M47.5,73.4 L56.0,59.1 L64.7,45.0 L74.9,32.3 L87.2,21.4 L99.7,10.6 L112.6,-0.1 L128.4,-6.2 L145.9,-10.0 L163.6,-14.0 L181.4,-18.2 L199.3,-22.4 L217.5,-25.4 L235.5,-28.7 L253.4,-32.1 L271.0,-35.7 L288.3,-38.8 L305.5,-40.6 L322.3,-42.4 L338.9,-44.0 L355.4,-45.3 L371.7,-46.3 L388.1,-46.3 L404.6,-45.5 L421.3,-44.5 L438.2,-43.2" stroke="#5e4d3a" stroke-width="1.7" opacity="0.40"/>
<path d="M180.6,-69.7 L200.1,-72.7 L219.5,-75.8 L238.8,-79.1 L257.9,-82.4 L277.1,-85.1 L296.2,-86.6 L315.1,-88.0 L333.9,-89.4 L352.6,-90.6 L371.2,-91.7 L389.9,-92.0 L408.5,-91.4 L427.2,-90.7 L446.1,-90.0 L464.8,-86.7 L483.7,-83.0 L502.7,-79.4 L521.8,-75.8 L539.7,-67.8 L557.5,-59.4 L575.3,-51.1 L593.1,-43.0 L610.6,-34.6 L625.8,-22.8 L640.9,-11.2 L655.8,0.5 L670.6,12.1 L684.0,25.1 L697.2,38.2 L710.3,51.5 L723.3,64.9 L735.2,79.4 L745.2,95.6 L755.3,111.9" stroke="#c4b295" stroke-width="2.8" opacity="0.55"/>
<path d="M194.5,3.8 L209.3,0.0 L224.5,-2.0 L239.9,-3.8 L255.5,-5.4 L271.4,-6.9 L287.7,-7.8 L304.3,-7.7 L321.2,-7.7 L338.3,-8.0 L355.6,-8.5 L372.9,-9.3 L390.1,-9.8 L407.2,-10.1 L424.1,-10.5 L440.8,-11.1 L457.0,-9.8 L472.8,-8.1 L488.4,-6.2 L503.7,-4.2 L517.7,1.8 L531.4,8.7 L545.2,15.8 L559.0,23.3 L572.8,31.3 L584.9,42.5 L597.3,53.8 L610.0,65.1 L623.0,76.4 L635.3,88.6 L647.6,100.7 L660.1,112.5 L672.6,124.0 L684.1,136.0 L693.9,149.1 L703.4,161.9 L712.8,174.5 L719.7,188.2 L724.7,202.6" stroke="#5e4d3a" stroke-width="3.1" opacity="0.40"/>
<path d="M268.5,29.0 L282.7,26.8 L297.0,25.4 L311.5,25.1 L326.1,24.9 L340.9,24.8 L355.9,24.6 L371.1,24.5 L386.5,24.8 L402.0,25.4 L417.6,25.9 L433.2,26.2 L448.6,28.2" stroke="#c4b295" stroke-width="1.9" opacity="0.55"/>
<path d="M-15.2,92.5 L-5.4,75.8 L4.5,58.8 L15.4,42.5 L26.2,26.0 L36.8,9.5 L48.8,-5.7 L62.7,-19.1 L76.5,-32.5 L90.2,-45.8 L106.7,-53.7 L124.7,-58.7 L142.7,-63.6 L160.8,-68.3 L179.0,-72.6 L197.8,-75.0 L216.7,-77.4 L235.8,-79.8 L255.0,-82.3 L274.3,-84.1 L293.9,-84.9 L313.6,-85.8 L333.2,-86.8 L352.8,-88.0 L372.3,-89.3 L391.7,-90.0 L411.0,-90.1 L430.1,-90.2 L449.1,-90.3 L467.7,-87.9 L486.1,-85.0 L504.6,-82.0 L523.0,-78.9 L540.0,-71.1 L556.9,-62.6 L573.9,-54.0 L591.0,-45.3 L608.1,-36.1 L623.0,-23.5" stroke="#ad9a7b" stroke-width="3.7" opacity="0.60"/>
<path d="M247.3,-41.1 L266.0,-44.0 L284.7,-46.5 L303.3,-48.2 L321.7,-50.1 L339.8,-52.0 L357.5,-54.1 L374.9,-56.0 L392.0,-57.1 L408.9,-57.4 L425.6,-57.3 L442.3,-57.0 L458.8,-54.0 L475.5,-50.5 L492.4,-46.6 L509.6,-42.6 L525.8,-34.5 L542.2,-25.7 L558.9,-17.1 L575.8,-8.7 L592.7,-0.2 L607.6,11.2 L622.5,22.3 L637.3,33.1 L651.9,43.6 L665.2,55.2 L678.0,66.7 L690.5,78.2 L702.7,89.7 L713.4,102.4 L722.3,116.7" stroke="#ad9a7b" stroke-width="3.7" opacity="0.60"/>
<path d="M-68.7,194.3 L-63.9,174.9 L-56.0,156.3 L-47.9,137.5 L-40.0,118.5 L-31.4,100.0 L-21.9,81.9 L-12.6,64.0 L-3.6,46.1 L6.5,29.2 L16.4,12.6 L26.3,-3.8 L37.8,-18.6 L51.5,-31.4 L65.3,-44.0 L79.5,-56.4" stroke="#c4b295" stroke-width="2.1" opacity="0.55"/>
<path d="M-49.2,162.7 L-40.9,144.7 L-32.6,126.4 L-23.6,108.4 L-13.7,90.6 L-4.0,72.8 L5.3,55.0 L15.5,37.9 L25.4,21.0 L35.1,4.3 L46.2,-10.8 L59.3,-23.8 L72.5,-36.5 L85.7,-48.9 L102.1,-55.9 L120.3,-60.0 L138.8,-63.9 L157.7,-68.0 L176.9,-71.7 L196.7,-73.9 L216.7,-76.4 L236.8,-79.2 L256.8,-82.3 L276.9,-84.9 L296.9,-86.6 L316.6,-88.5 L336.0,-90.5 L355.2,-92.5 L374.0,-94.5 L392.5,-95.6 L410.9,-95.7 L429.1,-95.6 L447.3,-95.2 L465.3,-92.1 L483.4,-88.3 L501.8,-84.3" stroke="#5e4d3a" stroke-width="4.7" opacity="0.40"/>
<path d="M114.4,106.9 L123.9,95.5 L135.0,85.4 L146.0,75.2 L157.0,65.0 L170.1,58.8 L184.3,54.7 L198.5,50.6 L212.6,46.5 L226.7,42.8 L241.0,40.5 L255.4,38.3 L269.7,36.1 L284.1,34.0 L298.6,32.5 L313.3,32.0 L328.0,31.5 L342.8,31.0 L357.7,30.5 L372.6,29.9 L387.6,29.8 L402.6,30.1" stroke="#8a765c" stroke-width="4.7" opacity="0.50"/>
<path d="M406.8,-42.9 L425.1,-42.7 L443.4,-42.7 L461.3,-40.7 L479.0,-38.5 L496.4,-36.4 L513.7,-34.4 L529.4,-28.2 L544.7,-21.3 L559.8,-14.3 L574.9,-7.0 L589.7,0.9 L602.4,12.3 L615.3,23.8 L628.4,35.6 L641.7,47.4 L654.1,60.6 L666.6,73.7 L679.5,86.8 L692.4,99.8 L704.5,113.4 L714.9,128.2 L725.4,142.7 L735.7,156.9 L743.7,172.1 L749.8,187.9 L755.6,203.7 L760.9,219.6 L764.7,235.9 L768.2,252.3 L771.5,268.9 L774.8,285.7" stroke="#72604a" stroke-width="3.1" opacity="0.50"/>
<path d="M-61.8,391.6 L-60.2,372.6 L-58.6,353.4 L-57.2,334.0 L-56.0,314.5 L-55.0,294.8 L-54.3,275.1 L-53.9,255.5 L-53.6,236.0 L-53.1,216.8 L-50.2,198.1 L-47.4,179.6 L-41.4,162.3 L-34.9,145.4 L-28.3,128.6 L-20.6,112.4 L-11.4,96.8 L-2.0,81.2 L7.7,65.6 L18.7,50.4 L29.8,35.0 L41.0,19.4 L53.7,4.8 L68.3,-8.4 L82.8,-21.7 L97.1,-35.2 L113.9,-43.7 L132.0,-49.5 L149.9,-55.2 L167.5,-60.8 L185.1,-65.8 L202.9,-68.9" stroke="#8a765c" stroke-width="4.8" opacity="0.50"/>
<path d="M93.1,127.7 L102.1,115.0 L110.9,102.2 L120.9,90.2 L132.3,79.4 L143.5,68.5 L154.5,57.7 L167.5,50.9 L181.6,46.4 L195.5,42.1 L209.4,38.0 L223.2,34.4 L237.4,32.3 L251.7,30.4 L266.1,28.7 L280.7,27.0 L295.6,26.0 L310.8,25.9 L326.1,25.8 L341.6,25.5 L357.3,25.0 L373.0,24.4 L388.7,24.1 L404.3,24.1 L419.8,23.9 L435.2,23.6 L450.2,25.1 L464.9,26.9 L479.5,28.7 L493.8,30.6 L507.0,36.2 L519.9,42.5 L532.8,48.9 L545.7,55.6 L558.5,62.8 L569.7,72.8 L581.1,83.0 L592.7,93.2" stroke="#8a765c" stroke-width="3.7" opacity="0.50"/>
<path d="M59.0,256.4 L60.9,242.7 L65.3,230.1 L70.0,217.6 L74.9,205.4 L80.7,193.5 L87.6,182.1 L94.8,170.7 L102.2,159.1 L110.7,147.9 L119.2,136.4 L127.8,124.6 L137.4,113.6 L148.4,103.6 L159.3,93.4 L169.9,83.1 L182.4,76.5 L195.7,72.0 L208.9,67.6 L221.8,63.4 L234.6,59.6 L247.7,57.4 L260.7,55.4 L273.8,53.6 L287.1,52.1 L300.6,51.3 L314.5,51.4 L328.6,51.5 L342.9,51.6 L357.5,51.6 L372.2,51.3 L387.1,51.4 L402.0,51.6 L416.8,51.6 L431.5,51.4 L445.9,52.8 L460.1,54.3 L473.9,55.8 L487.6,57.3" stroke="#c4b295" stroke-width="1.9" opacity="0.55"/>
<path d="M441.6,-39.7 L460.0,-37.3 L478.3,-34.9 L496.3,-32.8 L514.1,-30.9 L530.4,-25.1 L546.0,-18.8 L561.4,-12.3 L576.5,-5.7 L591.1,1.5 L603.5,12.2 L615.9,23.3 L628.3,34.7 L640.9,46.4 L652.6,59.6" stroke="#5e4d3a" stroke-width="1.6" opacity="0.40"/>
<path d="M387.3,55.8 L401.4,56.0 L415.5,56.2 L429.6,56.2 L443.4,58.0 L457.1,59.9 L470.7,61.9 L484.2,63.9 L496.6,69.1 L508.8,74.8 L521.0,80.7 L533.2,86.6 L545.1,92.9 L555.6,101.8 L566.1,110.8 L576.6,119.9 L587.3,128.9 L597.2,139.0 L607.1,149.0 L617.1,159.0 L627.2,168.9 L636.4,179.4 L644.3,190.9 L652.2,202.3 L660.0,213.6 L666.1,225.7 L670.6,238.5 L675.0,251.2 L679.1,264.1 L682.1,277.3 L685.0,290.5 L687.9,303.9" stroke="#5e4d3a" stroke-width="1.7" opacity="0.40"/>
<path d="M332.0,58.2 L346.4,57.4 L360.8,56.5 L375.1,55.4 L389.3,54.6 L403.3,54.3 L417.0,54.0 L430.7,53.7 L443.9,55.2 L457.1,57.1 L470.1,59.2 L483.2,61.5 L495.2,67.2 L507.2,73.5 L519.3,79.9 L531.6,86.4 L543.9,93.3 L554.8,102.6 L565.8,112.0 L577.0,121.1 L588.3,130.2 L598.7,140.0 L609.1,149.7 L619.5,159.2 L629.7,168.5 L638.9,178.5 L646.7,189.5 L654.2,200.4 L661.6,211.4 L667.1,223.3 L671.0,236.1 L674.9,249.0 L678.5,262.2 L681.1,275.9 L683.8,289.7 L686.6,303.7 L689.6,317.7" stroke="#b8a585" stroke-width="4.4" opacity="0.60"/>
<path d="M408.6,-81.4 L426.3,-80.9 L444.1,-80.1 L461.8,-76.6 L479.7,-72.6 L498.0,-68.6 L516.5,-64.4 L534.0,-56.1 L551.5,-47.2 L569.3,-38.6 L587.2,-30.3 L604.9,-21.9 L620.4,-10.4 L635.7,0.9 L650.8,11.9 L665.7,22.8 L679.0,34.9 L692.0,47.2 L704.7,59.5 L717.2,72.0 L728.3,85.8 L737.5,101.3 L746.8,117.1 L756.2,133.2 L763.4,150.7 L768.9,169.3 L774.7,188.0 L780.6,206.8 L785.3,226.0 L790.3,245.0 L795.5,263.8 L800.8,282.3 L805.6,300.6 L810.2,318.6 L814.6,336.4 L818.8,353.9 L822.7,371.3 L826.4,388.6" stroke="#d2c3a6" stroke-width="4.1" opacity="0.50"/>
<path d="M-38.3,280.4 L-38.2,262.4 L-38.0,244.7 L-37.3,227.1 L-34.0,210.0 L-30.6,192.9 L-24.0,176.7 L-17.0,160.6 L-9.8,144.4 L-1.6,128.5 L7.8,112.9 L17.3,97.2 L26.7,81.3 L37.1,65.9 L47.4,50.3 L57.5,34.7 L68.9,20.3 L82.0,7.5 L95.0,-5.3 L107.8,-17.9 L123.2,-25.5 L140.0,-30.3" stroke="#b8a585" stroke-width="1.9" opacity="0.60"/>
<path d="M373.5,52.9 L386.3,52.8 L399.2,53.5 L412.2,54.5 L425.5,55.6 L438.9,58.6 L452.5,61.8 L466.5,65.0 L480.7,68.0 L494.1,74.0 L507.5,80.2 L520.9,86.1 L534.3,91.7 L547.3,97.4 L558.6,105.3 L569.6,113.1 L580.3,120.8 L590.8,128.6 L600.0,137.4 L609.0,146.5 L617.9,155.8 L626.6,165.4 L634.5,176.1 L641.2,188.0 L648.1,200.2 L655.2,212.5 L660.8,225.9 L665.3,239.9 L670.2,253.8 L675.0,267.7 L679.1,281.6 L683.2,295.3 L687.3,308.6 L691.5,321.7 L695.0,334.6 L698.3,347.3 L701.2,359.9" stroke="#d2c3a6" stroke-width="3.7" opacity="0.50"/>
<path d="M63.2,154.9 L69.7,141.7 L76.4,128.7 L84.2,116.5 L92.1,104.5 L100.4,92.6 L110.1,81.8 L121.7,72.3 L133.7,62.6 L145.7,52.8 L160.3,46.8 L176.1,42.8 L191.8,38.4" stroke="#d2c3a6" stroke-width="3.8" opacity="0.50"/>
<path d="M174.9,36.5 L189.3,32.6 L203.6,28.8 L218.1,25.5 L233.1,23.6 L248.2,21.8 L263.4,20.1 L278.9,18.3 L294.5,17.0 L310.4,16.5 L326.3,15.9 L342.3,15.1 L358.2,14.2 L374.1,13.1 L389.8,12.4 L405.4,12.2 L420.9,11.9 L436.1,11.7 L451.1,13.5 L465.8,15.6" stroke="#ad9a7b" stroke-width="2.4" opacity="0.60"/>
<path d="M494.6,23.2 L508.3,29.3 L521.9,36.0 L535.5,42.8 L549.2,49.7 L562.8,56.9 L574.6,66.9 L586.6,76.9 L598.7,86.8 L610.8,96.7 L622.0,107.6 L633.2,118.4 L644.3,129.2 L655.4,139.9 L665.5,151.2 L674.0,163.7 L682.5,176.2 L690.8,188.7 L697.2,202.2 L701.9,216.5 L706.5,230.9 L710.9,245.4 L714.2,260.4 L717.4,275.5 L720.7,290.6 L724.1,305.8 L727.2,321.1 L730.1,336.5 L733.2,351.8 L736.3,367.1 L739.5,382.3 L742.7,397.4" stroke="#ad9a7b" stroke-width="4.2" opacity="0.60"/>
<path d="M601.3,17.3 L614.3,28.3 L627.2,39.5 L640.3,50.9 L652.3,63.5 L664.5,76.3 L676.8,89.0 L689.3,101.8 L700.7,115.3 L710.7,130.1 L720.7,144.7 L730.8,159.2 L738.6,174.6 L744.6,190.7 L750.5,206.7 L756.0,222.8 L760.1,239.1 L764.0,255.5 L767.7,271.9 L771.3,288.5 L774.4,305.2 L777.2,322.2 L780.0,339.3 L782.9,356.6 L785.8,373.9" stroke="#5e4d3a" stroke-width="1.6" opacity="0.40"/>
<path d="M259.7,1.9 L276.4,-0.6 L293.0,-2.7 L309.6,-4.0 L326.0,-5.3 L342.3,-6.8 L358.4,-8.2 L374.3,-9.7 L390.0,-10.4 L405.6,-10.4 L421.1,-10.3 L436.6,-10.0 L452.0,-7.4 L467.4,-4.4 L482.9,-1.2 L498.6,2.1 L513.3,9.1 L528.1,16.7 L543.0,24.2 L558.1,31.5 L573.0,39.1 L586.2,49.4 L599.3,59.5" stroke="#ad9a7b" stroke-width="3.1" opacity="0.60"/>
<path d="M76.3,223.9 L82.1,211.0 L88.4,198.3 L95.6,185.9 L102.6,173.3 L109.5,160.8 L117.1,148.7 L124.5,136.6 L131.8,124.7 L140.1,113.7 L149.8,104.2 L159.5,94.8 L169.2,85.6 L181.0,80.2 L194.1,77.0 L207.3,73.9 L220.6,70.8 L234.2,67.9 L248.1,66.2 L262.2,64.5 L276.4,62.6 L290.6,60.6 L304.8,58.9 L319.1,58.0 L333.3,56.9 L347.4,55.8 L361.4,54.6 L375.1,53.4" stroke="#d2c3a6" stroke-width="1.8" opacity="0.50"/>
</g>
</g></g>

<path d="M704,400 C700,370 693,340 689,323 C684,300 680,280 675,264 C670,245 666,232 660,220 C650,200 642,188 631,176 C618,160 603,145 587,132 C572,118 558,104 543,94 C525,82 505,72 484,65 C465,58 445,50 425,47 C400,45 390,48 377,52 C340,55 290,62 235,73 C212,78 195,82 176,88 C160,98 150,108 138,123 C128,135 120,150 111,164 C102,178 95,190 88,205 C80,222 75,235 70,249 C67,260 66,270 64,279 C62,320 60,360 59,400" stroke="#b79c85" stroke-width="8" fill="none" opacity="0.6" filter="url(#b4)"/>
<!-- brows -->
<g filter="url(#b2)">
 <path d="M94,346 C115,324 140,312 161,311 C190,310 215,316 235,322 C260,330 280,338 293,346 C303,353 312,362 318,374 C305,375 292,375 279,374 C255,365 230,356 205,351 C170,346 130,344 94,346 Z" fill="#7b5a43" opacity="0.92"/>
 <path d="M439,376 C450,350 473,331 499,320 C530,307 560,297 587,296 C612,296 632,303 646,315 C653,322 657,330 658,339 C645,336 632,335 616,335 C585,336 555,340 528,347 C500,355 470,365 439,376 Z" fill="#7b5a43" opacity="0.92"/>
</g>
<!-- browstrands -->
<g fill="none" stroke-linecap="round" filter="url(#b1)">
<path d="M146.3,332.5 L135.4,331.0" stroke="#8c6e55" stroke-width="2.0" opacity="0.53"/>
<path d="M106.2,343.7 L96.2,345.4" stroke="#6d4f3a" stroke-width="1.4" opacity="0.79"/>
<path d="M212.0,335.6 L201.6,331.4" stroke="#6d4f3a" stroke-width="1.5" opacity="0.56"/>
<path d="M295.1,360.5 L297.8,352.8" stroke="#5e4331" stroke-width="1.4" opacity="0.88"/>
<path d="M113.0,341.3 L98.5,343.1" stroke="#7f624b" stroke-width="1.8" opacity="0.79"/>
<path d="M281.3,364.6 L286.3,350.1" stroke="#8c6e55" stroke-width="2.1" opacity="0.73"/>
<path d="M305.1,361.5 L308.7,351.2" stroke="#5e4331" stroke-width="1.4" opacity="0.59"/>
<path d="M302.8,367.5 L307.1,355.2" stroke="#7f624b" stroke-width="1.7" opacity="0.83"/>
<path d="M219.6,336.7 L209.3,332.3" stroke="#6d4f3a" stroke-width="2.3" opacity="0.77"/>
<path d="M291.3,371.8 L296.5,356.8" stroke="#6d4f3a" stroke-width="2.0" opacity="0.63"/>
<path d="M211.0,335.5 L202.8,332.2" stroke="#6d4f3a" stroke-width="2.0" opacity="0.90"/>
<path d="M152.2,327.6 L140.5,325.7" stroke="#8c6e55" stroke-width="1.3" opacity="0.82"/>
<path d="M182.5,327.3 L172.6,324.3" stroke="#8c6e55" stroke-width="2.2" opacity="0.52"/>
<path d="M231.5,332.4 L219.0,326.6" stroke="#7f624b" stroke-width="1.9" opacity="0.87"/>
<path d="M153.1,328.3 L144.9,326.9" stroke="#5e4331" stroke-width="1.3" opacity="0.74"/>
<path d="M107.6,337.7 L96.5,339.2" stroke="#7f624b" stroke-width="1.4" opacity="0.52"/>
<path d="M281.2,357.5 L286.3,342.7" stroke="#8c6e55" stroke-width="1.7" opacity="0.85"/>
<path d="M178.4,336.0 L165.4,332.4" stroke="#5e4331" stroke-width="1.9" opacity="0.88"/>
<path d="M205.7,333.3 L192.8,328.5" stroke="#6d4f3a" stroke-width="2.3" opacity="0.67"/>
<path d="M150.0,329.6 L139.4,327.9" stroke="#8c6e55" stroke-width="2.4" opacity="0.63"/>
<path d="M174.3,332.0 L165.5,329.7" stroke="#7f624b" stroke-width="1.8" opacity="0.77"/>
<path d="M171.5,333.8 L158.0,330.5" stroke="#5e4331" stroke-width="1.9" opacity="0.88"/>
<path d="M107.4,339.5 L94.5,341.5" stroke="#7f624b" stroke-width="1.9" opacity="0.63"/>
<path d="M172.5,329.0 L161.9,326.2" stroke="#7f624b" stroke-width="1.6" opacity="0.65"/>
<path d="M268.4,341.4 L257.5,335.1" stroke="#6d4f3a" stroke-width="1.6" opacity="0.59"/>
<path d="M267.8,348.2 L270.9,339.2" stroke="#8c6e55" stroke-width="2.0" opacity="0.54"/>
<path d="M225.6,344.1 L213.4,338.6" stroke="#6d4f3a" stroke-width="1.7" opacity="0.84"/>
<path d="M133.7,332.3 L120.5,331.5" stroke="#8c6e55" stroke-width="1.5" opacity="0.81"/>
<path d="M110.1,343.4 L99.6,344.8" stroke="#6d4f3a" stroke-width="2.2" opacity="0.64"/>
<path d="M273.7,349.4 L278.0,337.2" stroke="#6d4f3a" stroke-width="1.7" opacity="0.71"/>
<path d="M276.6,357.1 L280.9,344.7" stroke="#7f624b" stroke-width="1.7" opacity="0.66"/>
<path d="M295.6,356.3 L298.2,348.7" stroke="#8c6e55" stroke-width="1.9" opacity="0.89"/>
<path d="M254.9,337.4 L244.7,331.9" stroke="#7f624b" stroke-width="1.9" opacity="0.86"/>
<path d="M276.5,365.4 L281.7,350.6" stroke="#5e4331" stroke-width="2.2" opacity="0.52"/>
<path d="M286.9,366.6 L292.0,352.0" stroke="#8c6e55" stroke-width="1.9" opacity="0.51"/>
<path d="M260.4,341.1 L251.3,336.0" stroke="#5e4331" stroke-width="1.8" opacity="0.67"/>
<path d="M296.1,366.5 L299.6,356.4" stroke="#7f624b" stroke-width="2.4" opacity="0.72"/>
<path d="M270.5,346.2 L273.7,337.0" stroke="#5e4331" stroke-width="1.8" opacity="0.83"/>
<path d="M136.0,336.6 L120.7,335.7" stroke="#6d4f3a" stroke-width="2.2" opacity="0.50"/>
<path d="M229.9,343.3 L222.3,339.8" stroke="#7f624b" stroke-width="1.5" opacity="0.75"/>
<path d="M207.7,328.2 L197.8,324.4" stroke="#5e4331" stroke-width="2.2" opacity="0.81"/>
<path d="M110.0,335.5 L98.2,336.9" stroke="#5e4331" stroke-width="2.2" opacity="0.53"/>
<path d="M203.2,331.1 L193.3,327.5" stroke="#7f624b" stroke-width="1.7" opacity="0.66"/>
<path d="M162.1,329.1 L146.5,325.9" stroke="#8c6e55" stroke-width="1.3" opacity="0.72"/>
<path d="M251.9,341.7 L244.3,337.6" stroke="#6d4f3a" stroke-width="1.3" opacity="0.68"/>
<path d="M238.0,341.0 L226.2,335.3" stroke="#5e4331" stroke-width="1.9" opacity="0.67"/>
<path d="M175.6,331.5 L162.4,328.0" stroke="#8c6e55" stroke-width="2.3" opacity="0.67"/>
<path d="M104.9,338.8 L94.9,340.4" stroke="#5e4331" stroke-width="2.2" opacity="0.59"/>
<path d="M124.4,330.9 L113.8,330.8" stroke="#7f624b" stroke-width="1.3" opacity="0.78"/>
<path d="M294.6,370.3 L299.4,356.4" stroke="#8c6e55" stroke-width="2.0" opacity="0.79"/>
<path d="M218.9,330.8 L207.2,325.9" stroke="#5e4331" stroke-width="1.8" opacity="0.59"/>
<path d="M178.6,331.9 L166.5,328.5" stroke="#8c6e55" stroke-width="1.4" opacity="0.51"/>
<path d="M276.4,351.9 L281.2,338.0" stroke="#8c6e55" stroke-width="2.2" opacity="0.88"/>
<path d="M218.8,340.0 L211.2,336.7" stroke="#6d4f3a" stroke-width="1.3" opacity="0.80"/>
<path d="M299.0,357.3 L302.5,347.3" stroke="#6d4f3a" stroke-width="2.2" opacity="0.60"/>
<path d="M135.4,331.1 L122.5,330.2" stroke="#8c6e55" stroke-width="1.5" opacity="0.74"/>
<path d="M295.6,368.0 L300.8,353.1" stroke="#8c6e55" stroke-width="1.8" opacity="0.89"/>
<path d="M182.2,334.4 L173.3,331.7" stroke="#8c6e55" stroke-width="1.4" opacity="0.66"/>
<path d="M287.3,355.2 L291.2,343.9" stroke="#8c6e55" stroke-width="2.3" opacity="0.71"/>
<path d="M188.9,334.6 L179.9,331.7" stroke="#7f624b" stroke-width="2.1" opacity="0.56"/>
<path d="M207.2,340.4 L193.4,335.1" stroke="#7f624b" stroke-width="2.0" opacity="0.84"/>
<path d="M226.5,339.3 L212.0,332.9" stroke="#6d4f3a" stroke-width="1.6" opacity="0.61"/>
<path d="M267.5,349.1 L271.7,337.2" stroke="#6d4f3a" stroke-width="1.6" opacity="0.81"/>
<path d="M129.5,339.2 L117.7,338.8" stroke="#6d4f3a" stroke-width="1.8" opacity="0.83"/>
<path d="M269.8,355.6 L273.7,344.4" stroke="#5e4331" stroke-width="2.2" opacity="0.66"/>
<path d="M254.9,352.2 L244.6,346.5" stroke="#6d4f3a" stroke-width="2.3" opacity="0.76"/>
<path d="M268.1,341.7 L259.7,336.7" stroke="#7f624b" stroke-width="1.5" opacity="0.58"/>
<path d="M151.4,328.6 L138.0,326.4" stroke="#5e4331" stroke-width="2.3" opacity="0.60"/>
<path d="M281.3,355.3 L285.0,344.5" stroke="#5e4331" stroke-width="1.3" opacity="0.61"/>
<path d="M294.2,355.4 L298.1,344.4" stroke="#7f624b" stroke-width="1.2" opacity="0.63"/>
<path d="M530.7,329.8 L539.2,325.3" stroke="#8c6e55" stroke-width="1.7" opacity="0.72"/>
<path d="M466.1,359.2 L461.7,346.6" stroke="#5e4331" stroke-width="1.7" opacity="0.71"/>
<path d="M487.7,346.9 L498.8,339.1" stroke="#7f624b" stroke-width="2.1" opacity="0.62"/>
<path d="M583.4,322.6 L597.4,318.8" stroke="#7f624b" stroke-width="1.3" opacity="0.88"/>
<path d="M507.7,339.0 L518.1,332.6" stroke="#8c6e55" stroke-width="1.8" opacity="0.52"/>
<path d="M498.1,345.7 L509.7,338.0" stroke="#6d4f3a" stroke-width="1.4" opacity="0.86"/>
<path d="M578.1,317.1 L592.9,312.6" stroke="#6d4f3a" stroke-width="2.3" opacity="0.76"/>
<path d="M579.4,319.8 L589.4,316.8" stroke="#6d4f3a" stroke-width="1.7" opacity="0.62"/>
<path d="M476.4,350.3 L471.8,337.3" stroke="#8c6e55" stroke-width="1.6" opacity="0.61"/>
<path d="M520.8,338.5 L528.0,334.3" stroke="#7f624b" stroke-width="1.5" opacity="0.81"/>
<path d="M510.5,334.2 L520.1,328.4" stroke="#5e4331" stroke-width="1.6" opacity="0.84"/>
<path d="M463.9,357.8 L461.0,349.5" stroke="#5e4331" stroke-width="1.9" opacity="0.86"/>
<path d="M468.1,365.8 L463.9,354.0" stroke="#8c6e55" stroke-width="2.2" opacity="0.80"/>
<path d="M565.5,318.2 L576.0,314.3" stroke="#6d4f3a" stroke-width="1.9" opacity="0.57"/>
<path d="M482.2,360.3 L478.6,350.0" stroke="#7f624b" stroke-width="1.2" opacity="0.82"/>
<path d="M628.8,327.9 L639.8,328.6" stroke="#7f624b" stroke-width="2.0" opacity="0.89"/>
<path d="M585.6,318.6 L600.0,314.8" stroke="#8c6e55" stroke-width="1.2" opacity="0.58"/>
<path d="M573.9,317.1 L587.2,312.8" stroke="#6d4f3a" stroke-width="1.8" opacity="0.71"/>
<path d="M534.2,325.0 L545.1,319.5" stroke="#5e4331" stroke-width="2.2" opacity="0.87"/>
<path d="M642.2,324.3 L652.3,326.2" stroke="#6d4f3a" stroke-width="1.4" opacity="0.82"/>
<path d="M572.8,316.2 L583.1,312.7" stroke="#6d4f3a" stroke-width="1.8" opacity="0.70"/>
<path d="M447.4,370.4 L443.9,360.4" stroke="#7f624b" stroke-width="2.0" opacity="0.55"/>
<path d="M621.2,323.6 L636.6,323.5" stroke="#5e4331" stroke-width="2.1" opacity="0.64"/>
<path d="M610.6,325.5 L625.4,324.1" stroke="#8c6e55" stroke-width="2.0" opacity="0.59"/>
<path d="M504.2,343.8 L513.7,337.7" stroke="#6d4f3a" stroke-width="2.0" opacity="0.66"/>
<path d="M535.7,323.2 L549.0,316.7" stroke="#6d4f3a" stroke-width="2.0" opacity="0.62"/>
<path d="M537.4,331.9 L547.4,326.9" stroke="#6d4f3a" stroke-width="1.7" opacity="0.51"/>
<path d="M491.7,350.3 L501.2,343.7" stroke="#7f624b" stroke-width="1.9" opacity="0.59"/>
<path d="M443.8,372.1 L439.1,358.7" stroke="#6d4f3a" stroke-width="2.2" opacity="0.71"/>
<path d="M472.2,350.9 L468.0,338.9" stroke="#6d4f3a" stroke-width="2.0" opacity="0.56"/>
<path d="M570.6,320.9 L579.5,317.8" stroke="#5e4331" stroke-width="1.7" opacity="0.63"/>
<path d="M453.4,373.9 L450.1,364.6" stroke="#5e4331" stroke-width="1.7" opacity="0.51"/>
<path d="M646.0,326.7 L654.5,328.7" stroke="#8c6e55" stroke-width="1.4" opacity="0.63"/>
<path d="M470.7,368.6 L466.5,356.6" stroke="#7f624b" stroke-width="1.5" opacity="0.82"/>
<path d="M538.5,333.9 L547.8,329.3" stroke="#6d4f3a" stroke-width="1.9" opacity="0.51"/>
<path d="M510.1,344.6 L519.1,339.0" stroke="#5e4331" stroke-width="2.0" opacity="0.89"/>
<path d="M566.7,315.9 L574.5,313.1" stroke="#5e4331" stroke-width="1.2" opacity="0.70"/>
<path d="M539.3,323.7 L550.2,318.4" stroke="#7f624b" stroke-width="1.4" opacity="0.89"/>
<path d="M538.5,332.6 L552.3,325.9" stroke="#5e4331" stroke-width="1.7" opacity="0.80"/>
<path d="M572.8,320.7 L587.6,315.9" stroke="#6d4f3a" stroke-width="2.2" opacity="0.55"/>
<path d="M517.8,332.0 L529.4,325.3" stroke="#8c6e55" stroke-width="1.4" opacity="0.80"/>
<path d="M596.9,323.8 L609.1,321.4" stroke="#6d4f3a" stroke-width="1.6" opacity="0.67"/>
<path d="M485.4,352.2 L495.0,345.2" stroke="#7f624b" stroke-width="2.2" opacity="0.70"/>
<path d="M600.3,324.8 L613.6,322.5" stroke="#8c6e55" stroke-width="1.3" opacity="0.57"/>
<path d="M602.5,323.4 L611.1,321.9" stroke="#5e4331" stroke-width="1.6" opacity="0.74"/>
<path d="M611.8,316.6 L624.7,315.4" stroke="#5e4331" stroke-width="1.7" opacity="0.86"/>
<path d="M597.7,318.3 L608.4,316.2" stroke="#5e4331" stroke-width="1.4" opacity="0.81"/>
<path d="M635.5,324.0 L645.9,325.2" stroke="#8c6e55" stroke-width="1.3" opacity="0.76"/>
<path d="M484.2,339.8 L491.8,334.5" stroke="#6d4f3a" stroke-width="1.9" opacity="0.50"/>
<path d="M487.6,354.2 L495.5,348.5" stroke="#8c6e55" stroke-width="1.8" opacity="0.86"/>
<path d="M504.1,345.7 L516.1,338.0" stroke="#8c6e55" stroke-width="1.4" opacity="0.53"/>
<path d="M619.2,317.7 L627.4,317.2" stroke="#5e4331" stroke-width="1.4" opacity="0.86"/>
<path d="M460.6,364.1 L457.4,354.8" stroke="#5e4331" stroke-width="2.0" opacity="0.80"/>
<path d="M625.8,321.8 L638.6,322.1" stroke="#8c6e55" stroke-width="2.1" opacity="0.62"/>
<path d="M640.3,326.7 L651.2,328.7" stroke="#5e4331" stroke-width="1.8" opacity="0.69"/>
<path d="M596.8,315.6 L607.4,313.4" stroke="#8c6e55" stroke-width="2.1" opacity="0.87"/>
<path d="M585.8,319.2 L599.6,315.6" stroke="#5e4331" stroke-width="1.9" opacity="0.59"/>
<path d="M513.1,343.5 L522.2,337.9" stroke="#8c6e55" stroke-width="1.7" opacity="0.60"/>
<path d="M506.3,342.2 L514.4,337.0" stroke="#6d4f3a" stroke-width="2.2" opacity="0.89"/>
<path d="M570.6,327.1 L582.2,323.0" stroke="#8c6e55" stroke-width="1.6" opacity="0.58"/>
<path d="M571.3,321.0 L585.6,316.2" stroke="#8c6e55" stroke-width="1.8" opacity="0.74"/>
<path d="M455.8,376.4 L453.1,368.7" stroke="#5e4331" stroke-width="1.2" opacity="0.56"/>
<path d="M544.2,320.9 L554.9,315.9" stroke="#6d4f3a" stroke-width="2.1" opacity="0.61"/>
<path d="M527.4,329.2 L539.7,322.7" stroke="#7f624b" stroke-width="1.4" opacity="0.68"/>
<path d="M634.2,324.5 L643.8,325.5" stroke="#8c6e55" stroke-width="2.1" opacity="0.78"/>
<path d="M641.9,332.4 L656.4,336.1" stroke="#7f624b" stroke-width="2.3" opacity="0.67"/>
<path d="M636.8,326.2 L652.6,328.8" stroke="#6d4f3a" stroke-width="1.6" opacity="0.84"/>
<path d="M494.1,343.1 L506.6,334.7" stroke="#7f624b" stroke-width="2.1" opacity="0.87"/>
<path d="M547.3,319.7 L559.2,314.4" stroke="#6d4f3a" stroke-width="1.8" opacity="0.57"/>
<path d="M452.3,366.4 L447.6,353.0" stroke="#8c6e55" stroke-width="1.6" opacity="0.89"/>
</g>
<!-- eye sockets -->
<g filter="url(#b8)">
 <path d="M130,425 C160,385 230,375 300,440" stroke="#c9a08e" stroke-width="14" fill="none" opacity="0.45"/>
 <path d="M455,445 C510,380 590,370 630,415" stroke="#c9a08e" stroke-width="14" fill="none" opacity="0.45"/>
 <ellipse cx="220" cy="478" rx="70" ry="14" fill="#c49a86" opacity="0.5"/>
 <ellipse cx="545" cy="472" rx="70" ry="14" fill="#c49a86" opacity="0.5"/>
 <ellipse cx="205" cy="400" rx="55" ry="10" fill="#e0c4b6" opacity="0.6"/>
 <ellipse cx="545" cy="398" rx="55" ry="10" fill="#e0c4b6" opacity="0.6"/>
</g>
<!-- eyes -->
<g filter="url(#b1)">
 <path d="M144,427 C165,412 185,408 205,409 C230,410 250,416 265,425 C278,433 286,442 292,450 C280,452 265,451 250,452 C230,455 210,455 190,450 C172,445 158,437 144,427 Z" fill="#d8ccc7"/>
 <path d="M463,446 C478,430 500,415 525,409 C550,404 575,408 595,413 C605,416 612,418 618,421 C605,432 590,442 565,450 C540,454 500,452 463,446 Z" fill="#d8ccc7"/>
</g>
<g clip-path="url(#cEyeL)">
 <circle cx="218" cy="433" r="28" fill="url(#gIris)"/>
 <circle cx="220" cy="426" r="8" fill="#1a1614"/>
 <circle cx="220" cy="418" r="3.2" fill="#fff"/>
 <path d="M140,420 C170,405 240,405 300,445" stroke="#6b5046" stroke-width="8" fill="none" opacity="0.5" filter="url(#b2)"/>
</g>
<g clip-path="url(#cEyeR)">
 <circle cx="535" cy="429" r="28" fill="url(#gIris)"/>
 <circle cx="534" cy="422" r="7.5" fill="#1a1614"/>
 <circle cx="532" cy="414" r="3.2" fill="#fff"/>
 <path d="M460,440 C500,405 570,400 625,418" stroke="#6b5046" stroke-width="8" fill="none" opacity="0.5" filter="url(#b2)"/>
</g>
<g fill="none" stroke-linecap="round" filter="url(#b1)">
 <path d="M144,427 C165,412 185,408 205,409 C230,410 250,416 265,425 C278,433 286,442 292,450" stroke="#4e3429" stroke-width="5.5"/>
 <path d="M463,446 C478,430 500,415 525,409 C550,404 575,408 595,413 C605,416 612,418 620,421" stroke="#4e3429" stroke-width="5.5"/>
 <path d="M140,415 C160,400 180,394 200,394 C235,395 270,415 292,448" stroke="#b38a78" stroke-width="3.5" opacity="0.5"/>
 <path d="M460,441 C480,410 500,395 530,389 C565,385 595,392 616,402" stroke="#b38a78" stroke-width="3.5" opacity="0.5"/>
 <path d="M160,440 C185,452 210,456 250,452 C270,451 283,451 292,450" stroke="#c8a298" stroke-width="3"/>
 <path d="M463,447 C500,453 540,455 565,450 C590,442 605,432 618,422" stroke="#c8a298" stroke-width="3"/>
</g>
<!-- blush -->
<g clip-path="url(#cFace)"><g filter="url(#b30)"><ellipse cx="190" cy="690" rx="60" ry="70" fill="#d8a08e" opacity="0.4"/><ellipse cx="565" cy="690" rx="60" ry="70" fill="#d8a08e" opacity="0.4"/></g></g>
<!-- nose -->
<g filter="url(#b16)">
 <path d="M332,440 C330,500 320,560 300,605" stroke="#c89a84" stroke-width="22" fill="none" opacity="0.5"/>
 <path d="M422,440 C424,500 434,560 454,605" stroke="#c89a84" stroke-width="22" fill="none" opacity="0.5"/>
 <ellipse cx="378" cy="520" rx="24" ry="75" fill="#e3c8b9" opacity="0.75"/>
</g>
<g filter="url(#b8)">
 <ellipse cx="376" cy="600" rx="26" ry="22" fill="#e6cbbd"/>
 <path d="M296,595 C288,625 298,648 320,655 C335,660 350,658 358,652 C345,640 330,620 320,598 Z" fill="#b98a74" opacity="0.6"/>
 <path d="M458,595 C466,625 456,648 434,655 C419,660 404,658 396,652 C409,640 424,620 434,598 Z" fill="#b98a74" opacity="0.6"/>
 <ellipse cx="377" cy="676" rx="40" ry="10" fill="#c0917b" opacity="0.45"/>
</g>
<g filter="url(#b4)">
 <path d="M300,625 C300,645 315,655 335,656 C348,657 356,654 362,650" stroke="#9c6b58" stroke-width="5" fill="none" opacity="0.55"/>
 <path d="M454,625 C454,645 439,655 419,656 C406,657 398,654 392,650" stroke="#9c6b58" stroke-width="5" fill="none" opacity="0.55"/>
</g>
<g filter="url(#b2)">
 <path d="M318,650 C326,638 346,636 358,650 C350,656 330,656 318,650 Z" fill="#7a4a3b" opacity="0.8"/>
 <path d="M436,650 C428,638 408,636 396,650 C404,656 424,656 436,650 Z" fill="#7a4a3b" opacity="0.8"/>
</g>
<!-- lips -->
<g filter="url(#b2)">
 <path d="M254,752 C270,745 285,738 300,731 C315,723 332,714 348,711.5 C360,711 368,717 376,719 C384,717 394,710 406,710 C422,712 438,722 452,729 C468,737 485,744 502,748 C480,752 430,754 377,754 C320,754 285,754 254,752 Z" fill="#c4887b"/>
 <path d="M256,753 C290,757 330,757 377,756 C425,756 470,753 501,749 C494,760 486,770 476,780 C462,795 447,805 430,811 C412,817 395,818 376,818 C356,818 338,815 322,808 C302,798 283,782 256,753 Z" fill="#cd948a"/>
</g>
<ellipse cx="380" cy="785" rx="60" ry="16" fill="#d9a8a0" opacity="0.7" filter="url(#b8)"/>
<g filter="url(#b2)" fill="none">
 <path d="M258,752 C290,756 330,757 377,756 C425,756 470,753 500,749" stroke="#936055" stroke-width="2.5"/>
 <path d="M320,755 C345,758 360,758 377,757 C395,757 410,757 435,755" stroke="#7e4a40" stroke-width="3" opacity="0.7"/>
</g>
<!-- overlay text & badges -->
<text x="91" y="1176" font-family="Liberation Sans" font-size="32" letter-spacing="3.5" fill="#4a3020" opacity="0.95" filter="url(#thin)">8K ULTRA-DETAILED PORTRAIT</text>
<circle cx="32.8" cy="1178.5" r="14.4" fill="#9a8478" opacity="0.6"/>
<path d="M37.6,1172.6 A7.2,7.2 0 1 0 39,1179.5 H33" fill="none" stroke="#fbf6f2" stroke-width="3.3"/>
<rect x="59.8" y="1164.4" width="67.2" height="28.2" rx="14.1" fill="#9a8478" opacity="0.6"/>
<g transform="translate(68.8,1171)">
 <rect x="0.8" y="0.8" width="16" height="13" rx="1" fill="none" stroke="#fbf6f2" stroke-width="1.8"/>
 <path d="M1.5,13 L1.5,10 L6,6 L9.5,9.5 L11.5,8 L16,11.5 L16,13 Z" fill="#fbf6f2"/>
 <circle cx="11.5" cy="4.5" r="1.5" fill="#fbf6f2"/>
</g>
<text x="93.5" y="1184.2" font-family="Liberation Sans" font-weight="bold" font-size="18" fill="#fbf6f2">2K</text>
<!-- cursor -->
<path d="M380.2,889 L380.6,949.4 L395.8,942.7 L408,967.5 L415.5,964 L406.7,938.5 L422.8,935 Z" fill="#000" stroke="#fff" stroke-width="5.5" stroke-linejoin="round" paint-order="stroke"/>
</svg>

</div>
</body></html>
